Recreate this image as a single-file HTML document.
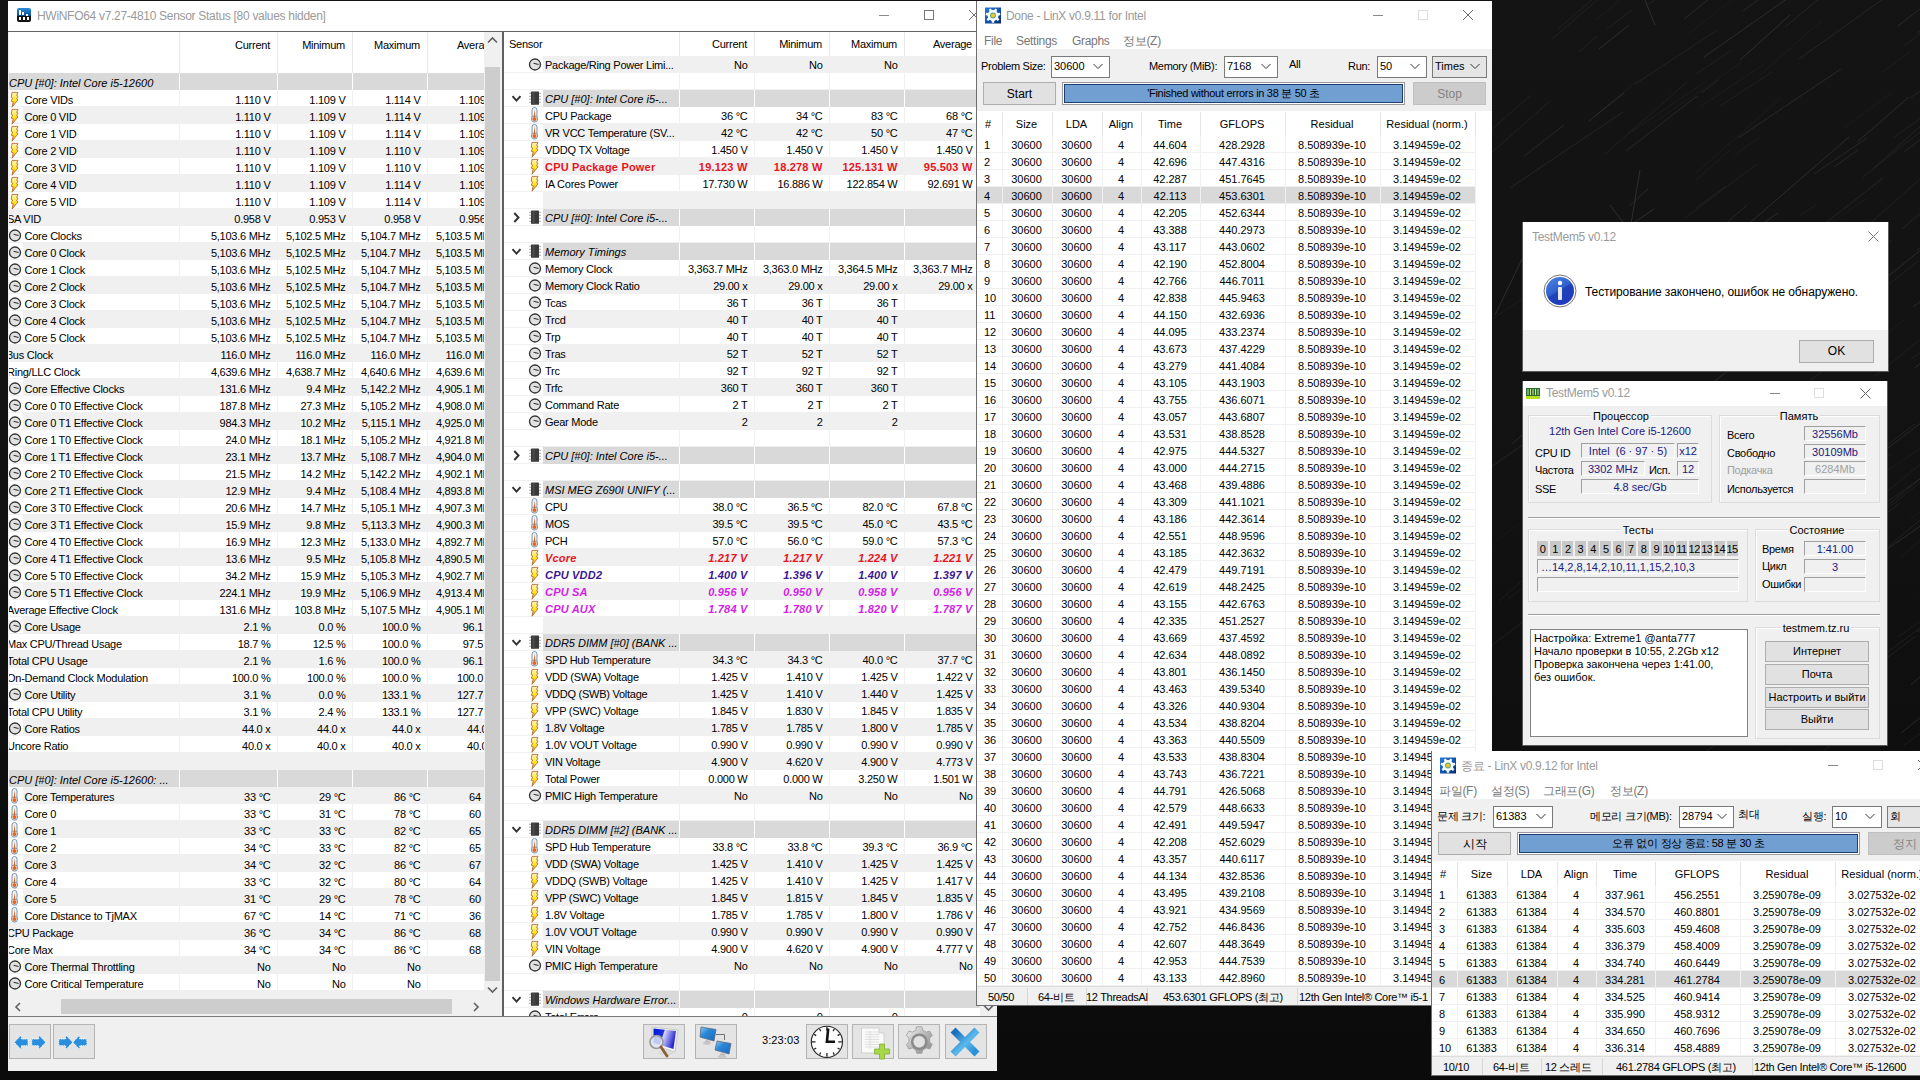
<!DOCTYPE html><html><head><meta charset="utf-8"><style>
*{box-sizing:border-box}
body{margin:0;width:1920px;height:1080px;overflow:hidden;position:relative;background:#151515;font-family:"Liberation Sans",sans-serif;font-size:11px;color:#000}
.a{position:absolute}
.t{position:absolute;white-space:nowrap;line-height:17px;height:17px}
.rt{text-align:right}
.ct{text-align:center}
.ic{position:absolute;width:16px;height:17px}
.bg{background:#f0f0f0}
.gr{background:#d9d9d9}
.hl{position:absolute;height:1px;background:#f0f0f0}
.vl{position:absolute;width:1px;background:#f0f0f0}
.it{font-style:italic}
.tb{position:absolute;white-space:nowrap;color:#9a9a9a;font-size:12px;line-height:16px;letter-spacing:-0.3px}
.h{letter-spacing:-0.25px}
.it.h{letter-spacing:0px}
.lb{letter-spacing:-0.3px}
</style></head><body>
<svg width="0" height="0" style="position:absolute">
<defs>
<linearGradient id="gb" x1="0" y1="0" x2="0" y2="1"><stop offset="0" stop-color="#fff6c0"/><stop offset="0.55" stop-color="#ffe61a"/><stop offset="1" stop-color="#f08a00"/></linearGradient>
<linearGradient id="gc" x1="0" y1="0" x2="0" y2="1"><stop offset="0" stop-color="#ffffff"/><stop offset="1" stop-color="#d0d0d0"/></linearGradient>
<linearGradient id="gt" x1="0" y1="0" x2="0" y2="1"><stop offset="0" stop-color="#f7c08a"/><stop offset="1" stop-color="#e0561a"/></linearGradient>
<symbol id="bolt" viewBox="0 0 16 17"><path d="M5,1.4 H11 L9.6,4.4 L11,5 L9.6,8 L11,8.8 L5,16.2 L6.2,10.8 L4.2,10.2 L5.6,7 L4.2,6.4 Z" fill="url(#gb)" stroke="#b5703a" stroke-width="0.9" stroke-linejoin="round"/></symbol>
<symbol id="clk" viewBox="0 0 16 17"><circle cx="8" cy="8.5" r="5.5" fill="#e2e2e2" stroke="#333" stroke-width="1.3"/><path d="M6.6 7.3 L11.6 8.5" stroke="#333" stroke-width="1.1"/></symbol>
<symbol id="thm" viewBox="0 0 16 17"><rect x="5" y="0.5" width="5" height="12" rx="2.5" fill="#eef6fc" stroke="#6a8aa8" stroke-width="0.9"/><circle cx="7.5" cy="12" r="3.1" fill="#eef6fc" stroke="#6a8aa8" stroke-width="0.9"/><path d="M7.5,2 L8.3,10.4 A1.9,1.9 0 1 1 6.7,10.4 Z" fill="#e8641e"/></symbol>
<symbol id="chip" viewBox="0 0 16 17"><path d="M2,3.3h2M2,6.3h2M2,9.3h2M2,12.3h2M12,3.3h2M12,6.3h2M12,9.3h2M12,12.3h2" stroke="#a8a8a8" stroke-width="1.1"/><rect x="4" y="1.5" width="8" height="13.3" rx="0.6" fill="#3a3a3a"/><rect x="5.5" y="2" width="2.2" height="12.4" fill="#4a4a4a"/></symbol>
<symbol id="chv" viewBox="0 0 16 17"><path d="M4.5 6.2 L8.5 10.6 L12.5 6.2" fill="none" stroke="#333" stroke-width="2"/></symbol>
<symbol id="chr" viewBox="0 0 16 17"><path d="M6.3 4 L10.5 8.5 L6.3 13" fill="none" stroke="#333" stroke-width="2"/></symbol>
<symbol id="dd" viewBox="0 0 12 12"><path d="M1.5 4 L6 8.5 L10.5 4" fill="none" stroke="#333" stroke-width="1"/></symbol>
<symbol id="gear" viewBox="0 0 16 16"><defs><linearGradient id="lxg" x1="0" y1="0" x2="1" y2="1"><stop offset="0" stop-color="#2a7ad8"/><stop offset="0.6" stop-color="#0d4ea8"/><stop offset="1" stop-color="#062a66"/></linearGradient></defs><rect width="16" height="16" fill="url(#lxg)"/><path d="M8.98,2.89 L10.12,0.91 L12.24,1.93 L11.39,4.06 L12.60,5.58 L14.86,5.23 L15.39,7.53 L13.20,8.19 L12.76,10.09 L14.44,11.64 L12.97,13.48 L11.09,12.18 L9.33,13.03 L9.17,15.31 L6.81,15.30 L6.66,13.02 L4.90,12.17 L3.02,13.47 L1.55,11.63 L3.24,10.08 L2.80,8.18 L0.62,7.51 L1.14,5.22 L3.40,5.57 L4.62,4.05 L3.78,1.92 L5.90,0.90 L7.03,2.89 Z" fill="#f4fbff"/><circle cx="8" cy="8" r="5.4" fill="#f4fbff"/><circle cx="8" cy="8" r="2.9" fill="#6aa070"/><circle cx="8" cy="8" r="1.9" fill="#e8c830"/></symbol>
</defs></svg>
<div class="a" style="left:0;top:0;width:1920px;height:1080px;background:linear-gradient(to bottom,#141414 0%,#121212 45%,#0d0d0d 80%,#0b0b0b 100%)"></div><svg class="a" style="left:1490px;top:0" width="430" height="760"><g stroke="#fff" stroke-width="1"><path d="M145 84l82 -54" stroke-opacity="0.06"/><path d="M291 737l72 -53" stroke-opacity="0.10"/><path d="M138 629l33 -26" stroke-opacity="0.06"/><path d="M253 11l22 -16" stroke-opacity="0.08"/><path d="M195 218l72 -54" stroke-opacity="0.05"/><path d="M371 533l39 -30" stroke-opacity="0.07"/><path d="M410 558l41 -36" stroke-opacity="0.04"/><path d="M191 581l30 -23" stroke-opacity="0.03"/><path d="M311 587l67 -58" stroke-opacity="0.05"/><path d="M324 447l71 -54" stroke-opacity="0.09"/><path d="M443 349l83 -55" stroke-opacity="0.08"/><path d="M301 774l97 -69" stroke-opacity="0.06"/><path d="M311 -21l62 -43" stroke-opacity="0.04"/><path d="M408 26l58 -45" stroke-opacity="0.09"/><path d="M383 668l43 -32" stroke-opacity="0.06"/><path d="M414 745l31 -22" stroke-opacity="0.05"/><path d="M191 263l66 -58" stroke-opacity="0.08"/><path d="M237 466l84 -56" stroke-opacity="0.09"/><path d="M364 677l93 -69" stroke-opacity="0.06"/><path d="M39 258l17 -15" stroke-opacity="0.04"/><path d="M111 245l53 -36" stroke-opacity="0.10"/><path d="M214 357l25 -17" stroke-opacity="0.05"/><path d="M117 640l33 -22" stroke-opacity="0.07"/><path d="M60 405l18 -14" stroke-opacity="0.09"/><path d="M324 174l53 -36" stroke-opacity="0.08"/><path d="M246 599l49 -34" stroke-opacity="0.09"/><path d="M463 659l89 -76" stroke-opacity="0.08"/><path d="M440 770l109 -80" stroke-opacity="0.05"/><path d="M99 121l35 -28" stroke-opacity="0.09"/><path d="M220 495l96 -64" stroke-opacity="0.08"/><path d="M427 601l88 -67" stroke-opacity="0.04"/><path d="M369 233l87 -77" stroke-opacity="0.06"/><path d="M183 736l88 -61" stroke-opacity="0.04"/><path d="M63 702l96 -66" stroke-opacity="0.10"/><path d="M305 247l71 -48" stroke-opacity="0.03"/><path d="M456 493l62 -55" stroke-opacity="0.06"/><path d="M408 637l37 -26" stroke-opacity="0.05"/><path d="M427 250l59 -46" stroke-opacity="0.09"/><path d="M192 713l63 -49" stroke-opacity="0.07"/><path d="M-1 321l35 -23" stroke-opacity="0.04"/><path d="M217 555l70 -51" stroke-opacity="0.07"/><path d="M257 603l26 -20" stroke-opacity="0.05"/><path d="M123 593l64 -50" stroke-opacity="0.09"/><path d="M203 462l64 -49" stroke-opacity="0.08"/><path d="M207 397l58 -51" stroke-opacity="0.08"/><path d="M411 733l40 -32" stroke-opacity="0.10"/><path d="M393 72l28 -21" stroke-opacity="0.04"/><path d="M106 20l77 -65" stroke-opacity="0.04"/><path d="M334 501l28 -24" stroke-opacity="0.10"/><path d="M95 741l54 -41" stroke-opacity="0.09"/><path d="M463 606l113 -76" stroke-opacity="0.05"/><path d="M427 632l42 -29" stroke-opacity="0.09"/><path d="M264 534l26 -17" stroke-opacity="0.08"/><path d="M194 19l103 -83" stroke-opacity="0.09"/><path d="M243 156l27 -19" stroke-opacity="0.03"/><path d="M230 106l52 -34" stroke-opacity="0.05"/><path d="M439 47l95 -71" stroke-opacity="0.06"/><path d="M391 282l63 -51" stroke-opacity="0.10"/><path d="M157 5l30 -20" stroke-opacity="0.05"/><path d="M68 29l92 -79" stroke-opacity="0.05"/><path d="M454 214l53 -34" stroke-opacity="0.06"/><path d="M218 372l35 -27" stroke-opacity="0.03"/><path d="M136 151l71 -55" stroke-opacity="0.08"/><path d="M334 681l54 -39" stroke-opacity="0.10"/><path d="M62 554l81 -53" stroke-opacity="0.09"/><path d="M291 562l97 -66" stroke-opacity="0.07"/><path d="M232 645l89 -76" stroke-opacity="0.07"/><path d="M419 520l84 -59" stroke-opacity="0.03"/><path d="M54 256l25 -21" stroke-opacity="0.07"/><path d="M291 518l66 -43" stroke-opacity="0.09"/><path d="M349 372l66 -53" stroke-opacity="0.03"/><path d="M344 167l24 -17" stroke-opacity="0.08"/><path d="M220 521l88 -70" stroke-opacity="0.07"/><path d="M263 -30l22 -16" stroke-opacity="0.08"/><path d="M322 514l43 -34" stroke-opacity="0.06"/><path d="M214 57l104 -73" stroke-opacity="0.10"/><path d="M439 -26l57 -49" stroke-opacity="0.10"/><path d="M206 180l34 -30" stroke-opacity="0.04"/><path d="M269 76l62 -55" stroke-opacity="0.04"/><path d="M384 377l98 -80" stroke-opacity="0.05"/><path d="M421 359l19 -13" stroke-opacity="0.06"/><path d="M206 208l30 -22" stroke-opacity="0.05"/><path d="M393 -39l84 -72" stroke-opacity="0.04"/><path d="M435 545l104 -75" stroke-opacity="0.06"/><path d="M179 779l73 -54" stroke-opacity="0.06"/><path d="M439 164l41 -32" stroke-opacity="0.04"/><path d="M169 744l96 -82" stroke-opacity="0.07"/><path d="M428 731l66 -55" stroke-opacity="0.03"/><path d="M342 330l86 -69" stroke-opacity="0.05"/><path d="M133 566l112 -79" stroke-opacity="0.05"/><path d="M258 283l33 -23" stroke-opacity="0.04"/><path d="M425 368l35 -31" stroke-opacity="0.10"/><path d="M206 74l36 -24" stroke-opacity="0.05"/><path d="M34 156l40 -31" stroke-opacity="0.08"/><path d="M188 299l67 -49" stroke-opacity="0.05"/><path d="M20 188l113 -76" stroke-opacity="0.07"/><path d="M404 137l43 -30" stroke-opacity="0.06"/><path d="M204 742l92 -80" stroke-opacity="0.03"/><path d="M5 542l101 -77" stroke-opacity="0.03"/><path d="M178 720l90 -78" stroke-opacity="0.10"/><path d="M109 49l30 -24" stroke-opacity="0.10"/><path d="M336 491l89 -67" stroke-opacity="0.07"/><path d="M9 601l36 -32" stroke-opacity="0.05"/><path d="M279 -31l45 -34" stroke-opacity="0.10"/><path d="M299 685l63 -44" stroke-opacity="0.05"/><path d="M451 538l48 -31" stroke-opacity="0.06"/><path d="M314 304l40 -32" stroke-opacity="0.09"/><path d="M99 -12l49 -36" stroke-opacity="0.04"/><path d="M373 566l66 -46" stroke-opacity="0.10"/><path d="M140 632l39 -27" stroke-opacity="0.05"/><path d="M447 367l35 -24" stroke-opacity="0.06"/><path d="M309 738l30 -22" stroke-opacity="0.04"/><path d="M458 76l22 -14" stroke-opacity="0.06"/><path d="M421 685l80 -72" stroke-opacity="0.10"/><path d="M309 270l52 -38" stroke-opacity="0.04"/><path d="M453 130l48 -41" stroke-opacity="0.09"/><path d="M198 0l62 -46" stroke-opacity="0.09"/><path d="M380 589l21 -14" stroke-opacity="0.03"/><path d="M432 171l83 -72" stroke-opacity="0.05"/><path d="M121 745l77 -54" stroke-opacity="0.05"/><path d="M122 -37l83 -73" stroke-opacity="0.10"/><path d="M2 152l58 -51" stroke-opacity="0.06"/><path d="M375 566l91 -76" stroke-opacity="0.07"/><path d="M255 227l104 -90" stroke-opacity="0.10"/><path d="M117 29l25 -19" stroke-opacity="0.06"/><path d="M102 302l73 -60" stroke-opacity="0.09"/><path d="M309 59l98 -70" stroke-opacity="0.07"/><path d="M169 565l36 -25" stroke-opacity="0.05"/><path d="M466 376l36 -31" stroke-opacity="0.08"/><path d="M466 44l59 -50" stroke-opacity="0.09"/><path d="M429 -7l46 -31" stroke-opacity="0.04"/><path d="M457 438l106 -78" stroke-opacity="0.09"/><path d="M206 173l85 -75" stroke-opacity="0.04"/><path d="M276 468l37 -27" stroke-opacity="0.04"/><path d="M180 411l80 -54" stroke-opacity="0.04"/><path d="M324 296l44 -32" stroke-opacity="0.10"/><path d="M140 425l50 -38" stroke-opacity="0.10"/><path d="M165 122l88 -61" stroke-opacity="0.03"/><path d="M423 307l95 -71" stroke-opacity="0.09"/><path d="M211 93l17 -13" stroke-opacity="0.07"/><path d="M427 33l76 -56" stroke-opacity="0.07"/><path d="M225 620l112 -78" stroke-opacity="0.04"/><path d="M443 760l65 -43" stroke-opacity="0.09"/><path d="M176 701l72 -61" stroke-opacity="0.04"/><path d="M367 142l52 -45" stroke-opacity="0.09"/><path d="M260 581l19 -16" stroke-opacity="0.04"/><path d="M278 411l77 -56" stroke-opacity="0.06"/><path d="M270 309l79 -60" stroke-opacity="0.06"/><path d="M1 467l64 -45" stroke-opacity="0.08"/><path d="M210 107l64 -43" stroke-opacity="0.04"/><path d="M197 35l58 -45" stroke-opacity="0.03"/><path d="M295 27l83 -69" stroke-opacity="0.07"/><path d="M401 777l82 -70" stroke-opacity="0.04"/><path d="M461 363l101 -89" stroke-opacity="0.04"/><path d="M368 723l22 -16" stroke-opacity="0.08"/><path d="M231 714l37 -26" stroke-opacity="0.07"/><path d="M143 -10l35 -24" stroke-opacity="0.08"/><path d="M420 98l95 -64" stroke-opacity="0.07"/><path d="M295 255l98 -77" stroke-opacity="0.07"/><path d="M414 46l109 -87" stroke-opacity="0.06"/><path d="M373 177l109 -86" stroke-opacity="0.06"/><path d="M357 323l32 -26" stroke-opacity="0.03"/><path d="M384 168l72 -65" stroke-opacity="0.07"/><path d="M309 216l17 -11" stroke-opacity="0.04"/><path d="M286 314l61 -54" stroke-opacity="0.04"/><path d="M41 253l37 -29" stroke-opacity="0.04"/><path d="M289 349l27 -24" stroke-opacity="0.05"/><path d="M62 39l73 -63" stroke-opacity="0.06"/><path d="M300 324l102 -84" stroke-opacity="0.05"/><path d="M424 -4l67 -50" stroke-opacity="0.05"/><path d="M18 599l17 -13" stroke-opacity="0.04"/><path d="M86 459l63 -51" stroke-opacity="0.04"/><path d="M139 206l19 -17" stroke-opacity="0.08"/><path d="M-7 652l87 -66" stroke-opacity="0.06"/><path d="M350 530l94 -77" stroke-opacity="0.05"/><path d="M256 318l91 -70" stroke-opacity="0.05"/><path d="M298 751l35 -30" stroke-opacity="0.03"/><path d="M115 154l82 -72" stroke-opacity="0.05"/><path d="M412 229l37 -32" stroke-opacity="0.07"/><path d="M323 505l109 -83" stroke-opacity="0.09"/><path d="M325 663l56 -46" stroke-opacity="0.07"/><path d="M138 134l79 -53" stroke-opacity="0.04"/><path d="M4 -6l80 -64" stroke-opacity="0.08"/><path d="M22 444l48 -41" stroke-opacity="0.09"/><path d="M89 52l18 -16" stroke-opacity="0.07"/><path d="M386 478l45 -30" stroke-opacity="0.04"/><path d="M354 128l47 -35" stroke-opacity="0.03"/><path d="M453 373l96 -76" stroke-opacity="0.03"/><path d="M188 318l91 -66" stroke-opacity="0.08"/><path d="M248 138l103 -69" stroke-opacity="0.09"/><path d="M72 -39l34 -28" stroke-opacity="0.03"/><path d="M226 363l95 -66" stroke-opacity="0.06"/><path d="M93 534l66 -45" stroke-opacity="0.04"/><path d="M368 532l89 -71" stroke-opacity="0.05"/><path d="M183 284l105 -71" stroke-opacity="0.09"/><path d="M2 129l39 -34" stroke-opacity="0.06"/><path d="M414 152l60 -46" stroke-opacity="0.08"/><path d="M351 490l50 -36" stroke-opacity="0.04"/><path d="M395 503l90 -62" stroke-opacity="0.06"/><path d="M361 435l28 -21" stroke-opacity="0.09"/><path d="M104 117l43 -36" stroke-opacity="0.04"/><path d="M452 43l49 -44" stroke-opacity="0.09"/><path d="M342 317l34 -27" stroke-opacity="0.04"/><path d="M89 278l19 -14" stroke-opacity="0.08"/><path d="M230 479l62 -43" stroke-opacity="0.07"/><path d="M184 568l103 -77" stroke-opacity="0.07"/><path d="M350 305l37 -30" stroke-opacity="0.09"/><path d="M362 534l95 -77" stroke-opacity="0.07"/></g><g stroke="#3a3a3a" stroke-width="1" opacity="0.7"><path d="M5 315 L46 230"/><path d="M120 205 L135 225"/><path d="M250 60 L300 15"/><path d="M155 0 L165 25"/><path d="M130 290 L150 170"/></g></svg><div class="a" style="left:8px;top:1px;width:989px;height:1070px;background:#f0f0f0"></div><div class="a" style="left:8px;top:1px;width:989px;height:30px;background:#fff"></div><div class="a" style="left:17px;top:8px;width:14px;height:14px;background:linear-gradient(#2b8fd8,#0a4d9a 55%,#111 56%);border-radius:2px"></div><div class="a" style="left:19px;top:10px;width:2px;height:5px;background:#fff"></div><div class="a" style="left:22px;top:12px;width:2px;height:3px;background:#fff"></div><div class="a" style="left:26px;top:14px;width:2px;height:2px;background:#fff"></div><div class="a" style="left:19px;top:17px;width:2px;height:3px;background:#fff"></div><div class="a" style="left:23px;top:17px;width:2px;height:3px;background:#fff"></div><div class="a" style="left:27px;top:17px;width:2px;height:3px;background:#fff"></div><div class="tb" style="left:37px;top:8px">HWiNFO64 v7.27-4810 Sensor Status [80 values hidden]</div><div class="a" style="left:879px;top:15px;width:10px;height:1px;background:#888"></div><div class="a" style="left:924px;top:10px;width:10px;height:10px;border:1px solid #777"></div><svg class="a" style="left:969px;top:10px" width="10" height="10"><path d="M0 0L10 10M10 0L0 10" stroke="#777" stroke-width="1"/></svg><div class="a" style="left:8px;top:31px;width:989px;height:1px;background:#646464"></div><div class="a" style="left:9px;top:32px;width:475px;height:966px;background:#fff;overflow:hidden"><div class="vl" style="left:169.5px;top:0px;height:41px;background:#e8e8e8"></div><div class="vl" style="left:267.5px;top:0px;height:41px;background:#e8e8e8"></div><div class="vl" style="left:342.5px;top:0px;height:41px;background:#e8e8e8"></div><div class="vl" style="left:417.5px;top:0px;height:41px;background:#e8e8e8"></div><div class="t rt h" style="left:181px;top:1px;width:80px;line-height:24px;height:24px">Current</div><div class="t rt h" style="left:256px;top:1px;width:80px;line-height:24px;height:24px">Minimum</div><div class="t rt h" style="left:331px;top:1px;width:80px;line-height:24px;height:24px">Maximum</div><div class="t rt h" style="left:407px;top:1px;width:80px;line-height:24px;height:24px">Average</div><div class="a gr" style="left:0px;top:41px;width:475px;height:17px"></div><div class="t it h" style="left:0px;top:43px">CPU [#0]: Intel Core i5-12600</div><div class="vl" style="left:169.5px;top:41px;height:17px;background:#fff"></div><div class="vl" style="left:267.5px;top:41px;height:17px;background:#fff"></div><div class="vl" style="left:342.5px;top:41px;height:17px;background:#fff"></div><div class="vl" style="left:417.5px;top:41px;height:17px;background:#fff"></div><div class="hl" style="left:0px;top:74px;width:475px"></div><div class="vl" style="left:169.5px;top:58px;height:17px"></div><div class="vl" style="left:267.5px;top:58px;height:17px"></div><div class="vl" style="left:342.5px;top:58px;height:17px"></div><div class="vl" style="left:417.5px;top:58px;height:17px"></div><svg class="ic" style="left:-2px;top:58.5px"><use href="#bolt"/></svg><div class="t h" style="left:15.5px;top:60px">Core VIDs</div><div class="t rt h" style="left:161.5px;top:60px;width:100px">1.110 V</div><div class="t rt h" style="left:236.5px;top:60px;width:100px">1.109 V</div><div class="t rt h" style="left:311.5px;top:60px;width:100px">1.114 V</div><div class="t rt h" style="left:386.5px;top:60px;width:100px">1.109 V</div><div class="a bg" style="left:14px;top:75px;width:461px;height:17px"></div><div class="hl" style="left:0px;top:91px;width:475px"></div><div class="vl" style="left:169.5px;top:75px;height:17px"></div><div class="vl" style="left:267.5px;top:75px;height:17px"></div><div class="vl" style="left:342.5px;top:75px;height:17px"></div><div class="vl" style="left:417.5px;top:75px;height:17px"></div><svg class="ic" style="left:-2px;top:75.5px"><use href="#bolt"/></svg><div class="t h" style="left:15.5px;top:77px">Core 0 VID</div><div class="t rt h" style="left:161.5px;top:77px;width:100px">1.110 V</div><div class="t rt h" style="left:236.5px;top:77px;width:100px">1.109 V</div><div class="t rt h" style="left:311.5px;top:77px;width:100px">1.114 V</div><div class="t rt h" style="left:386.5px;top:77px;width:100px">1.109 V</div><div class="hl" style="left:0px;top:108px;width:475px"></div><div class="vl" style="left:169.5px;top:92px;height:17px"></div><div class="vl" style="left:267.5px;top:92px;height:17px"></div><div class="vl" style="left:342.5px;top:92px;height:17px"></div><div class="vl" style="left:417.5px;top:92px;height:17px"></div><svg class="ic" style="left:-2px;top:92.5px"><use href="#bolt"/></svg><div class="t h" style="left:15.5px;top:94px">Core 1 VID</div><div class="t rt h" style="left:161.5px;top:94px;width:100px">1.110 V</div><div class="t rt h" style="left:236.5px;top:94px;width:100px">1.109 V</div><div class="t rt h" style="left:311.5px;top:94px;width:100px">1.114 V</div><div class="t rt h" style="left:386.5px;top:94px;width:100px">1.109 V</div><div class="a bg" style="left:14px;top:109px;width:461px;height:17px"></div><div class="hl" style="left:0px;top:125px;width:475px"></div><div class="vl" style="left:169.5px;top:109px;height:17px"></div><div class="vl" style="left:267.5px;top:109px;height:17px"></div><div class="vl" style="left:342.5px;top:109px;height:17px"></div><div class="vl" style="left:417.5px;top:109px;height:17px"></div><svg class="ic" style="left:-2px;top:109.5px"><use href="#bolt"/></svg><div class="t h" style="left:15.5px;top:111px">Core 2 VID</div><div class="t rt h" style="left:161.5px;top:111px;width:100px">1.110 V</div><div class="t rt h" style="left:236.5px;top:111px;width:100px">1.109 V</div><div class="t rt h" style="left:311.5px;top:111px;width:100px">1.110 V</div><div class="t rt h" style="left:386.5px;top:111px;width:100px">1.109 V</div><div class="hl" style="left:0px;top:142px;width:475px"></div><div class="vl" style="left:169.5px;top:126px;height:17px"></div><div class="vl" style="left:267.5px;top:126px;height:17px"></div><div class="vl" style="left:342.5px;top:126px;height:17px"></div><div class="vl" style="left:417.5px;top:126px;height:17px"></div><svg class="ic" style="left:-2px;top:126.5px"><use href="#bolt"/></svg><div class="t h" style="left:15.5px;top:128px">Core 3 VID</div><div class="t rt h" style="left:161.5px;top:128px;width:100px">1.110 V</div><div class="t rt h" style="left:236.5px;top:128px;width:100px">1.109 V</div><div class="t rt h" style="left:311.5px;top:128px;width:100px">1.110 V</div><div class="t rt h" style="left:386.5px;top:128px;width:100px">1.109 V</div><div class="a bg" style="left:14px;top:143px;width:461px;height:17px"></div><div class="hl" style="left:0px;top:159px;width:475px"></div><div class="vl" style="left:169.5px;top:143px;height:17px"></div><div class="vl" style="left:267.5px;top:143px;height:17px"></div><div class="vl" style="left:342.5px;top:143px;height:17px"></div><div class="vl" style="left:417.5px;top:143px;height:17px"></div><svg class="ic" style="left:-2px;top:143.5px"><use href="#bolt"/></svg><div class="t h" style="left:15.5px;top:145px">Core 4 VID</div><div class="t rt h" style="left:161.5px;top:145px;width:100px">1.110 V</div><div class="t rt h" style="left:236.5px;top:145px;width:100px">1.109 V</div><div class="t rt h" style="left:311.5px;top:145px;width:100px">1.114 V</div><div class="t rt h" style="left:386.5px;top:145px;width:100px">1.109 V</div><div class="hl" style="left:0px;top:176px;width:475px"></div><div class="vl" style="left:169.5px;top:160px;height:17px"></div><div class="vl" style="left:267.5px;top:160px;height:17px"></div><div class="vl" style="left:342.5px;top:160px;height:17px"></div><div class="vl" style="left:417.5px;top:160px;height:17px"></div><svg class="ic" style="left:-2px;top:160.5px"><use href="#bolt"/></svg><div class="t h" style="left:15.5px;top:162px">Core 5 VID</div><div class="t rt h" style="left:161.5px;top:162px;width:100px">1.110 V</div><div class="t rt h" style="left:236.5px;top:162px;width:100px">1.109 V</div><div class="t rt h" style="left:311.5px;top:162px;width:100px">1.114 V</div><div class="t rt h" style="left:386.5px;top:162px;width:100px">1.109 V</div><div class="a bg" style="left:0px;top:177px;width:475px;height:17px"></div><div class="hl" style="left:0px;top:193px;width:475px"></div><div class="vl" style="left:169.5px;top:177px;height:17px"></div><div class="vl" style="left:267.5px;top:177px;height:17px"></div><div class="vl" style="left:342.5px;top:177px;height:17px"></div><div class="vl" style="left:417.5px;top:177px;height:17px"></div><div class="t h" style="left:-2px;top:179px">SA VID</div><div class="t rt h" style="left:161.5px;top:179px;width:100px">0.958 V</div><div class="t rt h" style="left:236.5px;top:179px;width:100px">0.953 V</div><div class="t rt h" style="left:311.5px;top:179px;width:100px">0.958 V</div><div class="t rt h" style="left:386.5px;top:179px;width:100px">0.956 V</div><div class="hl" style="left:0px;top:210px;width:475px"></div><div class="vl" style="left:169.5px;top:194px;height:17px"></div><div class="vl" style="left:267.5px;top:194px;height:17px"></div><div class="vl" style="left:342.5px;top:194px;height:17px"></div><div class="vl" style="left:417.5px;top:194px;height:17px"></div><svg class="ic" style="left:-2px;top:194.5px"><use href="#clk"/></svg><div class="t h" style="left:15.5px;top:196px">Core Clocks</div><div class="t rt h" style="left:161.5px;top:196px;width:100px">5,103.6 MHz</div><div class="t rt h" style="left:236.5px;top:196px;width:100px">5,102.5 MHz</div><div class="t rt h" style="left:311.5px;top:196px;width:100px">5,104.7 MHz</div><div class="t rt h" style="left:386.5px;top:196px;width:100px">5,103.5 MHz</div><div class="a bg" style="left:14px;top:211px;width:461px;height:17px"></div><div class="hl" style="left:0px;top:227px;width:475px"></div><div class="vl" style="left:169.5px;top:211px;height:17px"></div><div class="vl" style="left:267.5px;top:211px;height:17px"></div><div class="vl" style="left:342.5px;top:211px;height:17px"></div><div class="vl" style="left:417.5px;top:211px;height:17px"></div><svg class="ic" style="left:-2px;top:211.5px"><use href="#clk"/></svg><div class="t h" style="left:15.5px;top:213px">Core 0 Clock</div><div class="t rt h" style="left:161.5px;top:213px;width:100px">5,103.6 MHz</div><div class="t rt h" style="left:236.5px;top:213px;width:100px">5,102.5 MHz</div><div class="t rt h" style="left:311.5px;top:213px;width:100px">5,104.7 MHz</div><div class="t rt h" style="left:386.5px;top:213px;width:100px">5,103.5 MHz</div><div class="hl" style="left:0px;top:244px;width:475px"></div><div class="vl" style="left:169.5px;top:228px;height:17px"></div><div class="vl" style="left:267.5px;top:228px;height:17px"></div><div class="vl" style="left:342.5px;top:228px;height:17px"></div><div class="vl" style="left:417.5px;top:228px;height:17px"></div><svg class="ic" style="left:-2px;top:228.5px"><use href="#clk"/></svg><div class="t h" style="left:15.5px;top:230px">Core 1 Clock</div><div class="t rt h" style="left:161.5px;top:230px;width:100px">5,103.6 MHz</div><div class="t rt h" style="left:236.5px;top:230px;width:100px">5,102.5 MHz</div><div class="t rt h" style="left:311.5px;top:230px;width:100px">5,104.7 MHz</div><div class="t rt h" style="left:386.5px;top:230px;width:100px">5,103.5 MHz</div><div class="a bg" style="left:14px;top:245px;width:461px;height:17px"></div><div class="hl" style="left:0px;top:261px;width:475px"></div><div class="vl" style="left:169.5px;top:245px;height:17px"></div><div class="vl" style="left:267.5px;top:245px;height:17px"></div><div class="vl" style="left:342.5px;top:245px;height:17px"></div><div class="vl" style="left:417.5px;top:245px;height:17px"></div><svg class="ic" style="left:-2px;top:245.5px"><use href="#clk"/></svg><div class="t h" style="left:15.5px;top:247px">Core 2 Clock</div><div class="t rt h" style="left:161.5px;top:247px;width:100px">5,103.6 MHz</div><div class="t rt h" style="left:236.5px;top:247px;width:100px">5,102.5 MHz</div><div class="t rt h" style="left:311.5px;top:247px;width:100px">5,104.7 MHz</div><div class="t rt h" style="left:386.5px;top:247px;width:100px">5,103.5 MHz</div><div class="hl" style="left:0px;top:278px;width:475px"></div><div class="vl" style="left:169.5px;top:262px;height:17px"></div><div class="vl" style="left:267.5px;top:262px;height:17px"></div><div class="vl" style="left:342.5px;top:262px;height:17px"></div><div class="vl" style="left:417.5px;top:262px;height:17px"></div><svg class="ic" style="left:-2px;top:262.5px"><use href="#clk"/></svg><div class="t h" style="left:15.5px;top:264px">Core 3 Clock</div><div class="t rt h" style="left:161.5px;top:264px;width:100px">5,103.6 MHz</div><div class="t rt h" style="left:236.5px;top:264px;width:100px">5,102.5 MHz</div><div class="t rt h" style="left:311.5px;top:264px;width:100px">5,104.7 MHz</div><div class="t rt h" style="left:386.5px;top:264px;width:100px">5,103.5 MHz</div><div class="a bg" style="left:14px;top:279px;width:461px;height:17px"></div><div class="hl" style="left:0px;top:295px;width:475px"></div><div class="vl" style="left:169.5px;top:279px;height:17px"></div><div class="vl" style="left:267.5px;top:279px;height:17px"></div><div class="vl" style="left:342.5px;top:279px;height:17px"></div><div class="vl" style="left:417.5px;top:279px;height:17px"></div><svg class="ic" style="left:-2px;top:279.5px"><use href="#clk"/></svg><div class="t h" style="left:15.5px;top:281px">Core 4 Clock</div><div class="t rt h" style="left:161.5px;top:281px;width:100px">5,103.6 MHz</div><div class="t rt h" style="left:236.5px;top:281px;width:100px">5,102.5 MHz</div><div class="t rt h" style="left:311.5px;top:281px;width:100px">5,104.7 MHz</div><div class="t rt h" style="left:386.5px;top:281px;width:100px">5,103.5 MHz</div><div class="hl" style="left:0px;top:312px;width:475px"></div><div class="vl" style="left:169.5px;top:296px;height:17px"></div><div class="vl" style="left:267.5px;top:296px;height:17px"></div><div class="vl" style="left:342.5px;top:296px;height:17px"></div><div class="vl" style="left:417.5px;top:296px;height:17px"></div><svg class="ic" style="left:-2px;top:296.5px"><use href="#clk"/></svg><div class="t h" style="left:15.5px;top:298px">Core 5 Clock</div><div class="t rt h" style="left:161.5px;top:298px;width:100px">5,103.6 MHz</div><div class="t rt h" style="left:236.5px;top:298px;width:100px">5,102.5 MHz</div><div class="t rt h" style="left:311.5px;top:298px;width:100px">5,104.7 MHz</div><div class="t rt h" style="left:386.5px;top:298px;width:100px">5,103.5 MHz</div><div class="a bg" style="left:0px;top:313px;width:475px;height:17px"></div><div class="hl" style="left:0px;top:329px;width:475px"></div><div class="vl" style="left:169.5px;top:313px;height:17px"></div><div class="vl" style="left:267.5px;top:313px;height:17px"></div><div class="vl" style="left:342.5px;top:313px;height:17px"></div><div class="vl" style="left:417.5px;top:313px;height:17px"></div><div class="t h" style="left:-2px;top:315px">3us Clock</div><div class="t rt h" style="left:161.5px;top:315px;width:100px">116.0 MHz</div><div class="t rt h" style="left:236.5px;top:315px;width:100px">116.0 MHz</div><div class="t rt h" style="left:311.5px;top:315px;width:100px">116.0 MHz</div><div class="t rt h" style="left:386.5px;top:315px;width:100px">116.0 MHz</div><div class="hl" style="left:0px;top:346px;width:475px"></div><div class="vl" style="left:169.5px;top:330px;height:17px"></div><div class="vl" style="left:267.5px;top:330px;height:17px"></div><div class="vl" style="left:342.5px;top:330px;height:17px"></div><div class="vl" style="left:417.5px;top:330px;height:17px"></div><div class="t h" style="left:-2px;top:332px">Ring/LLC Clock</div><div class="t rt h" style="left:161.5px;top:332px;width:100px">4,639.6 MHz</div><div class="t rt h" style="left:236.5px;top:332px;width:100px">4,638.7 MHz</div><div class="t rt h" style="left:311.5px;top:332px;width:100px">4,640.6 MHz</div><div class="t rt h" style="left:386.5px;top:332px;width:100px">4,639.6 MHz</div><div class="a bg" style="left:14px;top:347px;width:461px;height:17px"></div><div class="hl" style="left:0px;top:363px;width:475px"></div><div class="vl" style="left:169.5px;top:347px;height:17px"></div><div class="vl" style="left:267.5px;top:347px;height:17px"></div><div class="vl" style="left:342.5px;top:347px;height:17px"></div><div class="vl" style="left:417.5px;top:347px;height:17px"></div><svg class="ic" style="left:-2px;top:347.5px"><use href="#clk"/></svg><div class="t h" style="left:15.5px;top:349px">Core Effective Clocks</div><div class="t rt h" style="left:161.5px;top:349px;width:100px">131.6 MHz</div><div class="t rt h" style="left:236.5px;top:349px;width:100px">9.4 MHz</div><div class="t rt h" style="left:311.5px;top:349px;width:100px">5,142.2 MHz</div><div class="t rt h" style="left:386.5px;top:349px;width:100px">4,905.1 MHz</div><div class="hl" style="left:0px;top:380px;width:475px"></div><div class="vl" style="left:169.5px;top:364px;height:17px"></div><div class="vl" style="left:267.5px;top:364px;height:17px"></div><div class="vl" style="left:342.5px;top:364px;height:17px"></div><div class="vl" style="left:417.5px;top:364px;height:17px"></div><svg class="ic" style="left:-2px;top:364.5px"><use href="#clk"/></svg><div class="t h" style="left:15.5px;top:366px">Core 0 T0 Effective Clock</div><div class="t rt h" style="left:161.5px;top:366px;width:100px">187.8 MHz</div><div class="t rt h" style="left:236.5px;top:366px;width:100px">27.3 MHz</div><div class="t rt h" style="left:311.5px;top:366px;width:100px">5,105.2 MHz</div><div class="t rt h" style="left:386.5px;top:366px;width:100px">4,908.0 MHz</div><div class="a bg" style="left:14px;top:381px;width:461px;height:17px"></div><div class="hl" style="left:0px;top:397px;width:475px"></div><div class="vl" style="left:169.5px;top:381px;height:17px"></div><div class="vl" style="left:267.5px;top:381px;height:17px"></div><div class="vl" style="left:342.5px;top:381px;height:17px"></div><div class="vl" style="left:417.5px;top:381px;height:17px"></div><svg class="ic" style="left:-2px;top:381.5px"><use href="#clk"/></svg><div class="t h" style="left:15.5px;top:383px">Core 0 T1 Effective Clock</div><div class="t rt h" style="left:161.5px;top:383px;width:100px">984.3 MHz</div><div class="t rt h" style="left:236.5px;top:383px;width:100px">10.2 MHz</div><div class="t rt h" style="left:311.5px;top:383px;width:100px">5,115.1 MHz</div><div class="t rt h" style="left:386.5px;top:383px;width:100px">4,925.0 MHz</div><div class="hl" style="left:0px;top:414px;width:475px"></div><div class="vl" style="left:169.5px;top:398px;height:17px"></div><div class="vl" style="left:267.5px;top:398px;height:17px"></div><div class="vl" style="left:342.5px;top:398px;height:17px"></div><div class="vl" style="left:417.5px;top:398px;height:17px"></div><svg class="ic" style="left:-2px;top:398.5px"><use href="#clk"/></svg><div class="t h" style="left:15.5px;top:400px">Core 1 T0 Effective Clock</div><div class="t rt h" style="left:161.5px;top:400px;width:100px">24.0 MHz</div><div class="t rt h" style="left:236.5px;top:400px;width:100px">18.1 MHz</div><div class="t rt h" style="left:311.5px;top:400px;width:100px">5,105.2 MHz</div><div class="t rt h" style="left:386.5px;top:400px;width:100px">4,921.8 MHz</div><div class="a bg" style="left:14px;top:415px;width:461px;height:17px"></div><div class="hl" style="left:0px;top:431px;width:475px"></div><div class="vl" style="left:169.5px;top:415px;height:17px"></div><div class="vl" style="left:267.5px;top:415px;height:17px"></div><div class="vl" style="left:342.5px;top:415px;height:17px"></div><div class="vl" style="left:417.5px;top:415px;height:17px"></div><svg class="ic" style="left:-2px;top:415.5px"><use href="#clk"/></svg><div class="t h" style="left:15.5px;top:417px">Core 1 T1 Effective Clock</div><div class="t rt h" style="left:161.5px;top:417px;width:100px">23.1 MHz</div><div class="t rt h" style="left:236.5px;top:417px;width:100px">13.7 MHz</div><div class="t rt h" style="left:311.5px;top:417px;width:100px">5,108.7 MHz</div><div class="t rt h" style="left:386.5px;top:417px;width:100px">4,904.0 MHz</div><div class="hl" style="left:0px;top:448px;width:475px"></div><div class="vl" style="left:169.5px;top:432px;height:17px"></div><div class="vl" style="left:267.5px;top:432px;height:17px"></div><div class="vl" style="left:342.5px;top:432px;height:17px"></div><div class="vl" style="left:417.5px;top:432px;height:17px"></div><svg class="ic" style="left:-2px;top:432.5px"><use href="#clk"/></svg><div class="t h" style="left:15.5px;top:434px">Core 2 T0 Effective Clock</div><div class="t rt h" style="left:161.5px;top:434px;width:100px">21.5 MHz</div><div class="t rt h" style="left:236.5px;top:434px;width:100px">14.2 MHz</div><div class="t rt h" style="left:311.5px;top:434px;width:100px">5,142.2 MHz</div><div class="t rt h" style="left:386.5px;top:434px;width:100px">4,902.1 MHz</div><div class="a bg" style="left:14px;top:449px;width:461px;height:17px"></div><div class="hl" style="left:0px;top:465px;width:475px"></div><div class="vl" style="left:169.5px;top:449px;height:17px"></div><div class="vl" style="left:267.5px;top:449px;height:17px"></div><div class="vl" style="left:342.5px;top:449px;height:17px"></div><div class="vl" style="left:417.5px;top:449px;height:17px"></div><svg class="ic" style="left:-2px;top:449.5px"><use href="#clk"/></svg><div class="t h" style="left:15.5px;top:451px">Core 2 T1 Effective Clock</div><div class="t rt h" style="left:161.5px;top:451px;width:100px">12.9 MHz</div><div class="t rt h" style="left:236.5px;top:451px;width:100px">9.4 MHz</div><div class="t rt h" style="left:311.5px;top:451px;width:100px">5,108.4 MHz</div><div class="t rt h" style="left:386.5px;top:451px;width:100px">4,893.8 MHz</div><div class="hl" style="left:0px;top:482px;width:475px"></div><div class="vl" style="left:169.5px;top:466px;height:17px"></div><div class="vl" style="left:267.5px;top:466px;height:17px"></div><div class="vl" style="left:342.5px;top:466px;height:17px"></div><div class="vl" style="left:417.5px;top:466px;height:17px"></div><svg class="ic" style="left:-2px;top:466.5px"><use href="#clk"/></svg><div class="t h" style="left:15.5px;top:468px">Core 3 T0 Effective Clock</div><div class="t rt h" style="left:161.5px;top:468px;width:100px">20.6 MHz</div><div class="t rt h" style="left:236.5px;top:468px;width:100px">14.7 MHz</div><div class="t rt h" style="left:311.5px;top:468px;width:100px">5,105.1 MHz</div><div class="t rt h" style="left:386.5px;top:468px;width:100px">4,907.3 MHz</div><div class="a bg" style="left:14px;top:483px;width:461px;height:17px"></div><div class="hl" style="left:0px;top:499px;width:475px"></div><div class="vl" style="left:169.5px;top:483px;height:17px"></div><div class="vl" style="left:267.5px;top:483px;height:17px"></div><div class="vl" style="left:342.5px;top:483px;height:17px"></div><div class="vl" style="left:417.5px;top:483px;height:17px"></div><svg class="ic" style="left:-2px;top:483.5px"><use href="#clk"/></svg><div class="t h" style="left:15.5px;top:485px">Core 3 T1 Effective Clock</div><div class="t rt h" style="left:161.5px;top:485px;width:100px">15.9 MHz</div><div class="t rt h" style="left:236.5px;top:485px;width:100px">9.8 MHz</div><div class="t rt h" style="left:311.5px;top:485px;width:100px">5,113.3 MHz</div><div class="t rt h" style="left:386.5px;top:485px;width:100px">4,900.3 MHz</div><div class="hl" style="left:0px;top:516px;width:475px"></div><div class="vl" style="left:169.5px;top:500px;height:17px"></div><div class="vl" style="left:267.5px;top:500px;height:17px"></div><div class="vl" style="left:342.5px;top:500px;height:17px"></div><div class="vl" style="left:417.5px;top:500px;height:17px"></div><svg class="ic" style="left:-2px;top:500.5px"><use href="#clk"/></svg><div class="t h" style="left:15.5px;top:502px">Core 4 T0 Effective Clock</div><div class="t rt h" style="left:161.5px;top:502px;width:100px">16.9 MHz</div><div class="t rt h" style="left:236.5px;top:502px;width:100px">12.3 MHz</div><div class="t rt h" style="left:311.5px;top:502px;width:100px">5,133.0 MHz</div><div class="t rt h" style="left:386.5px;top:502px;width:100px">4,892.7 MHz</div><div class="a bg" style="left:14px;top:517px;width:461px;height:17px"></div><div class="hl" style="left:0px;top:533px;width:475px"></div><div class="vl" style="left:169.5px;top:517px;height:17px"></div><div class="vl" style="left:267.5px;top:517px;height:17px"></div><div class="vl" style="left:342.5px;top:517px;height:17px"></div><div class="vl" style="left:417.5px;top:517px;height:17px"></div><svg class="ic" style="left:-2px;top:517.5px"><use href="#clk"/></svg><div class="t h" style="left:15.5px;top:519px">Core 4 T1 Effective Clock</div><div class="t rt h" style="left:161.5px;top:519px;width:100px">13.6 MHz</div><div class="t rt h" style="left:236.5px;top:519px;width:100px">9.5 MHz</div><div class="t rt h" style="left:311.5px;top:519px;width:100px">5,105.8 MHz</div><div class="t rt h" style="left:386.5px;top:519px;width:100px">4,890.5 MHz</div><div class="hl" style="left:0px;top:550px;width:475px"></div><div class="vl" style="left:169.5px;top:534px;height:17px"></div><div class="vl" style="left:267.5px;top:534px;height:17px"></div><div class="vl" style="left:342.5px;top:534px;height:17px"></div><div class="vl" style="left:417.5px;top:534px;height:17px"></div><svg class="ic" style="left:-2px;top:534.5px"><use href="#clk"/></svg><div class="t h" style="left:15.5px;top:536px">Core 5 T0 Effective Clock</div><div class="t rt h" style="left:161.5px;top:536px;width:100px">34.2 MHz</div><div class="t rt h" style="left:236.5px;top:536px;width:100px">15.9 MHz</div><div class="t rt h" style="left:311.5px;top:536px;width:100px">5,105.3 MHz</div><div class="t rt h" style="left:386.5px;top:536px;width:100px">4,902.7 MHz</div><div class="a bg" style="left:14px;top:551px;width:461px;height:17px"></div><div class="hl" style="left:0px;top:567px;width:475px"></div><div class="vl" style="left:169.5px;top:551px;height:17px"></div><div class="vl" style="left:267.5px;top:551px;height:17px"></div><div class="vl" style="left:342.5px;top:551px;height:17px"></div><div class="vl" style="left:417.5px;top:551px;height:17px"></div><svg class="ic" style="left:-2px;top:551.5px"><use href="#clk"/></svg><div class="t h" style="left:15.5px;top:553px">Core 5 T1 Effective Clock</div><div class="t rt h" style="left:161.5px;top:553px;width:100px">224.1 MHz</div><div class="t rt h" style="left:236.5px;top:553px;width:100px">19.9 MHz</div><div class="t rt h" style="left:311.5px;top:553px;width:100px">5,106.9 MHz</div><div class="t rt h" style="left:386.5px;top:553px;width:100px">4,913.4 MHz</div><div class="hl" style="left:0px;top:584px;width:475px"></div><div class="vl" style="left:169.5px;top:568px;height:17px"></div><div class="vl" style="left:267.5px;top:568px;height:17px"></div><div class="vl" style="left:342.5px;top:568px;height:17px"></div><div class="vl" style="left:417.5px;top:568px;height:17px"></div><div class="t h" style="left:-2px;top:570px">Average Effective Clock</div><div class="t rt h" style="left:161.5px;top:570px;width:100px">131.6 MHz</div><div class="t rt h" style="left:236.5px;top:570px;width:100px">103.8 MHz</div><div class="t rt h" style="left:311.5px;top:570px;width:100px">5,107.5 MHz</div><div class="t rt h" style="left:386.5px;top:570px;width:100px">4,905.1 MHz</div><div class="a bg" style="left:14px;top:585px;width:461px;height:17px"></div><div class="hl" style="left:0px;top:601px;width:475px"></div><div class="vl" style="left:169.5px;top:585px;height:17px"></div><div class="vl" style="left:267.5px;top:585px;height:17px"></div><div class="vl" style="left:342.5px;top:585px;height:17px"></div><div class="vl" style="left:417.5px;top:585px;height:17px"></div><svg class="ic" style="left:-2px;top:585.5px"><use href="#clk"/></svg><div class="t h" style="left:15.5px;top:587px">Core Usage</div><div class="t rt h" style="left:161.5px;top:587px;width:100px">2.1 %</div><div class="t rt h" style="left:236.5px;top:587px;width:100px">0.0 %</div><div class="t rt h" style="left:311.5px;top:587px;width:100px">100.0 %</div><div class="t rt h" style="left:386.5px;top:587px;width:100px">96.1 %</div><div class="hl" style="left:0px;top:618px;width:475px"></div><div class="vl" style="left:169.5px;top:602px;height:17px"></div><div class="vl" style="left:267.5px;top:602px;height:17px"></div><div class="vl" style="left:342.5px;top:602px;height:17px"></div><div class="vl" style="left:417.5px;top:602px;height:17px"></div><div class="t h" style="left:-2px;top:604px">Max CPU/Thread Usage</div><div class="t rt h" style="left:161.5px;top:604px;width:100px">18.7 %</div><div class="t rt h" style="left:236.5px;top:604px;width:100px">12.5 %</div><div class="t rt h" style="left:311.5px;top:604px;width:100px">100.0 %</div><div class="t rt h" style="left:386.5px;top:604px;width:100px">97.5 %</div><div class="a bg" style="left:0px;top:619px;width:475px;height:17px"></div><div class="hl" style="left:0px;top:635px;width:475px"></div><div class="vl" style="left:169.5px;top:619px;height:17px"></div><div class="vl" style="left:267.5px;top:619px;height:17px"></div><div class="vl" style="left:342.5px;top:619px;height:17px"></div><div class="vl" style="left:417.5px;top:619px;height:17px"></div><div class="t h" style="left:-2px;top:621px">Total CPU Usage</div><div class="t rt h" style="left:161.5px;top:621px;width:100px">2.1 %</div><div class="t rt h" style="left:236.5px;top:621px;width:100px">1.6 %</div><div class="t rt h" style="left:311.5px;top:621px;width:100px">100.0 %</div><div class="t rt h" style="left:386.5px;top:621px;width:100px">96.1 %</div><div class="hl" style="left:0px;top:652px;width:475px"></div><div class="vl" style="left:169.5px;top:636px;height:17px"></div><div class="vl" style="left:267.5px;top:636px;height:17px"></div><div class="vl" style="left:342.5px;top:636px;height:17px"></div><div class="vl" style="left:417.5px;top:636px;height:17px"></div><div class="t h" style="left:-2px;top:638px">On-Demand Clock Modulation</div><div class="t rt h" style="left:161.5px;top:638px;width:100px">100.0 %</div><div class="t rt h" style="left:236.5px;top:638px;width:100px">100.0 %</div><div class="t rt h" style="left:311.5px;top:638px;width:100px">100.0 %</div><div class="t rt h" style="left:386.5px;top:638px;width:100px">100.0 %</div><div class="a bg" style="left:14px;top:653px;width:461px;height:17px"></div><div class="hl" style="left:0px;top:669px;width:475px"></div><div class="vl" style="left:169.5px;top:653px;height:17px"></div><div class="vl" style="left:267.5px;top:653px;height:17px"></div><div class="vl" style="left:342.5px;top:653px;height:17px"></div><div class="vl" style="left:417.5px;top:653px;height:17px"></div><svg class="ic" style="left:-2px;top:653.5px"><use href="#clk"/></svg><div class="t h" style="left:15.5px;top:655px">Core Utility</div><div class="t rt h" style="left:161.5px;top:655px;width:100px">3.1 %</div><div class="t rt h" style="left:236.5px;top:655px;width:100px">0.0 %</div><div class="t rt h" style="left:311.5px;top:655px;width:100px">133.1 %</div><div class="t rt h" style="left:386.5px;top:655px;width:100px">127.7 %</div><div class="hl" style="left:0px;top:686px;width:475px"></div><div class="vl" style="left:169.5px;top:670px;height:17px"></div><div class="vl" style="left:267.5px;top:670px;height:17px"></div><div class="vl" style="left:342.5px;top:670px;height:17px"></div><div class="vl" style="left:417.5px;top:670px;height:17px"></div><div class="t h" style="left:-2px;top:672px">Total CPU Utility</div><div class="t rt h" style="left:161.5px;top:672px;width:100px">3.1 %</div><div class="t rt h" style="left:236.5px;top:672px;width:100px">2.4 %</div><div class="t rt h" style="left:311.5px;top:672px;width:100px">133.1 %</div><div class="t rt h" style="left:386.5px;top:672px;width:100px">127.7 %</div><div class="a bg" style="left:14px;top:687px;width:461px;height:17px"></div><div class="hl" style="left:0px;top:703px;width:475px"></div><div class="vl" style="left:169.5px;top:687px;height:17px"></div><div class="vl" style="left:267.5px;top:687px;height:17px"></div><div class="vl" style="left:342.5px;top:687px;height:17px"></div><div class="vl" style="left:417.5px;top:687px;height:17px"></div><svg class="ic" style="left:-2px;top:687.5px"><use href="#clk"/></svg><div class="t h" style="left:15.5px;top:689px">Core Ratios</div><div class="t rt h" style="left:161.5px;top:689px;width:100px">44.0 x</div><div class="t rt h" style="left:236.5px;top:689px;width:100px">44.0 x</div><div class="t rt h" style="left:311.5px;top:689px;width:100px">44.0 x</div><div class="t rt h" style="left:386.5px;top:689px;width:100px">44.0 x</div><div class="hl" style="left:0px;top:720px;width:475px"></div><div class="vl" style="left:169.5px;top:704px;height:17px"></div><div class="vl" style="left:267.5px;top:704px;height:17px"></div><div class="vl" style="left:342.5px;top:704px;height:17px"></div><div class="vl" style="left:417.5px;top:704px;height:17px"></div><div class="t h" style="left:-2px;top:706px">Uncore Ratio</div><div class="t rt h" style="left:161.5px;top:706px;width:100px">40.0 x</div><div class="t rt h" style="left:236.5px;top:706px;width:100px">40.0 x</div><div class="t rt h" style="left:311.5px;top:706px;width:100px">40.0 x</div><div class="t rt h" style="left:386.5px;top:706px;width:100px">40.0 x</div><div class="a bg" style="left:0px;top:721px;width:475px;height:17px"></div><div class="hl" style="left:0px;top:737px;width:475px"></div><div class="vl" style="left:169.5px;top:721px;height:17px"></div><div class="vl" style="left:267.5px;top:721px;height:17px"></div><div class="vl" style="left:342.5px;top:721px;height:17px"></div><div class="vl" style="left:417.5px;top:721px;height:17px"></div><div class="t h" style="left:-2px;top:723px"></div><div class="a gr" style="left:0px;top:738px;width:475px;height:17px"></div><div class="t it h" style="left:0px;top:740px">CPU [#0]: Intel Core i5-12600: ...</div><div class="vl" style="left:169.5px;top:738px;height:17px;background:#fff"></div><div class="vl" style="left:267.5px;top:738px;height:17px;background:#fff"></div><div class="vl" style="left:342.5px;top:738px;height:17px;background:#fff"></div><div class="vl" style="left:417.5px;top:738px;height:17px;background:#fff"></div><div class="a bg" style="left:14px;top:755px;width:461px;height:17px"></div><div class="hl" style="left:0px;top:771px;width:475px"></div><div class="vl" style="left:169.5px;top:755px;height:17px"></div><div class="vl" style="left:267.5px;top:755px;height:17px"></div><div class="vl" style="left:342.5px;top:755px;height:17px"></div><div class="vl" style="left:417.5px;top:755px;height:17px"></div><svg class="ic" style="left:-2px;top:755.5px"><use href="#thm"/></svg><div class="t h" style="left:15.5px;top:757px">Core Temperatures</div><div class="t rt h" style="left:161.5px;top:757px;width:100px">33 °C</div><div class="t rt h" style="left:236.5px;top:757px;width:100px">29 °C</div><div class="t rt h" style="left:311.5px;top:757px;width:100px">86 °C</div><div class="t rt h" style="left:386.5px;top:757px;width:100px">64 °C</div><div class="hl" style="left:0px;top:788px;width:475px"></div><div class="vl" style="left:169.5px;top:772px;height:17px"></div><div class="vl" style="left:267.5px;top:772px;height:17px"></div><div class="vl" style="left:342.5px;top:772px;height:17px"></div><div class="vl" style="left:417.5px;top:772px;height:17px"></div><svg class="ic" style="left:-2px;top:772.5px"><use href="#thm"/></svg><div class="t h" style="left:15.5px;top:774px">Core 0</div><div class="t rt h" style="left:161.5px;top:774px;width:100px">33 °C</div><div class="t rt h" style="left:236.5px;top:774px;width:100px">31 °C</div><div class="t rt h" style="left:311.5px;top:774px;width:100px">78 °C</div><div class="t rt h" style="left:386.5px;top:774px;width:100px">60 °C</div><div class="a bg" style="left:14px;top:789px;width:461px;height:17px"></div><div class="hl" style="left:0px;top:805px;width:475px"></div><div class="vl" style="left:169.5px;top:789px;height:17px"></div><div class="vl" style="left:267.5px;top:789px;height:17px"></div><div class="vl" style="left:342.5px;top:789px;height:17px"></div><div class="vl" style="left:417.5px;top:789px;height:17px"></div><svg class="ic" style="left:-2px;top:789.5px"><use href="#thm"/></svg><div class="t h" style="left:15.5px;top:791px">Core 1</div><div class="t rt h" style="left:161.5px;top:791px;width:100px">33 °C</div><div class="t rt h" style="left:236.5px;top:791px;width:100px">33 °C</div><div class="t rt h" style="left:311.5px;top:791px;width:100px">82 °C</div><div class="t rt h" style="left:386.5px;top:791px;width:100px">65 °C</div><div class="hl" style="left:0px;top:822px;width:475px"></div><div class="vl" style="left:169.5px;top:806px;height:17px"></div><div class="vl" style="left:267.5px;top:806px;height:17px"></div><div class="vl" style="left:342.5px;top:806px;height:17px"></div><div class="vl" style="left:417.5px;top:806px;height:17px"></div><svg class="ic" style="left:-2px;top:806.5px"><use href="#thm"/></svg><div class="t h" style="left:15.5px;top:808px">Core 2</div><div class="t rt h" style="left:161.5px;top:808px;width:100px">34 °C</div><div class="t rt h" style="left:236.5px;top:808px;width:100px">33 °C</div><div class="t rt h" style="left:311.5px;top:808px;width:100px">82 °C</div><div class="t rt h" style="left:386.5px;top:808px;width:100px">65 °C</div><div class="a bg" style="left:14px;top:823px;width:461px;height:17px"></div><div class="hl" style="left:0px;top:839px;width:475px"></div><div class="vl" style="left:169.5px;top:823px;height:17px"></div><div class="vl" style="left:267.5px;top:823px;height:17px"></div><div class="vl" style="left:342.5px;top:823px;height:17px"></div><div class="vl" style="left:417.5px;top:823px;height:17px"></div><svg class="ic" style="left:-2px;top:823.5px"><use href="#thm"/></svg><div class="t h" style="left:15.5px;top:825px">Core 3</div><div class="t rt h" style="left:161.5px;top:825px;width:100px">34 °C</div><div class="t rt h" style="left:236.5px;top:825px;width:100px">32 °C</div><div class="t rt h" style="left:311.5px;top:825px;width:100px">86 °C</div><div class="t rt h" style="left:386.5px;top:825px;width:100px">67 °C</div><div class="hl" style="left:0px;top:856px;width:475px"></div><div class="vl" style="left:169.5px;top:840px;height:17px"></div><div class="vl" style="left:267.5px;top:840px;height:17px"></div><div class="vl" style="left:342.5px;top:840px;height:17px"></div><div class="vl" style="left:417.5px;top:840px;height:17px"></div><svg class="ic" style="left:-2px;top:840.5px"><use href="#thm"/></svg><div class="t h" style="left:15.5px;top:842px">Core 4</div><div class="t rt h" style="left:161.5px;top:842px;width:100px">33 °C</div><div class="t rt h" style="left:236.5px;top:842px;width:100px">32 °C</div><div class="t rt h" style="left:311.5px;top:842px;width:100px">80 °C</div><div class="t rt h" style="left:386.5px;top:842px;width:100px">64 °C</div><div class="a bg" style="left:14px;top:857px;width:461px;height:17px"></div><div class="hl" style="left:0px;top:873px;width:475px"></div><div class="vl" style="left:169.5px;top:857px;height:17px"></div><div class="vl" style="left:267.5px;top:857px;height:17px"></div><div class="vl" style="left:342.5px;top:857px;height:17px"></div><div class="vl" style="left:417.5px;top:857px;height:17px"></div><svg class="ic" style="left:-2px;top:857.5px"><use href="#thm"/></svg><div class="t h" style="left:15.5px;top:859px">Core 5</div><div class="t rt h" style="left:161.5px;top:859px;width:100px">31 °C</div><div class="t rt h" style="left:236.5px;top:859px;width:100px">29 °C</div><div class="t rt h" style="left:311.5px;top:859px;width:100px">78 °C</div><div class="t rt h" style="left:386.5px;top:859px;width:100px">60 °C</div><div class="hl" style="left:0px;top:890px;width:475px"></div><div class="vl" style="left:169.5px;top:874px;height:17px"></div><div class="vl" style="left:267.5px;top:874px;height:17px"></div><div class="vl" style="left:342.5px;top:874px;height:17px"></div><div class="vl" style="left:417.5px;top:874px;height:17px"></div><svg class="ic" style="left:-2px;top:874.5px"><use href="#thm"/></svg><div class="t h" style="left:15.5px;top:876px">Core Distance to TjMAX</div><div class="t rt h" style="left:161.5px;top:876px;width:100px">67 °C</div><div class="t rt h" style="left:236.5px;top:876px;width:100px">14 °C</div><div class="t rt h" style="left:311.5px;top:876px;width:100px">71 °C</div><div class="t rt h" style="left:386.5px;top:876px;width:100px">36 °C</div><div class="a bg" style="left:0px;top:891px;width:475px;height:17px"></div><div class="hl" style="left:0px;top:907px;width:475px"></div><div class="vl" style="left:169.5px;top:891px;height:17px"></div><div class="vl" style="left:267.5px;top:891px;height:17px"></div><div class="vl" style="left:342.5px;top:891px;height:17px"></div><div class="vl" style="left:417.5px;top:891px;height:17px"></div><div class="t h" style="left:-2px;top:893px">CPU Package</div><div class="t rt h" style="left:161.5px;top:893px;width:100px">36 °C</div><div class="t rt h" style="left:236.5px;top:893px;width:100px">34 °C</div><div class="t rt h" style="left:311.5px;top:893px;width:100px">86 °C</div><div class="t rt h" style="left:386.5px;top:893px;width:100px">68 °C</div><div class="hl" style="left:0px;top:924px;width:475px"></div><div class="vl" style="left:169.5px;top:908px;height:17px"></div><div class="vl" style="left:267.5px;top:908px;height:17px"></div><div class="vl" style="left:342.5px;top:908px;height:17px"></div><div class="vl" style="left:417.5px;top:908px;height:17px"></div><div class="t h" style="left:-2px;top:910px">Core Max</div><div class="t rt h" style="left:161.5px;top:910px;width:100px">34 °C</div><div class="t rt h" style="left:236.5px;top:910px;width:100px">34 °C</div><div class="t rt h" style="left:311.5px;top:910px;width:100px">86 °C</div><div class="t rt h" style="left:386.5px;top:910px;width:100px">68 °C</div><div class="a bg" style="left:14px;top:925px;width:461px;height:17px"></div><div class="hl" style="left:0px;top:941px;width:475px"></div><div class="vl" style="left:169.5px;top:925px;height:17px"></div><div class="vl" style="left:267.5px;top:925px;height:17px"></div><div class="vl" style="left:342.5px;top:925px;height:17px"></div><div class="vl" style="left:417.5px;top:925px;height:17px"></div><svg class="ic" style="left:-2px;top:925.5px"><use href="#clk"/></svg><div class="t h" style="left:15.5px;top:927px">Core Thermal Throttling</div><div class="t rt h" style="left:161.5px;top:927px;width:100px">No</div><div class="t rt h" style="left:236.5px;top:927px;width:100px">No</div><div class="t rt h" style="left:311.5px;top:927px;width:100px">No</div><div class="hl" style="left:0px;top:958px;width:475px"></div><div class="vl" style="left:169.5px;top:942px;height:17px"></div><div class="vl" style="left:267.5px;top:942px;height:17px"></div><div class="vl" style="left:342.5px;top:942px;height:17px"></div><div class="vl" style="left:417.5px;top:942px;height:17px"></div><svg class="ic" style="left:-2px;top:942.5px"><use href="#clk"/></svg><div class="t h" style="left:15.5px;top:944px">Core Critical Temperature</div><div class="t rt h" style="left:161.5px;top:944px;width:100px">No</div><div class="t rt h" style="left:236.5px;top:944px;width:100px">No</div><div class="t rt h" style="left:311.5px;top:944px;width:100px">No</div><div class="a bg" style="left:0px;top:959px;width:475px;height:17px"></div><div class="hl" style="left:0px;top:975px;width:475px"></div><div class="vl" style="left:169.5px;top:959px;height:17px"></div><div class="vl" style="left:267.5px;top:959px;height:17px"></div><div class="vl" style="left:342.5px;top:959px;height:17px"></div><div class="vl" style="left:417.5px;top:959px;height:17px"></div><div class="t h" style="left:-2px;top:961px"></div></div><div class="a" style="left:484px;top:32px;width:17px;height:967px;background:#f0f0f0"></div><div class="a" style="left:485px;top:67px;width:15px;height:914px;background:#cdcdcd"></div><svg class="a" style="left:487px;top:36px" width="11" height="8"><path d="M1 6.5L5.5 2L10 6.5" fill="none" stroke="#606060" stroke-width="1.6"/></svg><svg class="a" style="left:487px;top:986px" width="11" height="8"><path d="M1 1.5L5.5 6L10 1.5" fill="none" stroke="#606060" stroke-width="1.6"/></svg><div class="a" style="left:9px;top:998px;width:492px;height:18px;background:#f0f0f0"></div><div class="a" style="left:61px;top:999px;width:391px;height:15px;background:#cdcdcd"></div><svg class="a" style="left:14px;top:1002px" width="8" height="10"><path d="M6 1L2 5L6 9" fill="none" stroke="#606060" stroke-width="1.6"/></svg><svg class="a" style="left:472px;top:1002px" width="8" height="10"><path d="M2 1L6 5L2 9" fill="none" stroke="#606060" stroke-width="1.6"/></svg><div class="a" style="left:501px;top:32px;width:3px;height:984px;background:#f0f0f0"></div><div class="a" style="left:502px;top:32px;width:2px;height:984px;background:#5f5f5f"></div><div class="a" style="left:504px;top:32px;width:493px;height:984px;background:#fff;overflow:hidden"><div class="vl" style="left:174.5px;top:0px;height:24px;background:#e8e8e8"></div><div class="vl" style="left:249.5px;top:0px;height:24px;background:#e8e8e8"></div><div class="vl" style="left:324.5px;top:0px;height:24px;background:#e8e8e8"></div><div class="vl" style="left:399.5px;top:0px;height:24px;background:#e8e8e8"></div><div class="t h" style="left:5px;top:0px;line-height:24px;height:24px">Sensor</div><div class="t rt h" style="left:163px;top:0px;width:80px;line-height:24px;height:24px">Current</div><div class="t rt h" style="left:238px;top:0px;width:80px;line-height:24px;height:24px">Minimum</div><div class="t rt h" style="left:313px;top:0px;width:80px;line-height:24px;height:24px">Maximum</div><div class="t rt h" style="left:388px;top:0px;width:80px;line-height:24px;height:24px">Average</div><div class="a bg" style="left:39px;top:24px;width:460px;height:17px"></div><div class="hl" style="left:0px;top:40px;width:493px"></div><div class="vl" style="left:174.5px;top:24px;height:17px"></div><div class="vl" style="left:249.5px;top:24px;height:17px"></div><div class="vl" style="left:324.5px;top:24px;height:17px"></div><div class="vl" style="left:399.5px;top:24px;height:17px"></div><svg class="ic" style="left:23px;top:24px"><use href="#clk"/></svg><div class="t h" style="left:41px;top:25px;">Package/Ring Power Limi...</div><div class="t rt h" style="left:143.5px;top:25px;width:100px;">No</div><div class="t rt h" style="left:218.5px;top:25px;width:100px;">No</div><div class="t rt h" style="left:293.5px;top:25px;width:100px;">No</div><div class="hl" style="left:0px;top:57px;width:493px"></div><div class="vl" style="left:174.5px;top:41px;height:17px"></div><div class="vl" style="left:249.5px;top:41px;height:17px"></div><div class="vl" style="left:324.5px;top:41px;height:17px"></div><div class="vl" style="left:399.5px;top:41px;height:17px"></div><div class="a gr" style="left:39px;top:58px;width:460px;height:17px"></div><div class="hl" style="left:0px;top:74px;width:39px"></div><svg class="ic" style="left:4px;top:58px"><use href="#chv"/></svg><svg class="ic" style="left:23px;top:58px"><use href="#chip"/></svg><div class="t it h" style="left:41px;top:59px">CPU [#0]: Intel Core i5-...</div><div class="vl" style="left:174.5px;top:58px;height:17px;background:#fff"></div><div class="vl" style="left:249.5px;top:58px;height:17px;background:#fff"></div><div class="vl" style="left:324.5px;top:58px;height:17px;background:#fff"></div><div class="vl" style="left:399.5px;top:58px;height:17px;background:#fff"></div><div class="hl" style="left:0px;top:91px;width:493px"></div><div class="vl" style="left:174.5px;top:75px;height:17px"></div><div class="vl" style="left:249.5px;top:75px;height:17px"></div><div class="vl" style="left:324.5px;top:75px;height:17px"></div><div class="vl" style="left:399.5px;top:75px;height:17px"></div><svg class="ic" style="left:23px;top:75px"><use href="#thm"/></svg><div class="t h" style="left:41px;top:76px;">CPU Package</div><div class="t rt h" style="left:143.5px;top:76px;width:100px;">36 °C</div><div class="t rt h" style="left:218.5px;top:76px;width:100px;">34 °C</div><div class="t rt h" style="left:293.5px;top:76px;width:100px;">83 °C</div><div class="t rt h" style="left:368.5px;top:76px;width:100px;">68 °C</div><div class="a bg" style="left:39px;top:92px;width:460px;height:17px"></div><div class="hl" style="left:0px;top:108px;width:493px"></div><div class="vl" style="left:174.5px;top:92px;height:17px"></div><div class="vl" style="left:249.5px;top:92px;height:17px"></div><div class="vl" style="left:324.5px;top:92px;height:17px"></div><div class="vl" style="left:399.5px;top:92px;height:17px"></div><svg class="ic" style="left:23px;top:92px"><use href="#thm"/></svg><div class="t h" style="left:41px;top:93px;">VR VCC Temperature (SV...</div><div class="t rt h" style="left:143.5px;top:93px;width:100px;">42 °C</div><div class="t rt h" style="left:218.5px;top:93px;width:100px;">42 °C</div><div class="t rt h" style="left:293.5px;top:93px;width:100px;">50 °C</div><div class="t rt h" style="left:368.5px;top:93px;width:100px;">47 °C</div><div class="hl" style="left:0px;top:125px;width:493px"></div><div class="vl" style="left:174.5px;top:109px;height:17px"></div><div class="vl" style="left:249.5px;top:109px;height:17px"></div><div class="vl" style="left:324.5px;top:109px;height:17px"></div><div class="vl" style="left:399.5px;top:109px;height:17px"></div><svg class="ic" style="left:23px;top:109px"><use href="#bolt"/></svg><div class="t h" style="left:41px;top:110px;">VDDQ TX Voltage</div><div class="t rt h" style="left:143.5px;top:110px;width:100px;">1.450 V</div><div class="t rt h" style="left:218.5px;top:110px;width:100px;">1.450 V</div><div class="t rt h" style="left:293.5px;top:110px;width:100px;">1.450 V</div><div class="t rt h" style="left:368.5px;top:110px;width:100px;">1.450 V</div><div class="a bg" style="left:39px;top:126px;width:460px;height:17px"></div><div class="hl" style="left:0px;top:142px;width:493px"></div><div class="vl" style="left:174.5px;top:126px;height:17px"></div><div class="vl" style="left:249.5px;top:126px;height:17px"></div><div class="vl" style="left:324.5px;top:126px;height:17px"></div><div class="vl" style="left:399.5px;top:126px;height:17px"></div><svg class="ic" style="left:23px;top:126px"><use href="#bolt"/></svg><div class="t h" style="left:41px;top:127px;color:#e8141c;font-weight:bold;letter-spacing:0.2px">CPU Package Power</div><div class="t rt h" style="left:143.5px;top:127px;width:100px;color:#e8141c;font-weight:bold;letter-spacing:0.2px">19.123 W</div><div class="t rt h" style="left:218.5px;top:127px;width:100px;color:#e8141c;font-weight:bold;letter-spacing:0.2px">18.278 W</div><div class="t rt h" style="left:293.5px;top:127px;width:100px;color:#e8141c;font-weight:bold;letter-spacing:0.2px">125.131 W</div><div class="t rt h" style="left:368.5px;top:127px;width:100px;color:#e8141c;font-weight:bold;letter-spacing:0.2px">95.503 W</div><div class="hl" style="left:0px;top:159px;width:493px"></div><div class="vl" style="left:174.5px;top:143px;height:17px"></div><div class="vl" style="left:249.5px;top:143px;height:17px"></div><div class="vl" style="left:324.5px;top:143px;height:17px"></div><div class="vl" style="left:399.5px;top:143px;height:17px"></div><svg class="ic" style="left:23px;top:143px"><use href="#bolt"/></svg><div class="t h" style="left:41px;top:144px;">IA Cores Power</div><div class="t rt h" style="left:143.5px;top:144px;width:100px;">17.730 W</div><div class="t rt h" style="left:218.5px;top:144px;width:100px;">16.886 W</div><div class="t rt h" style="left:293.5px;top:144px;width:100px;">122.854 W</div><div class="t rt h" style="left:368.5px;top:144px;width:100px;">92.691 W</div><div class="a bg" style="left:39px;top:160px;width:460px;height:17px"></div><div class="hl" style="left:0px;top:176px;width:493px"></div><div class="vl" style="left:174.5px;top:160px;height:17px"></div><div class="vl" style="left:249.5px;top:160px;height:17px"></div><div class="vl" style="left:324.5px;top:160px;height:17px"></div><div class="vl" style="left:399.5px;top:160px;height:17px"></div><div class="a gr" style="left:39px;top:177px;width:460px;height:17px"></div><div class="hl" style="left:0px;top:193px;width:39px"></div><svg class="ic" style="left:4px;top:177px"><use href="#chr"/></svg><svg class="ic" style="left:23px;top:177px"><use href="#chip"/></svg><div class="t it h" style="left:41px;top:178px">CPU [#0]: Intel Core i5-...</div><div class="vl" style="left:174.5px;top:177px;height:17px;background:#fff"></div><div class="vl" style="left:249.5px;top:177px;height:17px;background:#fff"></div><div class="vl" style="left:324.5px;top:177px;height:17px;background:#fff"></div><div class="vl" style="left:399.5px;top:177px;height:17px;background:#fff"></div><div class="hl" style="left:0px;top:210px;width:493px"></div><div class="vl" style="left:174.5px;top:194px;height:17px"></div><div class="vl" style="left:249.5px;top:194px;height:17px"></div><div class="vl" style="left:324.5px;top:194px;height:17px"></div><div class="vl" style="left:399.5px;top:194px;height:17px"></div><div class="a gr" style="left:39px;top:211px;width:460px;height:17px"></div><div class="hl" style="left:0px;top:227px;width:39px"></div><svg class="ic" style="left:4px;top:211px"><use href="#chv"/></svg><svg class="ic" style="left:23px;top:211px"><use href="#chip"/></svg><div class="t it h" style="left:41px;top:212px">Memory Timings</div><div class="vl" style="left:174.5px;top:211px;height:17px;background:#fff"></div><div class="vl" style="left:249.5px;top:211px;height:17px;background:#fff"></div><div class="vl" style="left:324.5px;top:211px;height:17px;background:#fff"></div><div class="vl" style="left:399.5px;top:211px;height:17px;background:#fff"></div><div class="hl" style="left:0px;top:244px;width:493px"></div><div class="vl" style="left:174.5px;top:228px;height:17px"></div><div class="vl" style="left:249.5px;top:228px;height:17px"></div><div class="vl" style="left:324.5px;top:228px;height:17px"></div><div class="vl" style="left:399.5px;top:228px;height:17px"></div><svg class="ic" style="left:23px;top:228px"><use href="#clk"/></svg><div class="t h" style="left:41px;top:229px;">Memory Clock</div><div class="t rt h" style="left:143.5px;top:229px;width:100px;">3,363.7 MHz</div><div class="t rt h" style="left:218.5px;top:229px;width:100px;">3,363.0 MHz</div><div class="t rt h" style="left:293.5px;top:229px;width:100px;">3,364.5 MHz</div><div class="t rt h" style="left:368.5px;top:229px;width:100px;">3,363.7 MHz</div><div class="a bg" style="left:39px;top:245px;width:460px;height:17px"></div><div class="hl" style="left:0px;top:261px;width:493px"></div><div class="vl" style="left:174.5px;top:245px;height:17px"></div><div class="vl" style="left:249.5px;top:245px;height:17px"></div><div class="vl" style="left:324.5px;top:245px;height:17px"></div><div class="vl" style="left:399.5px;top:245px;height:17px"></div><svg class="ic" style="left:23px;top:245px"><use href="#clk"/></svg><div class="t h" style="left:41px;top:246px;">Memory Clock Ratio</div><div class="t rt h" style="left:143.5px;top:246px;width:100px;">29.00 x</div><div class="t rt h" style="left:218.5px;top:246px;width:100px;">29.00 x</div><div class="t rt h" style="left:293.5px;top:246px;width:100px;">29.00 x</div><div class="t rt h" style="left:368.5px;top:246px;width:100px;">29.00 x</div><div class="hl" style="left:0px;top:278px;width:493px"></div><div class="vl" style="left:174.5px;top:262px;height:17px"></div><div class="vl" style="left:249.5px;top:262px;height:17px"></div><div class="vl" style="left:324.5px;top:262px;height:17px"></div><div class="vl" style="left:399.5px;top:262px;height:17px"></div><svg class="ic" style="left:23px;top:262px"><use href="#clk"/></svg><div class="t h" style="left:41px;top:263px;">Tcas</div><div class="t rt h" style="left:143.5px;top:263px;width:100px;">36 T</div><div class="t rt h" style="left:218.5px;top:263px;width:100px;">36 T</div><div class="t rt h" style="left:293.5px;top:263px;width:100px;">36 T</div><div class="a bg" style="left:39px;top:279px;width:460px;height:17px"></div><div class="hl" style="left:0px;top:295px;width:493px"></div><div class="vl" style="left:174.5px;top:279px;height:17px"></div><div class="vl" style="left:249.5px;top:279px;height:17px"></div><div class="vl" style="left:324.5px;top:279px;height:17px"></div><div class="vl" style="left:399.5px;top:279px;height:17px"></div><svg class="ic" style="left:23px;top:279px"><use href="#clk"/></svg><div class="t h" style="left:41px;top:280px;">Trcd</div><div class="t rt h" style="left:143.5px;top:280px;width:100px;">40 T</div><div class="t rt h" style="left:218.5px;top:280px;width:100px;">40 T</div><div class="t rt h" style="left:293.5px;top:280px;width:100px;">40 T</div><div class="hl" style="left:0px;top:312px;width:493px"></div><div class="vl" style="left:174.5px;top:296px;height:17px"></div><div class="vl" style="left:249.5px;top:296px;height:17px"></div><div class="vl" style="left:324.5px;top:296px;height:17px"></div><div class="vl" style="left:399.5px;top:296px;height:17px"></div><svg class="ic" style="left:23px;top:296px"><use href="#clk"/></svg><div class="t h" style="left:41px;top:297px;">Trp</div><div class="t rt h" style="left:143.5px;top:297px;width:100px;">40 T</div><div class="t rt h" style="left:218.5px;top:297px;width:100px;">40 T</div><div class="t rt h" style="left:293.5px;top:297px;width:100px;">40 T</div><div class="a bg" style="left:39px;top:313px;width:460px;height:17px"></div><div class="hl" style="left:0px;top:329px;width:493px"></div><div class="vl" style="left:174.5px;top:313px;height:17px"></div><div class="vl" style="left:249.5px;top:313px;height:17px"></div><div class="vl" style="left:324.5px;top:313px;height:17px"></div><div class="vl" style="left:399.5px;top:313px;height:17px"></div><svg class="ic" style="left:23px;top:313px"><use href="#clk"/></svg><div class="t h" style="left:41px;top:314px;">Tras</div><div class="t rt h" style="left:143.5px;top:314px;width:100px;">52 T</div><div class="t rt h" style="left:218.5px;top:314px;width:100px;">52 T</div><div class="t rt h" style="left:293.5px;top:314px;width:100px;">52 T</div><div class="hl" style="left:0px;top:346px;width:493px"></div><div class="vl" style="left:174.5px;top:330px;height:17px"></div><div class="vl" style="left:249.5px;top:330px;height:17px"></div><div class="vl" style="left:324.5px;top:330px;height:17px"></div><div class="vl" style="left:399.5px;top:330px;height:17px"></div><svg class="ic" style="left:23px;top:330px"><use href="#clk"/></svg><div class="t h" style="left:41px;top:331px;">Trc</div><div class="t rt h" style="left:143.5px;top:331px;width:100px;">92 T</div><div class="t rt h" style="left:218.5px;top:331px;width:100px;">92 T</div><div class="t rt h" style="left:293.5px;top:331px;width:100px;">92 T</div><div class="a bg" style="left:39px;top:347px;width:460px;height:17px"></div><div class="hl" style="left:0px;top:363px;width:493px"></div><div class="vl" style="left:174.5px;top:347px;height:17px"></div><div class="vl" style="left:249.5px;top:347px;height:17px"></div><div class="vl" style="left:324.5px;top:347px;height:17px"></div><div class="vl" style="left:399.5px;top:347px;height:17px"></div><svg class="ic" style="left:23px;top:347px"><use href="#clk"/></svg><div class="t h" style="left:41px;top:348px;">Trfc</div><div class="t rt h" style="left:143.5px;top:348px;width:100px;">360 T</div><div class="t rt h" style="left:218.5px;top:348px;width:100px;">360 T</div><div class="t rt h" style="left:293.5px;top:348px;width:100px;">360 T</div><div class="hl" style="left:0px;top:380px;width:493px"></div><div class="vl" style="left:174.5px;top:364px;height:17px"></div><div class="vl" style="left:249.5px;top:364px;height:17px"></div><div class="vl" style="left:324.5px;top:364px;height:17px"></div><div class="vl" style="left:399.5px;top:364px;height:17px"></div><svg class="ic" style="left:23px;top:364px"><use href="#clk"/></svg><div class="t h" style="left:41px;top:365px;">Command Rate</div><div class="t rt h" style="left:143.5px;top:365px;width:100px;">2 T</div><div class="t rt h" style="left:218.5px;top:365px;width:100px;">2 T</div><div class="t rt h" style="left:293.5px;top:365px;width:100px;">2 T</div><div class="a bg" style="left:39px;top:381px;width:460px;height:17px"></div><div class="hl" style="left:0px;top:397px;width:493px"></div><div class="vl" style="left:174.5px;top:381px;height:17px"></div><div class="vl" style="left:249.5px;top:381px;height:17px"></div><div class="vl" style="left:324.5px;top:381px;height:17px"></div><div class="vl" style="left:399.5px;top:381px;height:17px"></div><svg class="ic" style="left:23px;top:381px"><use href="#clk"/></svg><div class="t h" style="left:41px;top:382px;">Gear Mode</div><div class="t rt h" style="left:143.5px;top:382px;width:100px;">2</div><div class="t rt h" style="left:218.5px;top:382px;width:100px;">2</div><div class="t rt h" style="left:293.5px;top:382px;width:100px;">2</div><div class="hl" style="left:0px;top:414px;width:493px"></div><div class="vl" style="left:174.5px;top:398px;height:17px"></div><div class="vl" style="left:249.5px;top:398px;height:17px"></div><div class="vl" style="left:324.5px;top:398px;height:17px"></div><div class="vl" style="left:399.5px;top:398px;height:17px"></div><div class="a gr" style="left:39px;top:415px;width:460px;height:17px"></div><div class="hl" style="left:0px;top:431px;width:39px"></div><svg class="ic" style="left:4px;top:415px"><use href="#chr"/></svg><svg class="ic" style="left:23px;top:415px"><use href="#chip"/></svg><div class="t it h" style="left:41px;top:416px">CPU [#0]: Intel Core i5-...</div><div class="vl" style="left:174.5px;top:415px;height:17px;background:#fff"></div><div class="vl" style="left:249.5px;top:415px;height:17px;background:#fff"></div><div class="vl" style="left:324.5px;top:415px;height:17px;background:#fff"></div><div class="vl" style="left:399.5px;top:415px;height:17px;background:#fff"></div><div class="hl" style="left:0px;top:448px;width:493px"></div><div class="vl" style="left:174.5px;top:432px;height:17px"></div><div class="vl" style="left:249.5px;top:432px;height:17px"></div><div class="vl" style="left:324.5px;top:432px;height:17px"></div><div class="vl" style="left:399.5px;top:432px;height:17px"></div><div class="a gr" style="left:39px;top:449px;width:460px;height:17px"></div><div class="hl" style="left:0px;top:465px;width:39px"></div><svg class="ic" style="left:4px;top:449px"><use href="#chv"/></svg><svg class="ic" style="left:23px;top:449px"><use href="#chip"/></svg><div class="t it h" style="left:41px;top:450px">MSI MEG Z690I UNIFY (...</div><div class="vl" style="left:174.5px;top:449px;height:17px;background:#fff"></div><div class="vl" style="left:249.5px;top:449px;height:17px;background:#fff"></div><div class="vl" style="left:324.5px;top:449px;height:17px;background:#fff"></div><div class="vl" style="left:399.5px;top:449px;height:17px;background:#fff"></div><div class="hl" style="left:0px;top:482px;width:493px"></div><div class="vl" style="left:174.5px;top:466px;height:17px"></div><div class="vl" style="left:249.5px;top:466px;height:17px"></div><div class="vl" style="left:324.5px;top:466px;height:17px"></div><div class="vl" style="left:399.5px;top:466px;height:17px"></div><svg class="ic" style="left:23px;top:466px"><use href="#thm"/></svg><div class="t h" style="left:41px;top:467px;">CPU</div><div class="t rt h" style="left:143.5px;top:467px;width:100px;">38.0 °C</div><div class="t rt h" style="left:218.5px;top:467px;width:100px;">36.5 °C</div><div class="t rt h" style="left:293.5px;top:467px;width:100px;">82.0 °C</div><div class="t rt h" style="left:368.5px;top:467px;width:100px;">67.8 °C</div><div class="a bg" style="left:39px;top:483px;width:460px;height:17px"></div><div class="hl" style="left:0px;top:499px;width:493px"></div><div class="vl" style="left:174.5px;top:483px;height:17px"></div><div class="vl" style="left:249.5px;top:483px;height:17px"></div><div class="vl" style="left:324.5px;top:483px;height:17px"></div><div class="vl" style="left:399.5px;top:483px;height:17px"></div><svg class="ic" style="left:23px;top:483px"><use href="#thm"/></svg><div class="t h" style="left:41px;top:484px;">MOS</div><div class="t rt h" style="left:143.5px;top:484px;width:100px;">39.5 °C</div><div class="t rt h" style="left:218.5px;top:484px;width:100px;">39.5 °C</div><div class="t rt h" style="left:293.5px;top:484px;width:100px;">45.0 °C</div><div class="t rt h" style="left:368.5px;top:484px;width:100px;">43.5 °C</div><div class="hl" style="left:0px;top:516px;width:493px"></div><div class="vl" style="left:174.5px;top:500px;height:17px"></div><div class="vl" style="left:249.5px;top:500px;height:17px"></div><div class="vl" style="left:324.5px;top:500px;height:17px"></div><div class="vl" style="left:399.5px;top:500px;height:17px"></div><svg class="ic" style="left:23px;top:500px"><use href="#thm"/></svg><div class="t h" style="left:41px;top:501px;">PCH</div><div class="t rt h" style="left:143.5px;top:501px;width:100px;">57.0 °C</div><div class="t rt h" style="left:218.5px;top:501px;width:100px;">56.0 °C</div><div class="t rt h" style="left:293.5px;top:501px;width:100px;">59.0 °C</div><div class="t rt h" style="left:368.5px;top:501px;width:100px;">57.3 °C</div><div class="a bg" style="left:39px;top:517px;width:460px;height:17px"></div><div class="hl" style="left:0px;top:533px;width:493px"></div><div class="vl" style="left:174.5px;top:517px;height:17px"></div><div class="vl" style="left:249.5px;top:517px;height:17px"></div><div class="vl" style="left:324.5px;top:517px;height:17px"></div><div class="vl" style="left:399.5px;top:517px;height:17px"></div><svg class="ic" style="left:23px;top:517px"><use href="#bolt"/></svg><div class="t h" style="left:41px;top:518px;color:#e8141c;font-weight:bold;font-style:italic;letter-spacing:0.2px">Vcore</div><div class="t rt h" style="left:143.5px;top:518px;width:100px;color:#e8141c;font-weight:bold;font-style:italic;letter-spacing:0.2px">1.217 V</div><div class="t rt h" style="left:218.5px;top:518px;width:100px;color:#e8141c;font-weight:bold;font-style:italic;letter-spacing:0.2px">1.217 V</div><div class="t rt h" style="left:293.5px;top:518px;width:100px;color:#e8141c;font-weight:bold;font-style:italic;letter-spacing:0.2px">1.224 V</div><div class="t rt h" style="left:368.5px;top:518px;width:100px;color:#e8141c;font-weight:bold;font-style:italic;letter-spacing:0.2px">1.221 V</div><div class="hl" style="left:0px;top:550px;width:493px"></div><div class="vl" style="left:174.5px;top:534px;height:17px"></div><div class="vl" style="left:249.5px;top:534px;height:17px"></div><div class="vl" style="left:324.5px;top:534px;height:17px"></div><div class="vl" style="left:399.5px;top:534px;height:17px"></div><svg class="ic" style="left:23px;top:534px"><use href="#bolt"/></svg><div class="t h" style="left:41px;top:535px;color:#3a1890;font-weight:bold;font-style:italic;letter-spacing:0.2px">CPU VDD2</div><div class="t rt h" style="left:143.5px;top:535px;width:100px;color:#3a1890;font-weight:bold;font-style:italic;letter-spacing:0.2px">1.400 V</div><div class="t rt h" style="left:218.5px;top:535px;width:100px;color:#3a1890;font-weight:bold;font-style:italic;letter-spacing:0.2px">1.396 V</div><div class="t rt h" style="left:293.5px;top:535px;width:100px;color:#3a1890;font-weight:bold;font-style:italic;letter-spacing:0.2px">1.400 V</div><div class="t rt h" style="left:368.5px;top:535px;width:100px;color:#3a1890;font-weight:bold;font-style:italic;letter-spacing:0.2px">1.397 V</div><div class="a bg" style="left:39px;top:551px;width:460px;height:17px"></div><div class="hl" style="left:0px;top:567px;width:493px"></div><div class="vl" style="left:174.5px;top:551px;height:17px"></div><div class="vl" style="left:249.5px;top:551px;height:17px"></div><div class="vl" style="left:324.5px;top:551px;height:17px"></div><div class="vl" style="left:399.5px;top:551px;height:17px"></div><svg class="ic" style="left:23px;top:551px"><use href="#bolt"/></svg><div class="t h" style="left:41px;top:552px;color:#d21ee6;font-weight:bold;font-style:italic;letter-spacing:0.2px">CPU SA</div><div class="t rt h" style="left:143.5px;top:552px;width:100px;color:#d21ee6;font-weight:bold;font-style:italic;letter-spacing:0.2px">0.956 V</div><div class="t rt h" style="left:218.5px;top:552px;width:100px;color:#d21ee6;font-weight:bold;font-style:italic;letter-spacing:0.2px">0.950 V</div><div class="t rt h" style="left:293.5px;top:552px;width:100px;color:#d21ee6;font-weight:bold;font-style:italic;letter-spacing:0.2px">0.958 V</div><div class="t rt h" style="left:368.5px;top:552px;width:100px;color:#d21ee6;font-weight:bold;font-style:italic;letter-spacing:0.2px">0.956 V</div><div class="hl" style="left:0px;top:584px;width:493px"></div><div class="vl" style="left:174.5px;top:568px;height:17px"></div><div class="vl" style="left:249.5px;top:568px;height:17px"></div><div class="vl" style="left:324.5px;top:568px;height:17px"></div><div class="vl" style="left:399.5px;top:568px;height:17px"></div><svg class="ic" style="left:23px;top:568px"><use href="#bolt"/></svg><div class="t h" style="left:41px;top:569px;color:#d21ee6;font-weight:bold;font-style:italic;letter-spacing:0.2px">CPU AUX</div><div class="t rt h" style="left:143.5px;top:569px;width:100px;color:#d21ee6;font-weight:bold;font-style:italic;letter-spacing:0.2px">1.784 V</div><div class="t rt h" style="left:218.5px;top:569px;width:100px;color:#d21ee6;font-weight:bold;font-style:italic;letter-spacing:0.2px">1.780 V</div><div class="t rt h" style="left:293.5px;top:569px;width:100px;color:#d21ee6;font-weight:bold;font-style:italic;letter-spacing:0.2px">1.820 V</div><div class="t rt h" style="left:368.5px;top:569px;width:100px;color:#d21ee6;font-weight:bold;font-style:italic;letter-spacing:0.2px">1.787 V</div><div class="a bg" style="left:39px;top:585px;width:460px;height:17px"></div><div class="hl" style="left:0px;top:601px;width:493px"></div><div class="vl" style="left:174.5px;top:585px;height:17px"></div><div class="vl" style="left:249.5px;top:585px;height:17px"></div><div class="vl" style="left:324.5px;top:585px;height:17px"></div><div class="vl" style="left:399.5px;top:585px;height:17px"></div><div class="a gr" style="left:39px;top:602px;width:460px;height:17px"></div><div class="hl" style="left:0px;top:618px;width:39px"></div><svg class="ic" style="left:4px;top:602px"><use href="#chv"/></svg><svg class="ic" style="left:23px;top:602px"><use href="#chip"/></svg><div class="t it h" style="left:41px;top:603px">DDR5 DIMM [#0] (BANK ...</div><div class="vl" style="left:174.5px;top:602px;height:17px;background:#fff"></div><div class="vl" style="left:249.5px;top:602px;height:17px;background:#fff"></div><div class="vl" style="left:324.5px;top:602px;height:17px;background:#fff"></div><div class="vl" style="left:399.5px;top:602px;height:17px;background:#fff"></div><div class="a bg" style="left:39px;top:619px;width:460px;height:17px"></div><div class="hl" style="left:0px;top:635px;width:493px"></div><div class="vl" style="left:174.5px;top:619px;height:17px"></div><div class="vl" style="left:249.5px;top:619px;height:17px"></div><div class="vl" style="left:324.5px;top:619px;height:17px"></div><div class="vl" style="left:399.5px;top:619px;height:17px"></div><svg class="ic" style="left:23px;top:619px"><use href="#thm"/></svg><div class="t h" style="left:41px;top:620px;">SPD Hub Temperature</div><div class="t rt h" style="left:143.5px;top:620px;width:100px;">34.3 °C</div><div class="t rt h" style="left:218.5px;top:620px;width:100px;">34.3 °C</div><div class="t rt h" style="left:293.5px;top:620px;width:100px;">40.0 °C</div><div class="t rt h" style="left:368.5px;top:620px;width:100px;">37.7 °C</div><div class="hl" style="left:0px;top:652px;width:493px"></div><div class="vl" style="left:174.5px;top:636px;height:17px"></div><div class="vl" style="left:249.5px;top:636px;height:17px"></div><div class="vl" style="left:324.5px;top:636px;height:17px"></div><div class="vl" style="left:399.5px;top:636px;height:17px"></div><svg class="ic" style="left:23px;top:636px"><use href="#bolt"/></svg><div class="t h" style="left:41px;top:637px;">VDD (SWA) Voltage</div><div class="t rt h" style="left:143.5px;top:637px;width:100px;">1.425 V</div><div class="t rt h" style="left:218.5px;top:637px;width:100px;">1.410 V</div><div class="t rt h" style="left:293.5px;top:637px;width:100px;">1.425 V</div><div class="t rt h" style="left:368.5px;top:637px;width:100px;">1.422 V</div><div class="a bg" style="left:39px;top:653px;width:460px;height:17px"></div><div class="hl" style="left:0px;top:669px;width:493px"></div><div class="vl" style="left:174.5px;top:653px;height:17px"></div><div class="vl" style="left:249.5px;top:653px;height:17px"></div><div class="vl" style="left:324.5px;top:653px;height:17px"></div><div class="vl" style="left:399.5px;top:653px;height:17px"></div><svg class="ic" style="left:23px;top:653px"><use href="#bolt"/></svg><div class="t h" style="left:41px;top:654px;">VDDQ (SWB) Voltage</div><div class="t rt h" style="left:143.5px;top:654px;width:100px;">1.425 V</div><div class="t rt h" style="left:218.5px;top:654px;width:100px;">1.410 V</div><div class="t rt h" style="left:293.5px;top:654px;width:100px;">1.440 V</div><div class="t rt h" style="left:368.5px;top:654px;width:100px;">1.425 V</div><div class="hl" style="left:0px;top:686px;width:493px"></div><div class="vl" style="left:174.5px;top:670px;height:17px"></div><div class="vl" style="left:249.5px;top:670px;height:17px"></div><div class="vl" style="left:324.5px;top:670px;height:17px"></div><div class="vl" style="left:399.5px;top:670px;height:17px"></div><svg class="ic" style="left:23px;top:670px"><use href="#bolt"/></svg><div class="t h" style="left:41px;top:671px;">VPP (SWC) Voltage</div><div class="t rt h" style="left:143.5px;top:671px;width:100px;">1.845 V</div><div class="t rt h" style="left:218.5px;top:671px;width:100px;">1.830 V</div><div class="t rt h" style="left:293.5px;top:671px;width:100px;">1.845 V</div><div class="t rt h" style="left:368.5px;top:671px;width:100px;">1.835 V</div><div class="a bg" style="left:39px;top:687px;width:460px;height:17px"></div><div class="hl" style="left:0px;top:703px;width:493px"></div><div class="vl" style="left:174.5px;top:687px;height:17px"></div><div class="vl" style="left:249.5px;top:687px;height:17px"></div><div class="vl" style="left:324.5px;top:687px;height:17px"></div><div class="vl" style="left:399.5px;top:687px;height:17px"></div><svg class="ic" style="left:23px;top:687px"><use href="#bolt"/></svg><div class="t h" style="left:41px;top:688px;">1.8V Voltage</div><div class="t rt h" style="left:143.5px;top:688px;width:100px;">1.785 V</div><div class="t rt h" style="left:218.5px;top:688px;width:100px;">1.785 V</div><div class="t rt h" style="left:293.5px;top:688px;width:100px;">1.800 V</div><div class="t rt h" style="left:368.5px;top:688px;width:100px;">1.785 V</div><div class="hl" style="left:0px;top:720px;width:493px"></div><div class="vl" style="left:174.5px;top:704px;height:17px"></div><div class="vl" style="left:249.5px;top:704px;height:17px"></div><div class="vl" style="left:324.5px;top:704px;height:17px"></div><div class="vl" style="left:399.5px;top:704px;height:17px"></div><svg class="ic" style="left:23px;top:704px"><use href="#bolt"/></svg><div class="t h" style="left:41px;top:705px;">1.0V VOUT Voltage</div><div class="t rt h" style="left:143.5px;top:705px;width:100px;">0.990 V</div><div class="t rt h" style="left:218.5px;top:705px;width:100px;">0.990 V</div><div class="t rt h" style="left:293.5px;top:705px;width:100px;">0.990 V</div><div class="t rt h" style="left:368.5px;top:705px;width:100px;">0.990 V</div><div class="a bg" style="left:39px;top:721px;width:460px;height:17px"></div><div class="hl" style="left:0px;top:737px;width:493px"></div><div class="vl" style="left:174.5px;top:721px;height:17px"></div><div class="vl" style="left:249.5px;top:721px;height:17px"></div><div class="vl" style="left:324.5px;top:721px;height:17px"></div><div class="vl" style="left:399.5px;top:721px;height:17px"></div><svg class="ic" style="left:23px;top:721px"><use href="#bolt"/></svg><div class="t h" style="left:41px;top:722px;">VIN Voltage</div><div class="t rt h" style="left:143.5px;top:722px;width:100px;">4.900 V</div><div class="t rt h" style="left:218.5px;top:722px;width:100px;">4.620 V</div><div class="t rt h" style="left:293.5px;top:722px;width:100px;">4.900 V</div><div class="t rt h" style="left:368.5px;top:722px;width:100px;">4.773 V</div><div class="hl" style="left:0px;top:754px;width:493px"></div><div class="vl" style="left:174.5px;top:738px;height:17px"></div><div class="vl" style="left:249.5px;top:738px;height:17px"></div><div class="vl" style="left:324.5px;top:738px;height:17px"></div><div class="vl" style="left:399.5px;top:738px;height:17px"></div><svg class="ic" style="left:23px;top:738px"><use href="#bolt"/></svg><div class="t h" style="left:41px;top:739px;">Total Power</div><div class="t rt h" style="left:143.5px;top:739px;width:100px;">0.000 W</div><div class="t rt h" style="left:218.5px;top:739px;width:100px;">0.000 W</div><div class="t rt h" style="left:293.5px;top:739px;width:100px;">3.250 W</div><div class="t rt h" style="left:368.5px;top:739px;width:100px;">1.501 W</div><div class="a bg" style="left:39px;top:755px;width:460px;height:17px"></div><div class="hl" style="left:0px;top:771px;width:493px"></div><div class="vl" style="left:174.5px;top:755px;height:17px"></div><div class="vl" style="left:249.5px;top:755px;height:17px"></div><div class="vl" style="left:324.5px;top:755px;height:17px"></div><div class="vl" style="left:399.5px;top:755px;height:17px"></div><svg class="ic" style="left:23px;top:755px"><use href="#clk"/></svg><div class="t h" style="left:41px;top:756px;">PMIC High Temperature</div><div class="t rt h" style="left:143.5px;top:756px;width:100px;">No</div><div class="t rt h" style="left:218.5px;top:756px;width:100px;">No</div><div class="t rt h" style="left:293.5px;top:756px;width:100px;">No</div><div class="t rt h" style="left:368.5px;top:756px;width:100px;">No</div><div class="hl" style="left:0px;top:788px;width:493px"></div><div class="vl" style="left:174.5px;top:772px;height:17px"></div><div class="vl" style="left:249.5px;top:772px;height:17px"></div><div class="vl" style="left:324.5px;top:772px;height:17px"></div><div class="vl" style="left:399.5px;top:772px;height:17px"></div><div class="a gr" style="left:39px;top:789px;width:460px;height:17px"></div><div class="hl" style="left:0px;top:805px;width:39px"></div><svg class="ic" style="left:4px;top:789px"><use href="#chv"/></svg><svg class="ic" style="left:23px;top:789px"><use href="#chip"/></svg><div class="t it h" style="left:41px;top:790px">DDR5 DIMM [#2] (BANK ...</div><div class="vl" style="left:174.5px;top:789px;height:17px;background:#fff"></div><div class="vl" style="left:249.5px;top:789px;height:17px;background:#fff"></div><div class="vl" style="left:324.5px;top:789px;height:17px;background:#fff"></div><div class="vl" style="left:399.5px;top:789px;height:17px;background:#fff"></div><div class="hl" style="left:0px;top:822px;width:493px"></div><div class="vl" style="left:174.5px;top:806px;height:17px"></div><div class="vl" style="left:249.5px;top:806px;height:17px"></div><div class="vl" style="left:324.5px;top:806px;height:17px"></div><div class="vl" style="left:399.5px;top:806px;height:17px"></div><svg class="ic" style="left:23px;top:806px"><use href="#thm"/></svg><div class="t h" style="left:41px;top:807px;">SPD Hub Temperature</div><div class="t rt h" style="left:143.5px;top:807px;width:100px;">33.8 °C</div><div class="t rt h" style="left:218.5px;top:807px;width:100px;">33.8 °C</div><div class="t rt h" style="left:293.5px;top:807px;width:100px;">39.3 °C</div><div class="t rt h" style="left:368.5px;top:807px;width:100px;">36.9 °C</div><div class="a bg" style="left:39px;top:823px;width:460px;height:17px"></div><div class="hl" style="left:0px;top:839px;width:493px"></div><div class="vl" style="left:174.5px;top:823px;height:17px"></div><div class="vl" style="left:249.5px;top:823px;height:17px"></div><div class="vl" style="left:324.5px;top:823px;height:17px"></div><div class="vl" style="left:399.5px;top:823px;height:17px"></div><svg class="ic" style="left:23px;top:823px"><use href="#bolt"/></svg><div class="t h" style="left:41px;top:824px;">VDD (SWA) Voltage</div><div class="t rt h" style="left:143.5px;top:824px;width:100px;">1.425 V</div><div class="t rt h" style="left:218.5px;top:824px;width:100px;">1.410 V</div><div class="t rt h" style="left:293.5px;top:824px;width:100px;">1.425 V</div><div class="t rt h" style="left:368.5px;top:824px;width:100px;">1.425 V</div><div class="hl" style="left:0px;top:856px;width:493px"></div><div class="vl" style="left:174.5px;top:840px;height:17px"></div><div class="vl" style="left:249.5px;top:840px;height:17px"></div><div class="vl" style="left:324.5px;top:840px;height:17px"></div><div class="vl" style="left:399.5px;top:840px;height:17px"></div><svg class="ic" style="left:23px;top:840px"><use href="#bolt"/></svg><div class="t h" style="left:41px;top:841px;">VDDQ (SWB) Voltage</div><div class="t rt h" style="left:143.5px;top:841px;width:100px;">1.425 V</div><div class="t rt h" style="left:218.5px;top:841px;width:100px;">1.410 V</div><div class="t rt h" style="left:293.5px;top:841px;width:100px;">1.425 V</div><div class="t rt h" style="left:368.5px;top:841px;width:100px;">1.417 V</div><div class="a bg" style="left:39px;top:857px;width:460px;height:17px"></div><div class="hl" style="left:0px;top:873px;width:493px"></div><div class="vl" style="left:174.5px;top:857px;height:17px"></div><div class="vl" style="left:249.5px;top:857px;height:17px"></div><div class="vl" style="left:324.5px;top:857px;height:17px"></div><div class="vl" style="left:399.5px;top:857px;height:17px"></div><svg class="ic" style="left:23px;top:857px"><use href="#bolt"/></svg><div class="t h" style="left:41px;top:858px;">VPP (SWC) Voltage</div><div class="t rt h" style="left:143.5px;top:858px;width:100px;">1.845 V</div><div class="t rt h" style="left:218.5px;top:858px;width:100px;">1.815 V</div><div class="t rt h" style="left:293.5px;top:858px;width:100px;">1.845 V</div><div class="t rt h" style="left:368.5px;top:858px;width:100px;">1.835 V</div><div class="hl" style="left:0px;top:890px;width:493px"></div><div class="vl" style="left:174.5px;top:874px;height:17px"></div><div class="vl" style="left:249.5px;top:874px;height:17px"></div><div class="vl" style="left:324.5px;top:874px;height:17px"></div><div class="vl" style="left:399.5px;top:874px;height:17px"></div><svg class="ic" style="left:23px;top:874px"><use href="#bolt"/></svg><div class="t h" style="left:41px;top:875px;">1.8V Voltage</div><div class="t rt h" style="left:143.5px;top:875px;width:100px;">1.785 V</div><div class="t rt h" style="left:218.5px;top:875px;width:100px;">1.785 V</div><div class="t rt h" style="left:293.5px;top:875px;width:100px;">1.800 V</div><div class="t rt h" style="left:368.5px;top:875px;width:100px;">1.786 V</div><div class="a bg" style="left:39px;top:891px;width:460px;height:17px"></div><div class="hl" style="left:0px;top:907px;width:493px"></div><div class="vl" style="left:174.5px;top:891px;height:17px"></div><div class="vl" style="left:249.5px;top:891px;height:17px"></div><div class="vl" style="left:324.5px;top:891px;height:17px"></div><div class="vl" style="left:399.5px;top:891px;height:17px"></div><svg class="ic" style="left:23px;top:891px"><use href="#bolt"/></svg><div class="t h" style="left:41px;top:892px;">1.0V VOUT Voltage</div><div class="t rt h" style="left:143.5px;top:892px;width:100px;">0.990 V</div><div class="t rt h" style="left:218.5px;top:892px;width:100px;">0.990 V</div><div class="t rt h" style="left:293.5px;top:892px;width:100px;">0.990 V</div><div class="t rt h" style="left:368.5px;top:892px;width:100px;">0.990 V</div><div class="hl" style="left:0px;top:924px;width:493px"></div><div class="vl" style="left:174.5px;top:908px;height:17px"></div><div class="vl" style="left:249.5px;top:908px;height:17px"></div><div class="vl" style="left:324.5px;top:908px;height:17px"></div><div class="vl" style="left:399.5px;top:908px;height:17px"></div><svg class="ic" style="left:23px;top:908px"><use href="#bolt"/></svg><div class="t h" style="left:41px;top:909px;">VIN Voltage</div><div class="t rt h" style="left:143.5px;top:909px;width:100px;">4.900 V</div><div class="t rt h" style="left:218.5px;top:909px;width:100px;">4.620 V</div><div class="t rt h" style="left:293.5px;top:909px;width:100px;">4.900 V</div><div class="t rt h" style="left:368.5px;top:909px;width:100px;">4.777 V</div><div class="a bg" style="left:39px;top:925px;width:460px;height:17px"></div><div class="hl" style="left:0px;top:941px;width:493px"></div><div class="vl" style="left:174.5px;top:925px;height:17px"></div><div class="vl" style="left:249.5px;top:925px;height:17px"></div><div class="vl" style="left:324.5px;top:925px;height:17px"></div><div class="vl" style="left:399.5px;top:925px;height:17px"></div><svg class="ic" style="left:23px;top:925px"><use href="#clk"/></svg><div class="t h" style="left:41px;top:926px;">PMIC High Temperature</div><div class="t rt h" style="left:143.5px;top:926px;width:100px;">No</div><div class="t rt h" style="left:218.5px;top:926px;width:100px;">No</div><div class="t rt h" style="left:293.5px;top:926px;width:100px;">No</div><div class="t rt h" style="left:368.5px;top:926px;width:100px;">No</div><div class="hl" style="left:0px;top:958px;width:493px"></div><div class="vl" style="left:174.5px;top:942px;height:17px"></div><div class="vl" style="left:249.5px;top:942px;height:17px"></div><div class="vl" style="left:324.5px;top:942px;height:17px"></div><div class="vl" style="left:399.5px;top:942px;height:17px"></div><div class="a gr" style="left:39px;top:959px;width:460px;height:17px"></div><div class="hl" style="left:0px;top:975px;width:39px"></div><svg class="ic" style="left:4px;top:959px"><use href="#chv"/></svg><svg class="ic" style="left:23px;top:959px"><use href="#chip"/></svg><div class="t it h" style="left:41px;top:960px">Windows Hardware Error...</div><div class="vl" style="left:174.5px;top:959px;height:17px;background:#fff"></div><div class="vl" style="left:249.5px;top:959px;height:17px;background:#fff"></div><div class="vl" style="left:324.5px;top:959px;height:17px;background:#fff"></div><div class="vl" style="left:399.5px;top:959px;height:17px;background:#fff"></div><div class="hl" style="left:0px;top:992px;width:493px"></div><div class="vl" style="left:174.5px;top:976px;height:17px"></div><div class="vl" style="left:249.5px;top:976px;height:17px"></div><div class="vl" style="left:324.5px;top:976px;height:17px"></div><div class="vl" style="left:399.5px;top:976px;height:17px"></div><svg class="ic" style="left:23px;top:976px"><use href="#clk"/></svg><div class="t h" style="left:41px;top:977px;">Total Errors</div><div class="t rt h" style="left:143.5px;top:977px;width:100px;">0</div><div class="t rt h" style="left:218.5px;top:977px;width:100px;">0</div><div class="t rt h" style="left:293.5px;top:977px;width:100px;">0</div></div><div class="a" style="left:980px;top:32px;width:17px;height:984px;background:#f0f0f0"></div><svg class="a" style="left:983px;top:1004px" width="11" height="8"><path d="M1 1.5L5.5 6L10 1.5" fill="none" stroke="#606060" stroke-width="1.6"/></svg><div class="a" style="left:8px;top:1016px;width:989px;height:1px;background:#7a7a7a"></div><div class="a" style="left:9px;top:1024px;width:42px;height:35px;background:#e4e4e4;border:1px solid #b4b4b4"></div><div class="a" style="left:53px;top:1024px;width:42px;height:35px;background:#e4e4e4;border:1px solid #b4b4b4"></div><svg class="a" style="left:0;top:1020px" width="100" height="42">
<g fill="#2a8ee0" stroke="#fff" stroke-width="0.9" stroke-dasharray="1.4 0.8">
<path d="M14.2,22.3 L21.3,14.9 V19 H28 V25.7 H21.3 V29.7 Z"/><path d="M45.8,22.3 L38.7,14.9 V19 H31.7 V25.7 H38.7 V29.7 Z"/>
<path d="M72.8,22.3 L65.6,14.9 V19 H58.7 V25.7 H65.6 V29.7 Z"/><path d="M72.8,22.3 L79.75,14.9 V19 H86.9 V25.7 H79.75 V29.7 Z"/></g></svg><div class="a" style="left:643px;top:1024px;width:42px;height:35px;background:#e4e4e4;border:1px solid #b4b4b4"></div><div class="a" style="left:695px;top:1024px;width:42px;height:35px;background:#e4e4e4;border:1px solid #b4b4b4"></div><div class="a" style="left:806px;top:1024px;width:42px;height:35px;background:#e4e4e4;border:1px solid #b4b4b4"></div><div class="a" style="left:852px;top:1024px;width:42px;height:35px;background:#e4e4e4;border:1px solid #b4b4b4"></div><div class="a" style="left:898px;top:1024px;width:42px;height:35px;background:#e4e4e4;border:1px solid #b4b4b4"></div><div class="a" style="left:945px;top:1024px;width:42px;height:35px;background:#e4e4e4;border:1px solid #b4b4b4"></div><div class="t" style="left:762px;top:1032px;letter-spacing:0.1px">3:23:03</div><svg class="a" style="left:640px;top:1020px" width="100" height="42">
<defs><linearGradient id="mg1" x1="0" y1="0" x2="1" y2="0.3"><stop offset="0" stop-color="#0018d8"/><stop offset="0.45" stop-color="#1a30e0"/><stop offset="0.5" stop-color="#d8d8ff"/><stop offset="1" stop-color="#2a2ad0"/></linearGradient>
<linearGradient id="ng1" x1="0" y1="0" x2="1" y2="1"><stop offset="0" stop-color="#8ccaf8"/><stop offset="0.4" stop-color="#2a88d8"/><stop offset="1" stop-color="#1a68c0"/></linearGradient></defs>
<path d="M12,7 L38,10 L35,32 L12,25 Z" fill="#f4f4f4" stroke="#c8c8c8" stroke-width="1"/>
<path d="M13.5,8.5 L36,11 L33.5,29 L13.5,23 Z" fill="url(#mg1)"/>
<ellipse cx="26" cy="33" rx="8" ry="2.5" fill="#dcdcdc"/>
<circle cx="16.5" cy="22" r="6.5" fill="#dfe6f2" fill-opacity="0.85" stroke="#9a9a9a" stroke-width="1.6"/>
<path d="M21,27 L27,36" stroke="#8a6030" stroke-width="2.8" stroke-linecap="round"/>
<path d="M61,7 L76,9.5 L74,21 L60,17 Z" fill="url(#ng1)" stroke="#5a6a7a" stroke-width="0.8"/>
<path d="M66,20 L70,21 L70,23 L64,23 Z" fill="#bbb"/><ellipse cx="67" cy="23.5" rx="4" ry="1.4" fill="#c8c8c8"/>
<path d="M76,14.5 H84.5 V20" fill="none" stroke="#707070" stroke-width="1"/>
<path d="M77,21 L91,23.5 L89,34 L75,30 Z" fill="url(#ng1)" stroke="#5a6a7a" stroke-width="0.8"/>
<path d="M81,33 L85,34 L85,36 L79,36 Z" fill="#bbb"/><ellipse cx="82" cy="36.5" rx="4.5" ry="1.5" fill="#c8c8c8"/>
</svg><svg class="a" style="left:800px;top:1020px" width="190" height="42">
<defs><linearGradient id="gg" x1="0" y1="0" x2="1" y2="1"><stop offset="0" stop-color="#f4f4f4"/><stop offset="0.5" stop-color="#b8b8b8"/><stop offset="1" stop-color="#8a8a8a"/></linearGradient>
<linearGradient id="xg" x1="0" y1="0" x2="1" y2="1"><stop offset="0" stop-color="#1a70c0"/><stop offset="0.55" stop-color="#5ab8ea"/><stop offset="1" stop-color="#2a90d8"/></linearGradient></defs>
<circle cx="26.9" cy="21.8" r="15.6" fill="#fff" stroke="#222" stroke-width="1.1"/>
<g stroke="#222" stroke-width="1.3"><path d="M26.9,7 v3.5M26.9,33 v3.5M12,21.8 h3.5M38.3,21.8 h3.5"/>
<path d="M34.3,9 l-1.2,2.1M39.7,14.4 l-2.1,1.2M39.7,29.2 l-2.1,-1.2M34.3,34.6 l-1.2,-2.1M19.5,34.6 l1.2,-2.1M14.1,29.2 l2.1,-1.2M14.1,14.4 l2.1,1.2M19.5,9 l1.2,2.1"/></g>
<path d="M28.2,8.5 L26.9,21.8 H35" fill="none" stroke="#111" stroke-width="2.6"/>
<path d="M61.5,8 H79 L84,13 V33 H61.5 Z" fill="#fafafa" stroke="#c8c8c8" stroke-width="0.8"/>
<path d="M79,8 V13 H84" fill="#e8e8e8" stroke="#c8c8c8" stroke-width="0.8"/>
<g stroke="#d8d8d8" stroke-width="0.8"><path d="M65,12h14M65,14.5h14M65,17h14M65,19.5h14M65,22h14M65,24.5h14M65,27h14M70,11v18"/></g>
<path d="M79.5,24 h5 v5 h5 v5 h-5 v5 h-5 v-5 h-5 v-5 h5 z" fill="#a8d848" stroke="#7ab030" stroke-width="0.8"/>
<g transform="translate(119.3 21.8)"><path d="M-2.6,-15 h5.2 l1,3.6 a11,11 0 0 1 3.2,1.8 l3.6,-1.1 2.6,4.5 -2.7,2.6 a11,11 0 0 1 0,3.7 l2.7,2.6 -2.6,4.5 -3.6,-1.1 a11,11 0 0 1 -3.2,1.8 l-1,3.6 h-5.2 l-1,-3.6 a11,11 0 0 1 -3.2,-1.8 l-3.6,1.1 -2.6,-4.5 2.7,-2.6 a11,11 0 0 1 0,-3.7 l-2.7,-2.6 2.6,-4.5 3.6,1.1 a11,11 0 0 1 3.2,-1.8 z" fill="url(#gg)" stroke="#9a9a9a" stroke-width="0.8"/>
<circle r="7.2" fill="none" stroke="#8a8a8a" stroke-width="2.4"/><circle r="5.6" fill="#e2e2e2"/></g>
<path d="M155.5,12.5 L174.5,31.5M174.5,12.5 L155.5,31.5" stroke="url(#xg)" stroke-width="7" stroke-linecap="square"/>
</svg><div class="a" style="left:0px;top:0px;width:0;height:0"><div class="a" style="left:976px;top:1px;width:516px;height:1005px;background:#f0f0f0;border:1px solid #6f6f6f;border-top:none;border-right:none;overflow:hidden"><div class="a" style="left:0px;top:0px;width:516px;height:48px;background:#fff"></div><svg class="ic" style="left:8px;top:6px"><use href="#gear"/></svg><div class="tb" style="left:29px;top:7px">Done - LinX v0.9.11 for Intel</div><div class="a" style="left:396px;top:14px;width:10px;height:1px;background:#888"></div><div class="a" style="left:441px;top:9px;width:10px;height:10px;border:1px solid #ddd"></div><svg class="a" style="left:486px;top:9px" width="10" height="10"><path d="M0 0L10 10M10 0L0 10" stroke="#666" stroke-width="1"/></svg><div class="t" style="left:7px;top:32px;color:#777;font-size:12px;letter-spacing:-0.3px">File</div><div class="t" style="left:39px;top:32px;color:#777;font-size:12px;letter-spacing:-0.3px">Settings</div><div class="t" style="left:95px;top:32px;color:#777;font-size:12px;letter-spacing:-0.3px">Graphs</div><div class="t" style="left:146px;top:32px;color:#777;font-size:12px;letter-spacing:-0.3px">정보(Z)</div><div class="t lb" style="left:4px;top:57px">Problem Size:</div><div class="a" style="left:74px;top:55px;width:59px;height:22px;background:#fff;border:1px solid #7a7a7a"></div><div class="t" style="left:77px;top:55px;line-height:20px">30600</div><svg class="a" style="left:115px;top:59px" width="12" height="12"><use href="#dd"/></svg><div class="t lb" style="left:172px;top:57px">Memory (MiB):</div><div class="a" style="left:247px;top:55px;width:54px;height:22px;background:#fff;border:1px solid #7a7a7a"></div><div class="t" style="left:250px;top:55px;line-height:20px">7168</div><svg class="a" style="left:283px;top:59px" width="12" height="12"><use href="#dd"/></svg><div class="t lb" style="left:312px;top:55px">All</div><div class="t lb" style="left:371px;top:57px">Run:</div><div class="a" style="left:400px;top:55px;width:50px;height:22px;background:#fff;border:1px solid #7a7a7a"></div><div class="t" style="left:403px;top:55px;line-height:20px">50</div><svg class="a" style="left:432px;top:59px" width="12" height="12"><use href="#dd"/></svg><div class="a" style="left:455px;top:55px;width:55px;height:22px;background:#e5e5e5;border-color:#adadad;border:1px solid #7a7a7a"></div><div class="t" style="left:458px;top:55px;line-height:20px">Times</div><svg class="a" style="left:492px;top:59px" width="12" height="12"><use href="#dd"/></svg><div class="a ct" style="left:6px;top:81px;width:73px;height:23px;background:#e1e1e1;border:1px solid #adadad;line-height:22px;font-size:12px">Start</div><div class="a" style="left:85px;top:81px;width:343px;height:23px;border:1px solid #9a9a9a;background:#fff;padding:1px"><div style="width:100%;height:100%;background:#729fd2;border:1px solid #1d3f70"></div></div><div class="t ct lb" style="left:85px;top:81px;width:343px;line-height:23px;height:23px">'Finished without errors in 38 분 50 초</div><div class="a ct" style="left:436px;top:81px;width:73px;height:23px;background:#cccccc;border:1px solid #bfbfbf;line-height:22px;font-size:12px;color:#838383">Stop</div><div class="a" style="left:0px;top:110px;width:516px;height:875px;background:#fff"></div><div class="vl" style="left:24.5px;top:111px;height:25px;background:#e5e5e5"></div><div class="vl" style="left:74.5px;top:111px;height:25px;background:#e5e5e5"></div><div class="vl" style="left:124.5px;top:111px;height:25px;background:#e5e5e5"></div><div class="vl" style="left:163.5px;top:111px;height:25px;background:#e5e5e5"></div><div class="vl" style="left:222.5px;top:111px;height:25px;background:#e5e5e5"></div><div class="vl" style="left:307.5px;top:111px;height:25px;background:#e5e5e5"></div><div class="vl" style="left:402.5px;top:111px;height:25px;background:#e5e5e5"></div><div class="vl" style="left:497.5px;top:111px;height:25px;background:#e5e5e5"></div><div class="t" style="left:8px;top:111px;line-height:25px;height:25px">#</div><div class="t ct" style="left:24.5px;top:111px;width:50px;line-height:25px;height:25px">Size</div><div class="t ct" style="left:74.5px;top:111px;width:50px;line-height:25px;height:25px">LDA</div><div class="t ct" style="left:124.5px;top:111px;width:39px;line-height:25px;height:25px">Align</div><div class="t ct" style="left:163.5px;top:111px;width:59px;line-height:25px;height:25px">Time</div><div class="t ct" style="left:222.5px;top:111px;width:85px;line-height:25px;height:25px">GFLOPS</div><div class="t ct" style="left:307.5px;top:111px;width:95px;line-height:25px;height:25px">Residual</div><div class="t ct" style="left:402.5px;top:111px;width:95px;line-height:25px;height:25px">Residual (norm.)</div><div class="hl" style="left:0px;top:151px;width:498px"></div><div class="vl" style="left:24.5px;top:135px;height:17px"></div><div class="vl" style="left:74.5px;top:135px;height:17px"></div><div class="vl" style="left:124.5px;top:135px;height:17px"></div><div class="vl" style="left:163.5px;top:135px;height:17px"></div><div class="vl" style="left:222.5px;top:135px;height:17px"></div><div class="vl" style="left:307.5px;top:135px;height:17px"></div><div class="vl" style="left:402.5px;top:135px;height:17px"></div><div class="vl" style="left:497.5px;top:135px;height:17px"></div><div class="t" style="left:7px;top:136px">1</div><div class="t ct" style="left:24.5px;top:136px;width:50px">30600</div><div class="t ct" style="left:74.5px;top:136px;width:50px">30600</div><div class="t ct" style="left:124.5px;top:136px;width:39px">4</div><div class="t ct" style="left:163.5px;top:136px;width:59px">44.604</div><div class="t ct" style="left:222.5px;top:136px;width:85px">428.2928</div><div class="t ct" style="left:307.5px;top:136px;width:95px">8.508939e-10</div><div class="t ct" style="left:402.5px;top:136px;width:95px">3.149459e-02</div><div class="hl" style="left:0px;top:168px;width:498px"></div><div class="vl" style="left:24.5px;top:152px;height:17px"></div><div class="vl" style="left:74.5px;top:152px;height:17px"></div><div class="vl" style="left:124.5px;top:152px;height:17px"></div><div class="vl" style="left:163.5px;top:152px;height:17px"></div><div class="vl" style="left:222.5px;top:152px;height:17px"></div><div class="vl" style="left:307.5px;top:152px;height:17px"></div><div class="vl" style="left:402.5px;top:152px;height:17px"></div><div class="vl" style="left:497.5px;top:152px;height:17px"></div><div class="t" style="left:7px;top:153px">2</div><div class="t ct" style="left:24.5px;top:153px;width:50px">30600</div><div class="t ct" style="left:74.5px;top:153px;width:50px">30600</div><div class="t ct" style="left:124.5px;top:153px;width:39px">4</div><div class="t ct" style="left:163.5px;top:153px;width:59px">42.696</div><div class="t ct" style="left:222.5px;top:153px;width:85px">447.4316</div><div class="t ct" style="left:307.5px;top:153px;width:95px">8.508939e-10</div><div class="t ct" style="left:402.5px;top:153px;width:95px">3.149459e-02</div><div class="hl" style="left:0px;top:185px;width:498px"></div><div class="vl" style="left:24.5px;top:169px;height:17px"></div><div class="vl" style="left:74.5px;top:169px;height:17px"></div><div class="vl" style="left:124.5px;top:169px;height:17px"></div><div class="vl" style="left:163.5px;top:169px;height:17px"></div><div class="vl" style="left:222.5px;top:169px;height:17px"></div><div class="vl" style="left:307.5px;top:169px;height:17px"></div><div class="vl" style="left:402.5px;top:169px;height:17px"></div><div class="vl" style="left:497.5px;top:169px;height:17px"></div><div class="t" style="left:7px;top:170px">3</div><div class="t ct" style="left:24.5px;top:170px;width:50px">30600</div><div class="t ct" style="left:74.5px;top:170px;width:50px">30600</div><div class="t ct" style="left:124.5px;top:170px;width:39px">4</div><div class="t ct" style="left:163.5px;top:170px;width:59px">42.287</div><div class="t ct" style="left:222.5px;top:170px;width:85px">451.7645</div><div class="t ct" style="left:307.5px;top:170px;width:95px">8.508939e-10</div><div class="t ct" style="left:402.5px;top:170px;width:95px">3.149459e-02</div><div class="a gr" style="left:0px;top:186px;width:498px;height:17px"></div><div class="hl" style="left:0px;top:202px;width:498px"></div><div class="vl" style="left:24.5px;top:186px;height:17px"></div><div class="vl" style="left:74.5px;top:186px;height:17px"></div><div class="vl" style="left:124.5px;top:186px;height:17px"></div><div class="vl" style="left:163.5px;top:186px;height:17px"></div><div class="vl" style="left:222.5px;top:186px;height:17px"></div><div class="vl" style="left:307.5px;top:186px;height:17px"></div><div class="vl" style="left:402.5px;top:186px;height:17px"></div><div class="vl" style="left:497.5px;top:186px;height:17px"></div><div class="t" style="left:7px;top:187px">4</div><div class="t ct" style="left:24.5px;top:187px;width:50px">30600</div><div class="t ct" style="left:74.5px;top:187px;width:50px">30600</div><div class="t ct" style="left:124.5px;top:187px;width:39px">4</div><div class="t ct" style="left:163.5px;top:187px;width:59px">42.113</div><div class="t ct" style="left:222.5px;top:187px;width:85px">453.6301</div><div class="t ct" style="left:307.5px;top:187px;width:95px">8.508939e-10</div><div class="t ct" style="left:402.5px;top:187px;width:95px">3.149459e-02</div><div class="hl" style="left:0px;top:219px;width:498px"></div><div class="vl" style="left:24.5px;top:203px;height:17px"></div><div class="vl" style="left:74.5px;top:203px;height:17px"></div><div class="vl" style="left:124.5px;top:203px;height:17px"></div><div class="vl" style="left:163.5px;top:203px;height:17px"></div><div class="vl" style="left:222.5px;top:203px;height:17px"></div><div class="vl" style="left:307.5px;top:203px;height:17px"></div><div class="vl" style="left:402.5px;top:203px;height:17px"></div><div class="vl" style="left:497.5px;top:203px;height:17px"></div><div class="t" style="left:7px;top:204px">5</div><div class="t ct" style="left:24.5px;top:204px;width:50px">30600</div><div class="t ct" style="left:74.5px;top:204px;width:50px">30600</div><div class="t ct" style="left:124.5px;top:204px;width:39px">4</div><div class="t ct" style="left:163.5px;top:204px;width:59px">42.205</div><div class="t ct" style="left:222.5px;top:204px;width:85px">452.6344</div><div class="t ct" style="left:307.5px;top:204px;width:95px">8.508939e-10</div><div class="t ct" style="left:402.5px;top:204px;width:95px">3.149459e-02</div><div class="hl" style="left:0px;top:236px;width:498px"></div><div class="vl" style="left:24.5px;top:220px;height:17px"></div><div class="vl" style="left:74.5px;top:220px;height:17px"></div><div class="vl" style="left:124.5px;top:220px;height:17px"></div><div class="vl" style="left:163.5px;top:220px;height:17px"></div><div class="vl" style="left:222.5px;top:220px;height:17px"></div><div class="vl" style="left:307.5px;top:220px;height:17px"></div><div class="vl" style="left:402.5px;top:220px;height:17px"></div><div class="vl" style="left:497.5px;top:220px;height:17px"></div><div class="t" style="left:7px;top:221px">6</div><div class="t ct" style="left:24.5px;top:221px;width:50px">30600</div><div class="t ct" style="left:74.5px;top:221px;width:50px">30600</div><div class="t ct" style="left:124.5px;top:221px;width:39px">4</div><div class="t ct" style="left:163.5px;top:221px;width:59px">43.388</div><div class="t ct" style="left:222.5px;top:221px;width:85px">440.2973</div><div class="t ct" style="left:307.5px;top:221px;width:95px">8.508939e-10</div><div class="t ct" style="left:402.5px;top:221px;width:95px">3.149459e-02</div><div class="hl" style="left:0px;top:253px;width:498px"></div><div class="vl" style="left:24.5px;top:237px;height:17px"></div><div class="vl" style="left:74.5px;top:237px;height:17px"></div><div class="vl" style="left:124.5px;top:237px;height:17px"></div><div class="vl" style="left:163.5px;top:237px;height:17px"></div><div class="vl" style="left:222.5px;top:237px;height:17px"></div><div class="vl" style="left:307.5px;top:237px;height:17px"></div><div class="vl" style="left:402.5px;top:237px;height:17px"></div><div class="vl" style="left:497.5px;top:237px;height:17px"></div><div class="t" style="left:7px;top:238px">7</div><div class="t ct" style="left:24.5px;top:238px;width:50px">30600</div><div class="t ct" style="left:74.5px;top:238px;width:50px">30600</div><div class="t ct" style="left:124.5px;top:238px;width:39px">4</div><div class="t ct" style="left:163.5px;top:238px;width:59px">43.117</div><div class="t ct" style="left:222.5px;top:238px;width:85px">443.0602</div><div class="t ct" style="left:307.5px;top:238px;width:95px">8.508939e-10</div><div class="t ct" style="left:402.5px;top:238px;width:95px">3.149459e-02</div><div class="hl" style="left:0px;top:270px;width:498px"></div><div class="vl" style="left:24.5px;top:254px;height:17px"></div><div class="vl" style="left:74.5px;top:254px;height:17px"></div><div class="vl" style="left:124.5px;top:254px;height:17px"></div><div class="vl" style="left:163.5px;top:254px;height:17px"></div><div class="vl" style="left:222.5px;top:254px;height:17px"></div><div class="vl" style="left:307.5px;top:254px;height:17px"></div><div class="vl" style="left:402.5px;top:254px;height:17px"></div><div class="vl" style="left:497.5px;top:254px;height:17px"></div><div class="t" style="left:7px;top:255px">8</div><div class="t ct" style="left:24.5px;top:255px;width:50px">30600</div><div class="t ct" style="left:74.5px;top:255px;width:50px">30600</div><div class="t ct" style="left:124.5px;top:255px;width:39px">4</div><div class="t ct" style="left:163.5px;top:255px;width:59px">42.190</div><div class="t ct" style="left:222.5px;top:255px;width:85px">452.8004</div><div class="t ct" style="left:307.5px;top:255px;width:95px">8.508939e-10</div><div class="t ct" style="left:402.5px;top:255px;width:95px">3.149459e-02</div><div class="hl" style="left:0px;top:287px;width:498px"></div><div class="vl" style="left:24.5px;top:271px;height:17px"></div><div class="vl" style="left:74.5px;top:271px;height:17px"></div><div class="vl" style="left:124.5px;top:271px;height:17px"></div><div class="vl" style="left:163.5px;top:271px;height:17px"></div><div class="vl" style="left:222.5px;top:271px;height:17px"></div><div class="vl" style="left:307.5px;top:271px;height:17px"></div><div class="vl" style="left:402.5px;top:271px;height:17px"></div><div class="vl" style="left:497.5px;top:271px;height:17px"></div><div class="t" style="left:7px;top:272px">9</div><div class="t ct" style="left:24.5px;top:272px;width:50px">30600</div><div class="t ct" style="left:74.5px;top:272px;width:50px">30600</div><div class="t ct" style="left:124.5px;top:272px;width:39px">4</div><div class="t ct" style="left:163.5px;top:272px;width:59px">42.766</div><div class="t ct" style="left:222.5px;top:272px;width:85px">446.7011</div><div class="t ct" style="left:307.5px;top:272px;width:95px">8.508939e-10</div><div class="t ct" style="left:402.5px;top:272px;width:95px">3.149459e-02</div><div class="hl" style="left:0px;top:304px;width:498px"></div><div class="vl" style="left:24.5px;top:288px;height:17px"></div><div class="vl" style="left:74.5px;top:288px;height:17px"></div><div class="vl" style="left:124.5px;top:288px;height:17px"></div><div class="vl" style="left:163.5px;top:288px;height:17px"></div><div class="vl" style="left:222.5px;top:288px;height:17px"></div><div class="vl" style="left:307.5px;top:288px;height:17px"></div><div class="vl" style="left:402.5px;top:288px;height:17px"></div><div class="vl" style="left:497.5px;top:288px;height:17px"></div><div class="t" style="left:7px;top:289px">10</div><div class="t ct" style="left:24.5px;top:289px;width:50px">30600</div><div class="t ct" style="left:74.5px;top:289px;width:50px">30600</div><div class="t ct" style="left:124.5px;top:289px;width:39px">4</div><div class="t ct" style="left:163.5px;top:289px;width:59px">42.838</div><div class="t ct" style="left:222.5px;top:289px;width:85px">445.9463</div><div class="t ct" style="left:307.5px;top:289px;width:95px">8.508939e-10</div><div class="t ct" style="left:402.5px;top:289px;width:95px">3.149459e-02</div><div class="hl" style="left:0px;top:321px;width:498px"></div><div class="vl" style="left:24.5px;top:305px;height:17px"></div><div class="vl" style="left:74.5px;top:305px;height:17px"></div><div class="vl" style="left:124.5px;top:305px;height:17px"></div><div class="vl" style="left:163.5px;top:305px;height:17px"></div><div class="vl" style="left:222.5px;top:305px;height:17px"></div><div class="vl" style="left:307.5px;top:305px;height:17px"></div><div class="vl" style="left:402.5px;top:305px;height:17px"></div><div class="vl" style="left:497.5px;top:305px;height:17px"></div><div class="t" style="left:7px;top:306px">11</div><div class="t ct" style="left:24.5px;top:306px;width:50px">30600</div><div class="t ct" style="left:74.5px;top:306px;width:50px">30600</div><div class="t ct" style="left:124.5px;top:306px;width:39px">4</div><div class="t ct" style="left:163.5px;top:306px;width:59px">44.150</div><div class="t ct" style="left:222.5px;top:306px;width:85px">432.6936</div><div class="t ct" style="left:307.5px;top:306px;width:95px">8.508939e-10</div><div class="t ct" style="left:402.5px;top:306px;width:95px">3.149459e-02</div><div class="hl" style="left:0px;top:338px;width:498px"></div><div class="vl" style="left:24.5px;top:322px;height:17px"></div><div class="vl" style="left:74.5px;top:322px;height:17px"></div><div class="vl" style="left:124.5px;top:322px;height:17px"></div><div class="vl" style="left:163.5px;top:322px;height:17px"></div><div class="vl" style="left:222.5px;top:322px;height:17px"></div><div class="vl" style="left:307.5px;top:322px;height:17px"></div><div class="vl" style="left:402.5px;top:322px;height:17px"></div><div class="vl" style="left:497.5px;top:322px;height:17px"></div><div class="t" style="left:7px;top:323px">12</div><div class="t ct" style="left:24.5px;top:323px;width:50px">30600</div><div class="t ct" style="left:74.5px;top:323px;width:50px">30600</div><div class="t ct" style="left:124.5px;top:323px;width:39px">4</div><div class="t ct" style="left:163.5px;top:323px;width:59px">44.095</div><div class="t ct" style="left:222.5px;top:323px;width:85px">433.2374</div><div class="t ct" style="left:307.5px;top:323px;width:95px">8.508939e-10</div><div class="t ct" style="left:402.5px;top:323px;width:95px">3.149459e-02</div><div class="hl" style="left:0px;top:355px;width:498px"></div><div class="vl" style="left:24.5px;top:339px;height:17px"></div><div class="vl" style="left:74.5px;top:339px;height:17px"></div><div class="vl" style="left:124.5px;top:339px;height:17px"></div><div class="vl" style="left:163.5px;top:339px;height:17px"></div><div class="vl" style="left:222.5px;top:339px;height:17px"></div><div class="vl" style="left:307.5px;top:339px;height:17px"></div><div class="vl" style="left:402.5px;top:339px;height:17px"></div><div class="vl" style="left:497.5px;top:339px;height:17px"></div><div class="t" style="left:7px;top:340px">13</div><div class="t ct" style="left:24.5px;top:340px;width:50px">30600</div><div class="t ct" style="left:74.5px;top:340px;width:50px">30600</div><div class="t ct" style="left:124.5px;top:340px;width:39px">4</div><div class="t ct" style="left:163.5px;top:340px;width:59px">43.673</div><div class="t ct" style="left:222.5px;top:340px;width:85px">437.4229</div><div class="t ct" style="left:307.5px;top:340px;width:95px">8.508939e-10</div><div class="t ct" style="left:402.5px;top:340px;width:95px">3.149459e-02</div><div class="hl" style="left:0px;top:372px;width:498px"></div><div class="vl" style="left:24.5px;top:356px;height:17px"></div><div class="vl" style="left:74.5px;top:356px;height:17px"></div><div class="vl" style="left:124.5px;top:356px;height:17px"></div><div class="vl" style="left:163.5px;top:356px;height:17px"></div><div class="vl" style="left:222.5px;top:356px;height:17px"></div><div class="vl" style="left:307.5px;top:356px;height:17px"></div><div class="vl" style="left:402.5px;top:356px;height:17px"></div><div class="vl" style="left:497.5px;top:356px;height:17px"></div><div class="t" style="left:7px;top:357px">14</div><div class="t ct" style="left:24.5px;top:357px;width:50px">30600</div><div class="t ct" style="left:74.5px;top:357px;width:50px">30600</div><div class="t ct" style="left:124.5px;top:357px;width:39px">4</div><div class="t ct" style="left:163.5px;top:357px;width:59px">43.279</div><div class="t ct" style="left:222.5px;top:357px;width:85px">441.4084</div><div class="t ct" style="left:307.5px;top:357px;width:95px">8.508939e-10</div><div class="t ct" style="left:402.5px;top:357px;width:95px">3.149459e-02</div><div class="hl" style="left:0px;top:389px;width:498px"></div><div class="vl" style="left:24.5px;top:373px;height:17px"></div><div class="vl" style="left:74.5px;top:373px;height:17px"></div><div class="vl" style="left:124.5px;top:373px;height:17px"></div><div class="vl" style="left:163.5px;top:373px;height:17px"></div><div class="vl" style="left:222.5px;top:373px;height:17px"></div><div class="vl" style="left:307.5px;top:373px;height:17px"></div><div class="vl" style="left:402.5px;top:373px;height:17px"></div><div class="vl" style="left:497.5px;top:373px;height:17px"></div><div class="t" style="left:7px;top:374px">15</div><div class="t ct" style="left:24.5px;top:374px;width:50px">30600</div><div class="t ct" style="left:74.5px;top:374px;width:50px">30600</div><div class="t ct" style="left:124.5px;top:374px;width:39px">4</div><div class="t ct" style="left:163.5px;top:374px;width:59px">43.105</div><div class="t ct" style="left:222.5px;top:374px;width:85px">443.1903</div><div class="t ct" style="left:307.5px;top:374px;width:95px">8.508939e-10</div><div class="t ct" style="left:402.5px;top:374px;width:95px">3.149459e-02</div><div class="hl" style="left:0px;top:406px;width:498px"></div><div class="vl" style="left:24.5px;top:390px;height:17px"></div><div class="vl" style="left:74.5px;top:390px;height:17px"></div><div class="vl" style="left:124.5px;top:390px;height:17px"></div><div class="vl" style="left:163.5px;top:390px;height:17px"></div><div class="vl" style="left:222.5px;top:390px;height:17px"></div><div class="vl" style="left:307.5px;top:390px;height:17px"></div><div class="vl" style="left:402.5px;top:390px;height:17px"></div><div class="vl" style="left:497.5px;top:390px;height:17px"></div><div class="t" style="left:7px;top:391px">16</div><div class="t ct" style="left:24.5px;top:391px;width:50px">30600</div><div class="t ct" style="left:74.5px;top:391px;width:50px">30600</div><div class="t ct" style="left:124.5px;top:391px;width:39px">4</div><div class="t ct" style="left:163.5px;top:391px;width:59px">43.755</div><div class="t ct" style="left:222.5px;top:391px;width:85px">436.6071</div><div class="t ct" style="left:307.5px;top:391px;width:95px">8.508939e-10</div><div class="t ct" style="left:402.5px;top:391px;width:95px">3.149459e-02</div><div class="hl" style="left:0px;top:423px;width:498px"></div><div class="vl" style="left:24.5px;top:407px;height:17px"></div><div class="vl" style="left:74.5px;top:407px;height:17px"></div><div class="vl" style="left:124.5px;top:407px;height:17px"></div><div class="vl" style="left:163.5px;top:407px;height:17px"></div><div class="vl" style="left:222.5px;top:407px;height:17px"></div><div class="vl" style="left:307.5px;top:407px;height:17px"></div><div class="vl" style="left:402.5px;top:407px;height:17px"></div><div class="vl" style="left:497.5px;top:407px;height:17px"></div><div class="t" style="left:7px;top:408px">17</div><div class="t ct" style="left:24.5px;top:408px;width:50px">30600</div><div class="t ct" style="left:74.5px;top:408px;width:50px">30600</div><div class="t ct" style="left:124.5px;top:408px;width:39px">4</div><div class="t ct" style="left:163.5px;top:408px;width:59px">43.057</div><div class="t ct" style="left:222.5px;top:408px;width:85px">443.6807</div><div class="t ct" style="left:307.5px;top:408px;width:95px">8.508939e-10</div><div class="t ct" style="left:402.5px;top:408px;width:95px">3.149459e-02</div><div class="hl" style="left:0px;top:440px;width:498px"></div><div class="vl" style="left:24.5px;top:424px;height:17px"></div><div class="vl" style="left:74.5px;top:424px;height:17px"></div><div class="vl" style="left:124.5px;top:424px;height:17px"></div><div class="vl" style="left:163.5px;top:424px;height:17px"></div><div class="vl" style="left:222.5px;top:424px;height:17px"></div><div class="vl" style="left:307.5px;top:424px;height:17px"></div><div class="vl" style="left:402.5px;top:424px;height:17px"></div><div class="vl" style="left:497.5px;top:424px;height:17px"></div><div class="t" style="left:7px;top:425px">18</div><div class="t ct" style="left:24.5px;top:425px;width:50px">30600</div><div class="t ct" style="left:74.5px;top:425px;width:50px">30600</div><div class="t ct" style="left:124.5px;top:425px;width:39px">4</div><div class="t ct" style="left:163.5px;top:425px;width:59px">43.531</div><div class="t ct" style="left:222.5px;top:425px;width:85px">438.8528</div><div class="t ct" style="left:307.5px;top:425px;width:95px">8.508939e-10</div><div class="t ct" style="left:402.5px;top:425px;width:95px">3.149459e-02</div><div class="hl" style="left:0px;top:457px;width:498px"></div><div class="vl" style="left:24.5px;top:441px;height:17px"></div><div class="vl" style="left:74.5px;top:441px;height:17px"></div><div class="vl" style="left:124.5px;top:441px;height:17px"></div><div class="vl" style="left:163.5px;top:441px;height:17px"></div><div class="vl" style="left:222.5px;top:441px;height:17px"></div><div class="vl" style="left:307.5px;top:441px;height:17px"></div><div class="vl" style="left:402.5px;top:441px;height:17px"></div><div class="vl" style="left:497.5px;top:441px;height:17px"></div><div class="t" style="left:7px;top:442px">19</div><div class="t ct" style="left:24.5px;top:442px;width:50px">30600</div><div class="t ct" style="left:74.5px;top:442px;width:50px">30600</div><div class="t ct" style="left:124.5px;top:442px;width:39px">4</div><div class="t ct" style="left:163.5px;top:442px;width:59px">42.975</div><div class="t ct" style="left:222.5px;top:442px;width:85px">444.5327</div><div class="t ct" style="left:307.5px;top:442px;width:95px">8.508939e-10</div><div class="t ct" style="left:402.5px;top:442px;width:95px">3.149459e-02</div><div class="hl" style="left:0px;top:474px;width:498px"></div><div class="vl" style="left:24.5px;top:458px;height:17px"></div><div class="vl" style="left:74.5px;top:458px;height:17px"></div><div class="vl" style="left:124.5px;top:458px;height:17px"></div><div class="vl" style="left:163.5px;top:458px;height:17px"></div><div class="vl" style="left:222.5px;top:458px;height:17px"></div><div class="vl" style="left:307.5px;top:458px;height:17px"></div><div class="vl" style="left:402.5px;top:458px;height:17px"></div><div class="vl" style="left:497.5px;top:458px;height:17px"></div><div class="t" style="left:7px;top:459px">20</div><div class="t ct" style="left:24.5px;top:459px;width:50px">30600</div><div class="t ct" style="left:74.5px;top:459px;width:50px">30600</div><div class="t ct" style="left:124.5px;top:459px;width:39px">4</div><div class="t ct" style="left:163.5px;top:459px;width:59px">43.000</div><div class="t ct" style="left:222.5px;top:459px;width:85px">444.2715</div><div class="t ct" style="left:307.5px;top:459px;width:95px">8.508939e-10</div><div class="t ct" style="left:402.5px;top:459px;width:95px">3.149459e-02</div><div class="hl" style="left:0px;top:491px;width:498px"></div><div class="vl" style="left:24.5px;top:475px;height:17px"></div><div class="vl" style="left:74.5px;top:475px;height:17px"></div><div class="vl" style="left:124.5px;top:475px;height:17px"></div><div class="vl" style="left:163.5px;top:475px;height:17px"></div><div class="vl" style="left:222.5px;top:475px;height:17px"></div><div class="vl" style="left:307.5px;top:475px;height:17px"></div><div class="vl" style="left:402.5px;top:475px;height:17px"></div><div class="vl" style="left:497.5px;top:475px;height:17px"></div><div class="t" style="left:7px;top:476px">21</div><div class="t ct" style="left:24.5px;top:476px;width:50px">30600</div><div class="t ct" style="left:74.5px;top:476px;width:50px">30600</div><div class="t ct" style="left:124.5px;top:476px;width:39px">4</div><div class="t ct" style="left:163.5px;top:476px;width:59px">43.468</div><div class="t ct" style="left:222.5px;top:476px;width:85px">439.4886</div><div class="t ct" style="left:307.5px;top:476px;width:95px">8.508939e-10</div><div class="t ct" style="left:402.5px;top:476px;width:95px">3.149459e-02</div><div class="hl" style="left:0px;top:508px;width:498px"></div><div class="vl" style="left:24.5px;top:492px;height:17px"></div><div class="vl" style="left:74.5px;top:492px;height:17px"></div><div class="vl" style="left:124.5px;top:492px;height:17px"></div><div class="vl" style="left:163.5px;top:492px;height:17px"></div><div class="vl" style="left:222.5px;top:492px;height:17px"></div><div class="vl" style="left:307.5px;top:492px;height:17px"></div><div class="vl" style="left:402.5px;top:492px;height:17px"></div><div class="vl" style="left:497.5px;top:492px;height:17px"></div><div class="t" style="left:7px;top:493px">22</div><div class="t ct" style="left:24.5px;top:493px;width:50px">30600</div><div class="t ct" style="left:74.5px;top:493px;width:50px">30600</div><div class="t ct" style="left:124.5px;top:493px;width:39px">4</div><div class="t ct" style="left:163.5px;top:493px;width:59px">43.309</div><div class="t ct" style="left:222.5px;top:493px;width:85px">441.1021</div><div class="t ct" style="left:307.5px;top:493px;width:95px">8.508939e-10</div><div class="t ct" style="left:402.5px;top:493px;width:95px">3.149459e-02</div><div class="hl" style="left:0px;top:525px;width:498px"></div><div class="vl" style="left:24.5px;top:509px;height:17px"></div><div class="vl" style="left:74.5px;top:509px;height:17px"></div><div class="vl" style="left:124.5px;top:509px;height:17px"></div><div class="vl" style="left:163.5px;top:509px;height:17px"></div><div class="vl" style="left:222.5px;top:509px;height:17px"></div><div class="vl" style="left:307.5px;top:509px;height:17px"></div><div class="vl" style="left:402.5px;top:509px;height:17px"></div><div class="vl" style="left:497.5px;top:509px;height:17px"></div><div class="t" style="left:7px;top:510px">23</div><div class="t ct" style="left:24.5px;top:510px;width:50px">30600</div><div class="t ct" style="left:74.5px;top:510px;width:50px">30600</div><div class="t ct" style="left:124.5px;top:510px;width:39px">4</div><div class="t ct" style="left:163.5px;top:510px;width:59px">43.186</div><div class="t ct" style="left:222.5px;top:510px;width:85px">442.3614</div><div class="t ct" style="left:307.5px;top:510px;width:95px">8.508939e-10</div><div class="t ct" style="left:402.5px;top:510px;width:95px">3.149459e-02</div><div class="hl" style="left:0px;top:542px;width:498px"></div><div class="vl" style="left:24.5px;top:526px;height:17px"></div><div class="vl" style="left:74.5px;top:526px;height:17px"></div><div class="vl" style="left:124.5px;top:526px;height:17px"></div><div class="vl" style="left:163.5px;top:526px;height:17px"></div><div class="vl" style="left:222.5px;top:526px;height:17px"></div><div class="vl" style="left:307.5px;top:526px;height:17px"></div><div class="vl" style="left:402.5px;top:526px;height:17px"></div><div class="vl" style="left:497.5px;top:526px;height:17px"></div><div class="t" style="left:7px;top:527px">24</div><div class="t ct" style="left:24.5px;top:527px;width:50px">30600</div><div class="t ct" style="left:74.5px;top:527px;width:50px">30600</div><div class="t ct" style="left:124.5px;top:527px;width:39px">4</div><div class="t ct" style="left:163.5px;top:527px;width:59px">42.551</div><div class="t ct" style="left:222.5px;top:527px;width:85px">448.9596</div><div class="t ct" style="left:307.5px;top:527px;width:95px">8.508939e-10</div><div class="t ct" style="left:402.5px;top:527px;width:95px">3.149459e-02</div><div class="hl" style="left:0px;top:559px;width:498px"></div><div class="vl" style="left:24.5px;top:543px;height:17px"></div><div class="vl" style="left:74.5px;top:543px;height:17px"></div><div class="vl" style="left:124.5px;top:543px;height:17px"></div><div class="vl" style="left:163.5px;top:543px;height:17px"></div><div class="vl" style="left:222.5px;top:543px;height:17px"></div><div class="vl" style="left:307.5px;top:543px;height:17px"></div><div class="vl" style="left:402.5px;top:543px;height:17px"></div><div class="vl" style="left:497.5px;top:543px;height:17px"></div><div class="t" style="left:7px;top:544px">25</div><div class="t ct" style="left:24.5px;top:544px;width:50px">30600</div><div class="t ct" style="left:74.5px;top:544px;width:50px">30600</div><div class="t ct" style="left:124.5px;top:544px;width:39px">4</div><div class="t ct" style="left:163.5px;top:544px;width:59px">43.185</div><div class="t ct" style="left:222.5px;top:544px;width:85px">442.3632</div><div class="t ct" style="left:307.5px;top:544px;width:95px">8.508939e-10</div><div class="t ct" style="left:402.5px;top:544px;width:95px">3.149459e-02</div><div class="hl" style="left:0px;top:576px;width:498px"></div><div class="vl" style="left:24.5px;top:560px;height:17px"></div><div class="vl" style="left:74.5px;top:560px;height:17px"></div><div class="vl" style="left:124.5px;top:560px;height:17px"></div><div class="vl" style="left:163.5px;top:560px;height:17px"></div><div class="vl" style="left:222.5px;top:560px;height:17px"></div><div class="vl" style="left:307.5px;top:560px;height:17px"></div><div class="vl" style="left:402.5px;top:560px;height:17px"></div><div class="vl" style="left:497.5px;top:560px;height:17px"></div><div class="t" style="left:7px;top:561px">26</div><div class="t ct" style="left:24.5px;top:561px;width:50px">30600</div><div class="t ct" style="left:74.5px;top:561px;width:50px">30600</div><div class="t ct" style="left:124.5px;top:561px;width:39px">4</div><div class="t ct" style="left:163.5px;top:561px;width:59px">42.479</div><div class="t ct" style="left:222.5px;top:561px;width:85px">449.7191</div><div class="t ct" style="left:307.5px;top:561px;width:95px">8.508939e-10</div><div class="t ct" style="left:402.5px;top:561px;width:95px">3.149459e-02</div><div class="hl" style="left:0px;top:593px;width:498px"></div><div class="vl" style="left:24.5px;top:577px;height:17px"></div><div class="vl" style="left:74.5px;top:577px;height:17px"></div><div class="vl" style="left:124.5px;top:577px;height:17px"></div><div class="vl" style="left:163.5px;top:577px;height:17px"></div><div class="vl" style="left:222.5px;top:577px;height:17px"></div><div class="vl" style="left:307.5px;top:577px;height:17px"></div><div class="vl" style="left:402.5px;top:577px;height:17px"></div><div class="vl" style="left:497.5px;top:577px;height:17px"></div><div class="t" style="left:7px;top:578px">27</div><div class="t ct" style="left:24.5px;top:578px;width:50px">30600</div><div class="t ct" style="left:74.5px;top:578px;width:50px">30600</div><div class="t ct" style="left:124.5px;top:578px;width:39px">4</div><div class="t ct" style="left:163.5px;top:578px;width:59px">42.619</div><div class="t ct" style="left:222.5px;top:578px;width:85px">448.2425</div><div class="t ct" style="left:307.5px;top:578px;width:95px">8.508939e-10</div><div class="t ct" style="left:402.5px;top:578px;width:95px">3.149459e-02</div><div class="hl" style="left:0px;top:610px;width:498px"></div><div class="vl" style="left:24.5px;top:594px;height:17px"></div><div class="vl" style="left:74.5px;top:594px;height:17px"></div><div class="vl" style="left:124.5px;top:594px;height:17px"></div><div class="vl" style="left:163.5px;top:594px;height:17px"></div><div class="vl" style="left:222.5px;top:594px;height:17px"></div><div class="vl" style="left:307.5px;top:594px;height:17px"></div><div class="vl" style="left:402.5px;top:594px;height:17px"></div><div class="vl" style="left:497.5px;top:594px;height:17px"></div><div class="t" style="left:7px;top:595px">28</div><div class="t ct" style="left:24.5px;top:595px;width:50px">30600</div><div class="t ct" style="left:74.5px;top:595px;width:50px">30600</div><div class="t ct" style="left:124.5px;top:595px;width:39px">4</div><div class="t ct" style="left:163.5px;top:595px;width:59px">43.155</div><div class="t ct" style="left:222.5px;top:595px;width:85px">442.6763</div><div class="t ct" style="left:307.5px;top:595px;width:95px">8.508939e-10</div><div class="t ct" style="left:402.5px;top:595px;width:95px">3.149459e-02</div><div class="hl" style="left:0px;top:627px;width:498px"></div><div class="vl" style="left:24.5px;top:611px;height:17px"></div><div class="vl" style="left:74.5px;top:611px;height:17px"></div><div class="vl" style="left:124.5px;top:611px;height:17px"></div><div class="vl" style="left:163.5px;top:611px;height:17px"></div><div class="vl" style="left:222.5px;top:611px;height:17px"></div><div class="vl" style="left:307.5px;top:611px;height:17px"></div><div class="vl" style="left:402.5px;top:611px;height:17px"></div><div class="vl" style="left:497.5px;top:611px;height:17px"></div><div class="t" style="left:7px;top:612px">29</div><div class="t ct" style="left:24.5px;top:612px;width:50px">30600</div><div class="t ct" style="left:74.5px;top:612px;width:50px">30600</div><div class="t ct" style="left:124.5px;top:612px;width:39px">4</div><div class="t ct" style="left:163.5px;top:612px;width:59px">42.335</div><div class="t ct" style="left:222.5px;top:612px;width:85px">451.2527</div><div class="t ct" style="left:307.5px;top:612px;width:95px">8.508939e-10</div><div class="t ct" style="left:402.5px;top:612px;width:95px">3.149459e-02</div><div class="hl" style="left:0px;top:644px;width:498px"></div><div class="vl" style="left:24.5px;top:628px;height:17px"></div><div class="vl" style="left:74.5px;top:628px;height:17px"></div><div class="vl" style="left:124.5px;top:628px;height:17px"></div><div class="vl" style="left:163.5px;top:628px;height:17px"></div><div class="vl" style="left:222.5px;top:628px;height:17px"></div><div class="vl" style="left:307.5px;top:628px;height:17px"></div><div class="vl" style="left:402.5px;top:628px;height:17px"></div><div class="vl" style="left:497.5px;top:628px;height:17px"></div><div class="t" style="left:7px;top:629px">30</div><div class="t ct" style="left:24.5px;top:629px;width:50px">30600</div><div class="t ct" style="left:74.5px;top:629px;width:50px">30600</div><div class="t ct" style="left:124.5px;top:629px;width:39px">4</div><div class="t ct" style="left:163.5px;top:629px;width:59px">43.669</div><div class="t ct" style="left:222.5px;top:629px;width:85px">437.4592</div><div class="t ct" style="left:307.5px;top:629px;width:95px">8.508939e-10</div><div class="t ct" style="left:402.5px;top:629px;width:95px">3.149459e-02</div><div class="hl" style="left:0px;top:661px;width:498px"></div><div class="vl" style="left:24.5px;top:645px;height:17px"></div><div class="vl" style="left:74.5px;top:645px;height:17px"></div><div class="vl" style="left:124.5px;top:645px;height:17px"></div><div class="vl" style="left:163.5px;top:645px;height:17px"></div><div class="vl" style="left:222.5px;top:645px;height:17px"></div><div class="vl" style="left:307.5px;top:645px;height:17px"></div><div class="vl" style="left:402.5px;top:645px;height:17px"></div><div class="vl" style="left:497.5px;top:645px;height:17px"></div><div class="t" style="left:7px;top:646px">31</div><div class="t ct" style="left:24.5px;top:646px;width:50px">30600</div><div class="t ct" style="left:74.5px;top:646px;width:50px">30600</div><div class="t ct" style="left:124.5px;top:646px;width:39px">4</div><div class="t ct" style="left:163.5px;top:646px;width:59px">42.634</div><div class="t ct" style="left:222.5px;top:646px;width:85px">448.0892</div><div class="t ct" style="left:307.5px;top:646px;width:95px">8.508939e-10</div><div class="t ct" style="left:402.5px;top:646px;width:95px">3.149459e-02</div><div class="hl" style="left:0px;top:678px;width:498px"></div><div class="vl" style="left:24.5px;top:662px;height:17px"></div><div class="vl" style="left:74.5px;top:662px;height:17px"></div><div class="vl" style="left:124.5px;top:662px;height:17px"></div><div class="vl" style="left:163.5px;top:662px;height:17px"></div><div class="vl" style="left:222.5px;top:662px;height:17px"></div><div class="vl" style="left:307.5px;top:662px;height:17px"></div><div class="vl" style="left:402.5px;top:662px;height:17px"></div><div class="vl" style="left:497.5px;top:662px;height:17px"></div><div class="t" style="left:7px;top:663px">32</div><div class="t ct" style="left:24.5px;top:663px;width:50px">30600</div><div class="t ct" style="left:74.5px;top:663px;width:50px">30600</div><div class="t ct" style="left:124.5px;top:663px;width:39px">4</div><div class="t ct" style="left:163.5px;top:663px;width:59px">43.801</div><div class="t ct" style="left:222.5px;top:663px;width:85px">436.1450</div><div class="t ct" style="left:307.5px;top:663px;width:95px">8.508939e-10</div><div class="t ct" style="left:402.5px;top:663px;width:95px">3.149459e-02</div><div class="hl" style="left:0px;top:695px;width:498px"></div><div class="vl" style="left:24.5px;top:679px;height:17px"></div><div class="vl" style="left:74.5px;top:679px;height:17px"></div><div class="vl" style="left:124.5px;top:679px;height:17px"></div><div class="vl" style="left:163.5px;top:679px;height:17px"></div><div class="vl" style="left:222.5px;top:679px;height:17px"></div><div class="vl" style="left:307.5px;top:679px;height:17px"></div><div class="vl" style="left:402.5px;top:679px;height:17px"></div><div class="vl" style="left:497.5px;top:679px;height:17px"></div><div class="t" style="left:7px;top:680px">33</div><div class="t ct" style="left:24.5px;top:680px;width:50px">30600</div><div class="t ct" style="left:74.5px;top:680px;width:50px">30600</div><div class="t ct" style="left:124.5px;top:680px;width:39px">4</div><div class="t ct" style="left:163.5px;top:680px;width:59px">43.463</div><div class="t ct" style="left:222.5px;top:680px;width:85px">439.5340</div><div class="t ct" style="left:307.5px;top:680px;width:95px">8.508939e-10</div><div class="t ct" style="left:402.5px;top:680px;width:95px">3.149459e-02</div><div class="hl" style="left:0px;top:712px;width:498px"></div><div class="vl" style="left:24.5px;top:696px;height:17px"></div><div class="vl" style="left:74.5px;top:696px;height:17px"></div><div class="vl" style="left:124.5px;top:696px;height:17px"></div><div class="vl" style="left:163.5px;top:696px;height:17px"></div><div class="vl" style="left:222.5px;top:696px;height:17px"></div><div class="vl" style="left:307.5px;top:696px;height:17px"></div><div class="vl" style="left:402.5px;top:696px;height:17px"></div><div class="vl" style="left:497.5px;top:696px;height:17px"></div><div class="t" style="left:7px;top:697px">34</div><div class="t ct" style="left:24.5px;top:697px;width:50px">30600</div><div class="t ct" style="left:74.5px;top:697px;width:50px">30600</div><div class="t ct" style="left:124.5px;top:697px;width:39px">4</div><div class="t ct" style="left:163.5px;top:697px;width:59px">43.326</div><div class="t ct" style="left:222.5px;top:697px;width:85px">440.9304</div><div class="t ct" style="left:307.5px;top:697px;width:95px">8.508939e-10</div><div class="t ct" style="left:402.5px;top:697px;width:95px">3.149459e-02</div><div class="hl" style="left:0px;top:729px;width:498px"></div><div class="vl" style="left:24.5px;top:713px;height:17px"></div><div class="vl" style="left:74.5px;top:713px;height:17px"></div><div class="vl" style="left:124.5px;top:713px;height:17px"></div><div class="vl" style="left:163.5px;top:713px;height:17px"></div><div class="vl" style="left:222.5px;top:713px;height:17px"></div><div class="vl" style="left:307.5px;top:713px;height:17px"></div><div class="vl" style="left:402.5px;top:713px;height:17px"></div><div class="vl" style="left:497.5px;top:713px;height:17px"></div><div class="t" style="left:7px;top:714px">35</div><div class="t ct" style="left:24.5px;top:714px;width:50px">30600</div><div class="t ct" style="left:74.5px;top:714px;width:50px">30600</div><div class="t ct" style="left:124.5px;top:714px;width:39px">4</div><div class="t ct" style="left:163.5px;top:714px;width:59px">43.534</div><div class="t ct" style="left:222.5px;top:714px;width:85px">438.8204</div><div class="t ct" style="left:307.5px;top:714px;width:95px">8.508939e-10</div><div class="t ct" style="left:402.5px;top:714px;width:95px">3.149459e-02</div><div class="hl" style="left:0px;top:746px;width:498px"></div><div class="vl" style="left:24.5px;top:730px;height:17px"></div><div class="vl" style="left:74.5px;top:730px;height:17px"></div><div class="vl" style="left:124.5px;top:730px;height:17px"></div><div class="vl" style="left:163.5px;top:730px;height:17px"></div><div class="vl" style="left:222.5px;top:730px;height:17px"></div><div class="vl" style="left:307.5px;top:730px;height:17px"></div><div class="vl" style="left:402.5px;top:730px;height:17px"></div><div class="vl" style="left:497.5px;top:730px;height:17px"></div><div class="t" style="left:7px;top:731px">36</div><div class="t ct" style="left:24.5px;top:731px;width:50px">30600</div><div class="t ct" style="left:74.5px;top:731px;width:50px">30600</div><div class="t ct" style="left:124.5px;top:731px;width:39px">4</div><div class="t ct" style="left:163.5px;top:731px;width:59px">43.363</div><div class="t ct" style="left:222.5px;top:731px;width:85px">440.5509</div><div class="t ct" style="left:307.5px;top:731px;width:95px">8.508939e-10</div><div class="t ct" style="left:402.5px;top:731px;width:95px">3.149459e-02</div><div class="hl" style="left:0px;top:763px;width:498px"></div><div class="vl" style="left:24.5px;top:747px;height:17px"></div><div class="vl" style="left:74.5px;top:747px;height:17px"></div><div class="vl" style="left:124.5px;top:747px;height:17px"></div><div class="vl" style="left:163.5px;top:747px;height:17px"></div><div class="vl" style="left:222.5px;top:747px;height:17px"></div><div class="vl" style="left:307.5px;top:747px;height:17px"></div><div class="vl" style="left:402.5px;top:747px;height:17px"></div><div class="vl" style="left:497.5px;top:747px;height:17px"></div><div class="t" style="left:7px;top:748px">37</div><div class="t ct" style="left:24.5px;top:748px;width:50px">30600</div><div class="t ct" style="left:74.5px;top:748px;width:50px">30600</div><div class="t ct" style="left:124.5px;top:748px;width:39px">4</div><div class="t ct" style="left:163.5px;top:748px;width:59px">43.533</div><div class="t ct" style="left:222.5px;top:748px;width:85px">438.8304</div><div class="t ct" style="left:307.5px;top:748px;width:95px">8.508939e-10</div><div class="t ct" style="left:402.5px;top:748px;width:95px">3.149459e-02</div><div class="hl" style="left:0px;top:780px;width:498px"></div><div class="vl" style="left:24.5px;top:764px;height:17px"></div><div class="vl" style="left:74.5px;top:764px;height:17px"></div><div class="vl" style="left:124.5px;top:764px;height:17px"></div><div class="vl" style="left:163.5px;top:764px;height:17px"></div><div class="vl" style="left:222.5px;top:764px;height:17px"></div><div class="vl" style="left:307.5px;top:764px;height:17px"></div><div class="vl" style="left:402.5px;top:764px;height:17px"></div><div class="vl" style="left:497.5px;top:764px;height:17px"></div><div class="t" style="left:7px;top:765px">38</div><div class="t ct" style="left:24.5px;top:765px;width:50px">30600</div><div class="t ct" style="left:74.5px;top:765px;width:50px">30600</div><div class="t ct" style="left:124.5px;top:765px;width:39px">4</div><div class="t ct" style="left:163.5px;top:765px;width:59px">43.743</div><div class="t ct" style="left:222.5px;top:765px;width:85px">436.7221</div><div class="t ct" style="left:307.5px;top:765px;width:95px">8.508939e-10</div><div class="t ct" style="left:402.5px;top:765px;width:95px">3.149459e-02</div><div class="hl" style="left:0px;top:797px;width:498px"></div><div class="vl" style="left:24.5px;top:781px;height:17px"></div><div class="vl" style="left:74.5px;top:781px;height:17px"></div><div class="vl" style="left:124.5px;top:781px;height:17px"></div><div class="vl" style="left:163.5px;top:781px;height:17px"></div><div class="vl" style="left:222.5px;top:781px;height:17px"></div><div class="vl" style="left:307.5px;top:781px;height:17px"></div><div class="vl" style="left:402.5px;top:781px;height:17px"></div><div class="vl" style="left:497.5px;top:781px;height:17px"></div><div class="t" style="left:7px;top:782px">39</div><div class="t ct" style="left:24.5px;top:782px;width:50px">30600</div><div class="t ct" style="left:74.5px;top:782px;width:50px">30600</div><div class="t ct" style="left:124.5px;top:782px;width:39px">4</div><div class="t ct" style="left:163.5px;top:782px;width:59px">44.791</div><div class="t ct" style="left:222.5px;top:782px;width:85px">426.5068</div><div class="t ct" style="left:307.5px;top:782px;width:95px">8.508939e-10</div><div class="t ct" style="left:402.5px;top:782px;width:95px">3.149459e-02</div><div class="hl" style="left:0px;top:814px;width:498px"></div><div class="vl" style="left:24.5px;top:798px;height:17px"></div><div class="vl" style="left:74.5px;top:798px;height:17px"></div><div class="vl" style="left:124.5px;top:798px;height:17px"></div><div class="vl" style="left:163.5px;top:798px;height:17px"></div><div class="vl" style="left:222.5px;top:798px;height:17px"></div><div class="vl" style="left:307.5px;top:798px;height:17px"></div><div class="vl" style="left:402.5px;top:798px;height:17px"></div><div class="vl" style="left:497.5px;top:798px;height:17px"></div><div class="t" style="left:7px;top:799px">40</div><div class="t ct" style="left:24.5px;top:799px;width:50px">30600</div><div class="t ct" style="left:74.5px;top:799px;width:50px">30600</div><div class="t ct" style="left:124.5px;top:799px;width:39px">4</div><div class="t ct" style="left:163.5px;top:799px;width:59px">42.579</div><div class="t ct" style="left:222.5px;top:799px;width:85px">448.6633</div><div class="t ct" style="left:307.5px;top:799px;width:95px">8.508939e-10</div><div class="t ct" style="left:402.5px;top:799px;width:95px">3.149459e-02</div><div class="hl" style="left:0px;top:831px;width:498px"></div><div class="vl" style="left:24.5px;top:815px;height:17px"></div><div class="vl" style="left:74.5px;top:815px;height:17px"></div><div class="vl" style="left:124.5px;top:815px;height:17px"></div><div class="vl" style="left:163.5px;top:815px;height:17px"></div><div class="vl" style="left:222.5px;top:815px;height:17px"></div><div class="vl" style="left:307.5px;top:815px;height:17px"></div><div class="vl" style="left:402.5px;top:815px;height:17px"></div><div class="vl" style="left:497.5px;top:815px;height:17px"></div><div class="t" style="left:7px;top:816px">41</div><div class="t ct" style="left:24.5px;top:816px;width:50px">30600</div><div class="t ct" style="left:74.5px;top:816px;width:50px">30600</div><div class="t ct" style="left:124.5px;top:816px;width:39px">4</div><div class="t ct" style="left:163.5px;top:816px;width:59px">42.491</div><div class="t ct" style="left:222.5px;top:816px;width:85px">449.5947</div><div class="t ct" style="left:307.5px;top:816px;width:95px">8.508939e-10</div><div class="t ct" style="left:402.5px;top:816px;width:95px">3.149459e-02</div><div class="hl" style="left:0px;top:848px;width:498px"></div><div class="vl" style="left:24.5px;top:832px;height:17px"></div><div class="vl" style="left:74.5px;top:832px;height:17px"></div><div class="vl" style="left:124.5px;top:832px;height:17px"></div><div class="vl" style="left:163.5px;top:832px;height:17px"></div><div class="vl" style="left:222.5px;top:832px;height:17px"></div><div class="vl" style="left:307.5px;top:832px;height:17px"></div><div class="vl" style="left:402.5px;top:832px;height:17px"></div><div class="vl" style="left:497.5px;top:832px;height:17px"></div><div class="t" style="left:7px;top:833px">42</div><div class="t ct" style="left:24.5px;top:833px;width:50px">30600</div><div class="t ct" style="left:74.5px;top:833px;width:50px">30600</div><div class="t ct" style="left:124.5px;top:833px;width:39px">4</div><div class="t ct" style="left:163.5px;top:833px;width:59px">42.208</div><div class="t ct" style="left:222.5px;top:833px;width:85px">452.6029</div><div class="t ct" style="left:307.5px;top:833px;width:95px">8.508939e-10</div><div class="t ct" style="left:402.5px;top:833px;width:95px">3.149459e-02</div><div class="hl" style="left:0px;top:865px;width:498px"></div><div class="vl" style="left:24.5px;top:849px;height:17px"></div><div class="vl" style="left:74.5px;top:849px;height:17px"></div><div class="vl" style="left:124.5px;top:849px;height:17px"></div><div class="vl" style="left:163.5px;top:849px;height:17px"></div><div class="vl" style="left:222.5px;top:849px;height:17px"></div><div class="vl" style="left:307.5px;top:849px;height:17px"></div><div class="vl" style="left:402.5px;top:849px;height:17px"></div><div class="vl" style="left:497.5px;top:849px;height:17px"></div><div class="t" style="left:7px;top:850px">43</div><div class="t ct" style="left:24.5px;top:850px;width:50px">30600</div><div class="t ct" style="left:74.5px;top:850px;width:50px">30600</div><div class="t ct" style="left:124.5px;top:850px;width:39px">4</div><div class="t ct" style="left:163.5px;top:850px;width:59px">43.357</div><div class="t ct" style="left:222.5px;top:850px;width:85px">440.6117</div><div class="t ct" style="left:307.5px;top:850px;width:95px">8.508939e-10</div><div class="t ct" style="left:402.5px;top:850px;width:95px">3.149459e-02</div><div class="hl" style="left:0px;top:882px;width:498px"></div><div class="vl" style="left:24.5px;top:866px;height:17px"></div><div class="vl" style="left:74.5px;top:866px;height:17px"></div><div class="vl" style="left:124.5px;top:866px;height:17px"></div><div class="vl" style="left:163.5px;top:866px;height:17px"></div><div class="vl" style="left:222.5px;top:866px;height:17px"></div><div class="vl" style="left:307.5px;top:866px;height:17px"></div><div class="vl" style="left:402.5px;top:866px;height:17px"></div><div class="vl" style="left:497.5px;top:866px;height:17px"></div><div class="t" style="left:7px;top:867px">44</div><div class="t ct" style="left:24.5px;top:867px;width:50px">30600</div><div class="t ct" style="left:74.5px;top:867px;width:50px">30600</div><div class="t ct" style="left:124.5px;top:867px;width:39px">4</div><div class="t ct" style="left:163.5px;top:867px;width:59px">44.134</div><div class="t ct" style="left:222.5px;top:867px;width:85px">432.8536</div><div class="t ct" style="left:307.5px;top:867px;width:95px">8.508939e-10</div><div class="t ct" style="left:402.5px;top:867px;width:95px">3.149459e-02</div><div class="hl" style="left:0px;top:899px;width:498px"></div><div class="vl" style="left:24.5px;top:883px;height:17px"></div><div class="vl" style="left:74.5px;top:883px;height:17px"></div><div class="vl" style="left:124.5px;top:883px;height:17px"></div><div class="vl" style="left:163.5px;top:883px;height:17px"></div><div class="vl" style="left:222.5px;top:883px;height:17px"></div><div class="vl" style="left:307.5px;top:883px;height:17px"></div><div class="vl" style="left:402.5px;top:883px;height:17px"></div><div class="vl" style="left:497.5px;top:883px;height:17px"></div><div class="t" style="left:7px;top:884px">45</div><div class="t ct" style="left:24.5px;top:884px;width:50px">30600</div><div class="t ct" style="left:74.5px;top:884px;width:50px">30600</div><div class="t ct" style="left:124.5px;top:884px;width:39px">4</div><div class="t ct" style="left:163.5px;top:884px;width:59px">43.495</div><div class="t ct" style="left:222.5px;top:884px;width:85px">439.2108</div><div class="t ct" style="left:307.5px;top:884px;width:95px">8.508939e-10</div><div class="t ct" style="left:402.5px;top:884px;width:95px">3.149459e-02</div><div class="hl" style="left:0px;top:916px;width:498px"></div><div class="vl" style="left:24.5px;top:900px;height:17px"></div><div class="vl" style="left:74.5px;top:900px;height:17px"></div><div class="vl" style="left:124.5px;top:900px;height:17px"></div><div class="vl" style="left:163.5px;top:900px;height:17px"></div><div class="vl" style="left:222.5px;top:900px;height:17px"></div><div class="vl" style="left:307.5px;top:900px;height:17px"></div><div class="vl" style="left:402.5px;top:900px;height:17px"></div><div class="vl" style="left:497.5px;top:900px;height:17px"></div><div class="t" style="left:7px;top:901px">46</div><div class="t ct" style="left:24.5px;top:901px;width:50px">30600</div><div class="t ct" style="left:74.5px;top:901px;width:50px">30600</div><div class="t ct" style="left:124.5px;top:901px;width:39px">4</div><div class="t ct" style="left:163.5px;top:901px;width:59px">43.921</div><div class="t ct" style="left:222.5px;top:901px;width:85px">434.9569</div><div class="t ct" style="left:307.5px;top:901px;width:95px">8.508939e-10</div><div class="t ct" style="left:402.5px;top:901px;width:95px">3.149459e-02</div><div class="hl" style="left:0px;top:933px;width:498px"></div><div class="vl" style="left:24.5px;top:917px;height:17px"></div><div class="vl" style="left:74.5px;top:917px;height:17px"></div><div class="vl" style="left:124.5px;top:917px;height:17px"></div><div class="vl" style="left:163.5px;top:917px;height:17px"></div><div class="vl" style="left:222.5px;top:917px;height:17px"></div><div class="vl" style="left:307.5px;top:917px;height:17px"></div><div class="vl" style="left:402.5px;top:917px;height:17px"></div><div class="vl" style="left:497.5px;top:917px;height:17px"></div><div class="t" style="left:7px;top:918px">47</div><div class="t ct" style="left:24.5px;top:918px;width:50px">30600</div><div class="t ct" style="left:74.5px;top:918px;width:50px">30600</div><div class="t ct" style="left:124.5px;top:918px;width:39px">4</div><div class="t ct" style="left:163.5px;top:918px;width:59px">42.752</div><div class="t ct" style="left:222.5px;top:918px;width:85px">446.8436</div><div class="t ct" style="left:307.5px;top:918px;width:95px">8.508939e-10</div><div class="t ct" style="left:402.5px;top:918px;width:95px">3.149459e-02</div><div class="hl" style="left:0px;top:950px;width:498px"></div><div class="vl" style="left:24.5px;top:934px;height:17px"></div><div class="vl" style="left:74.5px;top:934px;height:17px"></div><div class="vl" style="left:124.5px;top:934px;height:17px"></div><div class="vl" style="left:163.5px;top:934px;height:17px"></div><div class="vl" style="left:222.5px;top:934px;height:17px"></div><div class="vl" style="left:307.5px;top:934px;height:17px"></div><div class="vl" style="left:402.5px;top:934px;height:17px"></div><div class="vl" style="left:497.5px;top:934px;height:17px"></div><div class="t" style="left:7px;top:935px">48</div><div class="t ct" style="left:24.5px;top:935px;width:50px">30600</div><div class="t ct" style="left:74.5px;top:935px;width:50px">30600</div><div class="t ct" style="left:124.5px;top:935px;width:39px">4</div><div class="t ct" style="left:163.5px;top:935px;width:59px">42.607</div><div class="t ct" style="left:222.5px;top:935px;width:85px">448.3649</div><div class="t ct" style="left:307.5px;top:935px;width:95px">8.508939e-10</div><div class="t ct" style="left:402.5px;top:935px;width:95px">3.149459e-02</div><div class="hl" style="left:0px;top:967px;width:498px"></div><div class="vl" style="left:24.5px;top:951px;height:17px"></div><div class="vl" style="left:74.5px;top:951px;height:17px"></div><div class="vl" style="left:124.5px;top:951px;height:17px"></div><div class="vl" style="left:163.5px;top:951px;height:17px"></div><div class="vl" style="left:222.5px;top:951px;height:17px"></div><div class="vl" style="left:307.5px;top:951px;height:17px"></div><div class="vl" style="left:402.5px;top:951px;height:17px"></div><div class="vl" style="left:497.5px;top:951px;height:17px"></div><div class="t" style="left:7px;top:952px">49</div><div class="t ct" style="left:24.5px;top:952px;width:50px">30600</div><div class="t ct" style="left:74.5px;top:952px;width:50px">30600</div><div class="t ct" style="left:124.5px;top:952px;width:39px">4</div><div class="t ct" style="left:163.5px;top:952px;width:59px">42.953</div><div class="t ct" style="left:222.5px;top:952px;width:85px">444.7539</div><div class="t ct" style="left:307.5px;top:952px;width:95px">8.508939e-10</div><div class="t ct" style="left:402.5px;top:952px;width:95px">3.149459e-02</div><div class="hl" style="left:0px;top:984px;width:498px"></div><div class="vl" style="left:24.5px;top:968px;height:17px"></div><div class="vl" style="left:74.5px;top:968px;height:17px"></div><div class="vl" style="left:124.5px;top:968px;height:17px"></div><div class="vl" style="left:163.5px;top:968px;height:17px"></div><div class="vl" style="left:222.5px;top:968px;height:17px"></div><div class="vl" style="left:307.5px;top:968px;height:17px"></div><div class="vl" style="left:402.5px;top:968px;height:17px"></div><div class="vl" style="left:497.5px;top:968px;height:17px"></div><div class="t" style="left:7px;top:969px">50</div><div class="t ct" style="left:24.5px;top:969px;width:50px">30600</div><div class="t ct" style="left:74.5px;top:969px;width:50px">30600</div><div class="t ct" style="left:124.5px;top:969px;width:39px">4</div><div class="t ct" style="left:163.5px;top:969px;width:59px">43.133</div><div class="t ct" style="left:222.5px;top:969px;width:85px">442.8960</div><div class="t ct" style="left:307.5px;top:969px;width:95px">8.508939e-10</div><div class="t ct" style="left:402.5px;top:969px;width:95px">3.149459e-02</div><div class="a" style="left:0px;top:985px;width:516px;height:20px;background:#f0f0f0;border-top:1px solid #dcdcdc"></div><div class="a" style="left:49.5px;top:987px;width:1px;height:17px;background:#d8d8d8"></div><div class="a" style="left:109px;top:987px;width:1px;height:17px;background:#d8d8d8"></div><div class="a" style="left:170px;top:987px;width:1px;height:17px;background:#d8d8d8"></div><div class="a" style="left:319.5px;top:987px;width:1px;height:17px;background:#d8d8d8"></div><div class="t lb" style="left:11px;top:986px;line-height:20px;height:20px">50/50</div><div class="t lb" style="left:61px;top:986px;line-height:20px;height:20px">64-비트</div><div class="t lb" style="left:109px;top:986px;line-height:20px;height:20px">12 ThreadsAl</div><div class="t lb" style="left:186px;top:986px;line-height:20px;height:20px">453.6301 GFLOPS (최고)</div><div class="t lb" style="left:322px;top:986px;line-height:20px;height:20px">12th Gen Intel® Core™ i5-1</div></div></div><div class="a" style="left:455px;top:750px;width:0;height:0"><div class="a" style="left:976px;top:1px;width:520px;height:325px;background:#f0f0f0;border:1px solid #6f6f6f;border-top:none;border-right:none;overflow:hidden"><div class="a" style="left:0px;top:0px;width:520px;height:48px;background:#fff"></div><svg class="ic" style="left:8px;top:6px"><use href="#gear"/></svg><div class="tb" style="left:29px;top:7px">종료 - LinX v0.9.12 for Intel</div><div class="a" style="left:396px;top:14px;width:10px;height:1px;background:#888"></div><div class="a" style="left:441px;top:9px;width:10px;height:10px;border:1px solid #ddd"></div><svg class="a" style="left:486px;top:9px" width="10" height="10"><path d="M0 0L10 10M10 0L0 10" stroke="#666" stroke-width="1"/></svg><div class="t" style="left:7px;top:32px;color:#777;font-size:12px;letter-spacing:-0.3px">파일(F)</div><div class="t" style="left:59px;top:32px;color:#777;font-size:12px;letter-spacing:-0.3px">설정(S)</div><div class="t" style="left:111px;top:32px;color:#777;font-size:12px;letter-spacing:-0.3px">그래프(G)</div><div class="t" style="left:178px;top:32px;color:#777;font-size:12px;letter-spacing:-0.3px">정보(Z)</div><div class="t lb" style="left:5px;top:57px">문제 크기:</div><div class="a" style="left:61px;top:55px;width:60px;height:22px;background:#fff;border:1px solid #7a7a7a"></div><div class="t" style="left:64px;top:55px;line-height:20px">61383</div><svg class="a" style="left:103px;top:59px" width="12" height="12"><use href="#dd"/></svg><div class="t lb" style="left:158px;top:57px">메모리 크기(MB):</div><div class="a" style="left:247px;top:55px;width:55px;height:22px;background:#fff;border:1px solid #7a7a7a"></div><div class="t" style="left:250px;top:55px;line-height:20px">28794</div><svg class="a" style="left:284px;top:59px" width="12" height="12"><use href="#dd"/></svg><div class="t lb" style="left:306px;top:55px">최대</div><div class="t lb" style="left:370px;top:57px">실행:</div><div class="a" style="left:400px;top:55px;width:50px;height:22px;background:#fff;border:1px solid #7a7a7a"></div><div class="t" style="left:403px;top:55px;line-height:20px">10</div><svg class="a" style="left:432px;top:59px" width="12" height="12"><use href="#dd"/></svg><div class="a" style="left:455px;top:55px;width:55px;height:22px;background:#e5e5e5;border-color:#adadad;border:1px solid #7a7a7a"></div><div class="t" style="left:458px;top:55px;line-height:20px">회</div><svg class="a" style="left:492px;top:59px" width="12" height="12"><use href="#dd"/></svg><div class="a ct" style="left:6px;top:81px;width:73px;height:23px;background:#e1e1e1;border:1px solid #adadad;line-height:22px;font-size:12px">시작</div><div class="a" style="left:85px;top:81px;width:343px;height:23px;border:1px solid #9a9a9a;background:#fff;padding:1px"><div style="width:100%;height:100%;background:#729fd2;border:1px solid #1d3f70"></div></div><div class="t ct lb" style="left:85px;top:81px;width:343px;line-height:23px;height:23px">오류 없이 정상 종료: 58 분 30 초</div><div class="a ct" style="left:436px;top:81px;width:73px;height:23px;background:#cccccc;border:1px solid #bfbfbf;line-height:22px;font-size:12px;color:#838383">정지</div><div class="a" style="left:0px;top:110px;width:520px;height:875px;background:#fff"></div><div class="vl" style="left:24.5px;top:111px;height:25px;background:#e5e5e5"></div><div class="vl" style="left:74.5px;top:111px;height:25px;background:#e5e5e5"></div><div class="vl" style="left:124.5px;top:111px;height:25px;background:#e5e5e5"></div><div class="vl" style="left:163.5px;top:111px;height:25px;background:#e5e5e5"></div><div class="vl" style="left:222.5px;top:111px;height:25px;background:#e5e5e5"></div><div class="vl" style="left:307.5px;top:111px;height:25px;background:#e5e5e5"></div><div class="vl" style="left:402.5px;top:111px;height:25px;background:#e5e5e5"></div><div class="vl" style="left:497.5px;top:111px;height:25px;background:#e5e5e5"></div><div class="t" style="left:8px;top:111px;line-height:25px;height:25px">#</div><div class="t ct" style="left:24.5px;top:111px;width:50px;line-height:25px;height:25px">Size</div><div class="t ct" style="left:74.5px;top:111px;width:50px;line-height:25px;height:25px">LDA</div><div class="t ct" style="left:124.5px;top:111px;width:39px;line-height:25px;height:25px">Align</div><div class="t ct" style="left:163.5px;top:111px;width:59px;line-height:25px;height:25px">Time</div><div class="t ct" style="left:222.5px;top:111px;width:85px;line-height:25px;height:25px">GFLOPS</div><div class="t ct" style="left:307.5px;top:111px;width:95px;line-height:25px;height:25px">Residual</div><div class="t ct" style="left:402.5px;top:111px;width:95px;line-height:25px;height:25px">Residual (norm.)</div><div class="hl" style="left:0px;top:151px;width:498px"></div><div class="vl" style="left:24.5px;top:135px;height:17px"></div><div class="vl" style="left:74.5px;top:135px;height:17px"></div><div class="vl" style="left:124.5px;top:135px;height:17px"></div><div class="vl" style="left:163.5px;top:135px;height:17px"></div><div class="vl" style="left:222.5px;top:135px;height:17px"></div><div class="vl" style="left:307.5px;top:135px;height:17px"></div><div class="vl" style="left:402.5px;top:135px;height:17px"></div><div class="vl" style="left:497.5px;top:135px;height:17px"></div><div class="t" style="left:7px;top:136px">1</div><div class="t ct" style="left:24.5px;top:136px;width:50px">61383</div><div class="t ct" style="left:74.5px;top:136px;width:50px">61384</div><div class="t ct" style="left:124.5px;top:136px;width:39px">4</div><div class="t ct" style="left:163.5px;top:136px;width:59px">337.961</div><div class="t ct" style="left:222.5px;top:136px;width:85px">456.2551</div><div class="t ct" style="left:307.5px;top:136px;width:95px">3.259078e-09</div><div class="t ct" style="left:402.5px;top:136px;width:95px">3.027532e-02</div><div class="hl" style="left:0px;top:168px;width:498px"></div><div class="vl" style="left:24.5px;top:152px;height:17px"></div><div class="vl" style="left:74.5px;top:152px;height:17px"></div><div class="vl" style="left:124.5px;top:152px;height:17px"></div><div class="vl" style="left:163.5px;top:152px;height:17px"></div><div class="vl" style="left:222.5px;top:152px;height:17px"></div><div class="vl" style="left:307.5px;top:152px;height:17px"></div><div class="vl" style="left:402.5px;top:152px;height:17px"></div><div class="vl" style="left:497.5px;top:152px;height:17px"></div><div class="t" style="left:7px;top:153px">2</div><div class="t ct" style="left:24.5px;top:153px;width:50px">61383</div><div class="t ct" style="left:74.5px;top:153px;width:50px">61384</div><div class="t ct" style="left:124.5px;top:153px;width:39px">4</div><div class="t ct" style="left:163.5px;top:153px;width:59px">334.570</div><div class="t ct" style="left:222.5px;top:153px;width:85px">460.8801</div><div class="t ct" style="left:307.5px;top:153px;width:95px">3.259078e-09</div><div class="t ct" style="left:402.5px;top:153px;width:95px">3.027532e-02</div><div class="hl" style="left:0px;top:185px;width:498px"></div><div class="vl" style="left:24.5px;top:169px;height:17px"></div><div class="vl" style="left:74.5px;top:169px;height:17px"></div><div class="vl" style="left:124.5px;top:169px;height:17px"></div><div class="vl" style="left:163.5px;top:169px;height:17px"></div><div class="vl" style="left:222.5px;top:169px;height:17px"></div><div class="vl" style="left:307.5px;top:169px;height:17px"></div><div class="vl" style="left:402.5px;top:169px;height:17px"></div><div class="vl" style="left:497.5px;top:169px;height:17px"></div><div class="t" style="left:7px;top:170px">3</div><div class="t ct" style="left:24.5px;top:170px;width:50px">61383</div><div class="t ct" style="left:74.5px;top:170px;width:50px">61384</div><div class="t ct" style="left:124.5px;top:170px;width:39px">4</div><div class="t ct" style="left:163.5px;top:170px;width:59px">335.603</div><div class="t ct" style="left:222.5px;top:170px;width:85px">459.4608</div><div class="t ct" style="left:307.5px;top:170px;width:95px">3.259078e-09</div><div class="t ct" style="left:402.5px;top:170px;width:95px">3.027532e-02</div><div class="hl" style="left:0px;top:202px;width:498px"></div><div class="vl" style="left:24.5px;top:186px;height:17px"></div><div class="vl" style="left:74.5px;top:186px;height:17px"></div><div class="vl" style="left:124.5px;top:186px;height:17px"></div><div class="vl" style="left:163.5px;top:186px;height:17px"></div><div class="vl" style="left:222.5px;top:186px;height:17px"></div><div class="vl" style="left:307.5px;top:186px;height:17px"></div><div class="vl" style="left:402.5px;top:186px;height:17px"></div><div class="vl" style="left:497.5px;top:186px;height:17px"></div><div class="t" style="left:7px;top:187px">4</div><div class="t ct" style="left:24.5px;top:187px;width:50px">61383</div><div class="t ct" style="left:74.5px;top:187px;width:50px">61384</div><div class="t ct" style="left:124.5px;top:187px;width:39px">4</div><div class="t ct" style="left:163.5px;top:187px;width:59px">336.379</div><div class="t ct" style="left:222.5px;top:187px;width:85px">458.4009</div><div class="t ct" style="left:307.5px;top:187px;width:95px">3.259078e-09</div><div class="t ct" style="left:402.5px;top:187px;width:95px">3.027532e-02</div><div class="hl" style="left:0px;top:219px;width:498px"></div><div class="vl" style="left:24.5px;top:203px;height:17px"></div><div class="vl" style="left:74.5px;top:203px;height:17px"></div><div class="vl" style="left:124.5px;top:203px;height:17px"></div><div class="vl" style="left:163.5px;top:203px;height:17px"></div><div class="vl" style="left:222.5px;top:203px;height:17px"></div><div class="vl" style="left:307.5px;top:203px;height:17px"></div><div class="vl" style="left:402.5px;top:203px;height:17px"></div><div class="vl" style="left:497.5px;top:203px;height:17px"></div><div class="t" style="left:7px;top:204px">5</div><div class="t ct" style="left:24.5px;top:204px;width:50px">61383</div><div class="t ct" style="left:74.5px;top:204px;width:50px">61384</div><div class="t ct" style="left:124.5px;top:204px;width:39px">4</div><div class="t ct" style="left:163.5px;top:204px;width:59px">334.740</div><div class="t ct" style="left:222.5px;top:204px;width:85px">460.6449</div><div class="t ct" style="left:307.5px;top:204px;width:95px">3.259078e-09</div><div class="t ct" style="left:402.5px;top:204px;width:95px">3.027532e-02</div><div class="a gr" style="left:0px;top:220px;width:498px;height:17px"></div><div class="hl" style="left:0px;top:236px;width:498px"></div><div class="vl" style="left:24.5px;top:220px;height:17px"></div><div class="vl" style="left:74.5px;top:220px;height:17px"></div><div class="vl" style="left:124.5px;top:220px;height:17px"></div><div class="vl" style="left:163.5px;top:220px;height:17px"></div><div class="vl" style="left:222.5px;top:220px;height:17px"></div><div class="vl" style="left:307.5px;top:220px;height:17px"></div><div class="vl" style="left:402.5px;top:220px;height:17px"></div><div class="vl" style="left:497.5px;top:220px;height:17px"></div><div class="t" style="left:7px;top:221px">6</div><div class="t ct" style="left:24.5px;top:221px;width:50px">61383</div><div class="t ct" style="left:74.5px;top:221px;width:50px">61384</div><div class="t ct" style="left:124.5px;top:221px;width:39px">4</div><div class="t ct" style="left:163.5px;top:221px;width:59px">334.281</div><div class="t ct" style="left:222.5px;top:221px;width:85px">461.2784</div><div class="t ct" style="left:307.5px;top:221px;width:95px">3.259078e-09</div><div class="t ct" style="left:402.5px;top:221px;width:95px">3.027532e-02</div><div class="hl" style="left:0px;top:253px;width:498px"></div><div class="vl" style="left:24.5px;top:237px;height:17px"></div><div class="vl" style="left:74.5px;top:237px;height:17px"></div><div class="vl" style="left:124.5px;top:237px;height:17px"></div><div class="vl" style="left:163.5px;top:237px;height:17px"></div><div class="vl" style="left:222.5px;top:237px;height:17px"></div><div class="vl" style="left:307.5px;top:237px;height:17px"></div><div class="vl" style="left:402.5px;top:237px;height:17px"></div><div class="vl" style="left:497.5px;top:237px;height:17px"></div><div class="t" style="left:7px;top:238px">7</div><div class="t ct" style="left:24.5px;top:238px;width:50px">61383</div><div class="t ct" style="left:74.5px;top:238px;width:50px">61384</div><div class="t ct" style="left:124.5px;top:238px;width:39px">4</div><div class="t ct" style="left:163.5px;top:238px;width:59px">334.525</div><div class="t ct" style="left:222.5px;top:238px;width:85px">460.9414</div><div class="t ct" style="left:307.5px;top:238px;width:95px">3.259078e-09</div><div class="t ct" style="left:402.5px;top:238px;width:95px">3.027532e-02</div><div class="hl" style="left:0px;top:270px;width:498px"></div><div class="vl" style="left:24.5px;top:254px;height:17px"></div><div class="vl" style="left:74.5px;top:254px;height:17px"></div><div class="vl" style="left:124.5px;top:254px;height:17px"></div><div class="vl" style="left:163.5px;top:254px;height:17px"></div><div class="vl" style="left:222.5px;top:254px;height:17px"></div><div class="vl" style="left:307.5px;top:254px;height:17px"></div><div class="vl" style="left:402.5px;top:254px;height:17px"></div><div class="vl" style="left:497.5px;top:254px;height:17px"></div><div class="t" style="left:7px;top:255px">8</div><div class="t ct" style="left:24.5px;top:255px;width:50px">61383</div><div class="t ct" style="left:74.5px;top:255px;width:50px">61384</div><div class="t ct" style="left:124.5px;top:255px;width:39px">4</div><div class="t ct" style="left:163.5px;top:255px;width:59px">335.990</div><div class="t ct" style="left:222.5px;top:255px;width:85px">458.9312</div><div class="t ct" style="left:307.5px;top:255px;width:95px">3.259078e-09</div><div class="t ct" style="left:402.5px;top:255px;width:95px">3.027532e-02</div><div class="hl" style="left:0px;top:287px;width:498px"></div><div class="vl" style="left:24.5px;top:271px;height:17px"></div><div class="vl" style="left:74.5px;top:271px;height:17px"></div><div class="vl" style="left:124.5px;top:271px;height:17px"></div><div class="vl" style="left:163.5px;top:271px;height:17px"></div><div class="vl" style="left:222.5px;top:271px;height:17px"></div><div class="vl" style="left:307.5px;top:271px;height:17px"></div><div class="vl" style="left:402.5px;top:271px;height:17px"></div><div class="vl" style="left:497.5px;top:271px;height:17px"></div><div class="t" style="left:7px;top:272px">9</div><div class="t ct" style="left:24.5px;top:272px;width:50px">61383</div><div class="t ct" style="left:74.5px;top:272px;width:50px">61384</div><div class="t ct" style="left:124.5px;top:272px;width:39px">4</div><div class="t ct" style="left:163.5px;top:272px;width:59px">334.650</div><div class="t ct" style="left:222.5px;top:272px;width:85px">460.7696</div><div class="t ct" style="left:307.5px;top:272px;width:95px">3.259078e-09</div><div class="t ct" style="left:402.5px;top:272px;width:95px">3.027532e-02</div><div class="hl" style="left:0px;top:304px;width:498px"></div><div class="vl" style="left:24.5px;top:288px;height:17px"></div><div class="vl" style="left:74.5px;top:288px;height:17px"></div><div class="vl" style="left:124.5px;top:288px;height:17px"></div><div class="vl" style="left:163.5px;top:288px;height:17px"></div><div class="vl" style="left:222.5px;top:288px;height:17px"></div><div class="vl" style="left:307.5px;top:288px;height:17px"></div><div class="vl" style="left:402.5px;top:288px;height:17px"></div><div class="vl" style="left:497.5px;top:288px;height:17px"></div><div class="t" style="left:7px;top:289px">10</div><div class="t ct" style="left:24.5px;top:289px;width:50px">61383</div><div class="t ct" style="left:74.5px;top:289px;width:50px">61384</div><div class="t ct" style="left:124.5px;top:289px;width:39px">4</div><div class="t ct" style="left:163.5px;top:289px;width:59px">336.314</div><div class="t ct" style="left:222.5px;top:289px;width:85px">458.4889</div><div class="t ct" style="left:307.5px;top:289px;width:95px">3.259078e-09</div><div class="t ct" style="left:402.5px;top:289px;width:95px">3.027532e-02</div><div class="a" style="left:0px;top:305px;width:520px;height:20px;background:#f0f0f0;border-top:1px solid #dcdcdc"></div><div class="a" style="left:49.5px;top:307px;width:1px;height:17px;background:#d8d8d8"></div><div class="a" style="left:109px;top:307px;width:1px;height:17px;background:#d8d8d8"></div><div class="a" style="left:170px;top:307px;width:1px;height:17px;background:#d8d8d8"></div><div class="a" style="left:319.5px;top:307px;width:1px;height:17px;background:#d8d8d8"></div><div class="t lb" style="left:11px;top:306px;line-height:20px;height:20px">10/10</div><div class="t lb" style="left:61px;top:306px;line-height:20px;height:20px">64-비트</div><div class="t lb" style="left:113px;top:306px;line-height:20px;height:20px">12 스레드</div><div class="t lb" style="left:184px;top:306px;line-height:20px;height:20px">461.2784 GFLOPS (최고)</div><div class="t lb" style="left:322px;top:306px;line-height:20px;height:20px">12th Gen Intel® Core™ i5-12600</div></div></div><div class="a" style="left:1522px;top:222px;width:367px;height:150px;background:#fff;border:1px solid #5a5a5a;border-top:none"></div><div class="a" style="left:1523px;top:330px;width:365px;height:41px;background:#f0f0f0"></div><div class="tb" style="left:1532px;top:229px">TestMem5 v0.12</div><svg class="a" style="left:1868px;top:231px" width="11" height="11"><path d="M0.5 0.5L10.5 10.5M10.5 0.5L0.5 10.5" stroke="#777" stroke-width="1"/></svg><svg class="a" style="left:1543px;top:274px" width="34" height="34">
<defs><linearGradient id="ig" x1="0.2" y1="0" x2="0.8" y2="1"><stop offset="0" stop-color="#4a80e0"/><stop offset="0.45" stop-color="#2f5fd0"/><stop offset="0.5" stop-color="#1e44b8"/><stop offset="1" stop-color="#2238c0"/></linearGradient></defs>
<circle cx="17" cy="17" r="16" fill="#fff" stroke="#777" stroke-width="1"/><circle cx="17" cy="17" r="14" fill="url(#ig)"/>
<circle cx="17" cy="9" r="2.2" fill="#fff"/><rect x="15" y="13" width="4" height="13" rx="1" fill="#e8e8e8"/></svg><div class="t" style="left:1585px;top:284px;font-size:12px;letter-spacing:-0.1px">Тестирование закончено, ошибок не обнаружено.</div><div class="a ct" style="left:1799px;top:340px;width:75px;height:23px;background:#e1e1e1;border:1px solid #adadad;line-height:21px;font-size:12px">OK</div><div class="a" style="left:1522px;top:381px;width:366px;height:365px;background:#f0f0f0;border:1px solid #5a5a5a;border-top:none"></div><div class="a" style="left:1523px;top:381px;width:364px;height:25px;background:#fff"></div><svg class="a" style="left:1526px;top:388px" width="15" height="12"><rect x="0" y="0" width="14" height="8" fill="#2a6a2a"/>
<path d="M2 1v6M4.5 1v6M7 1v6M9.5 1v6M12 1v6" stroke="#c8e8a0" stroke-width="1"/><rect x="0" y="8" width="14" height="3" fill="#b8e020"/></svg><div class="tb" style="left:1546px;top:385px">TestMem5 v0.12</div><div class="a" style="left:1770px;top:393px;width:10px;height:1px;background:#888"></div><div class="a" style="left:1814px;top:388px;width:10px;height:10px;border:1px solid #ddd"></div><svg class="a" style="left:1860px;top:388px" width="11" height="11"><path d="M0.5 0.5L10.5 10.5M10.5 0.5L0.5 10.5" stroke="#666" stroke-width="1"/></svg><div class="a" style="left:1528px;top:415px;width:184px;height:88px;border:1px solid #dcdcdc;box-shadow:inset 1px 1px 0 #fff"></div><div class="t ct" style="left:1561px;top:408px;width:120px"><span style="background:#f0f0f0;padding:0 2px">Процессор</span></div><div class="t ct" style="left:1528px;top:423px;width:184px;color:#1a1a80">12th Gen Intel Core i5-12600</div><div class="t lb" style="left:1535px;top:445px;color:#000">CPU ID</div><div class="a ct" style="left:1581px;top:443px;width:94px;height:15px;border-top:1px solid #a0a0a0;border-left:1px solid #a0a0a0;border-bottom:1px solid #fff;border-right:1px solid #fff;line-height:14px;color:#1a1a80;white-space:nowrap">Intel&nbsp; (6 · 97 · 5)</div><div class="a ct" style="left:1677px;top:443px;width:22px;height:15px;border-top:1px solid #a0a0a0;border-left:1px solid #a0a0a0;border-bottom:1px solid #fff;border-right:1px solid #fff;line-height:14px;color:#1a1a80;white-space:nowrap">x12</div><div class="t lb" style="left:1535px;top:462px;color:#000">Частота</div><div class="a ct" style="left:1581px;top:461px;width:64px;height:15px;border-top:1px solid #a0a0a0;border-left:1px solid #a0a0a0;border-bottom:1px solid #fff;border-right:1px solid #fff;line-height:14px;color:#1a1a80;white-space:nowrap">3302 MHz</div><div class="t lb" style="left:1649px;top:462px;color:#000">Исп.</div><div class="a ct" style="left:1677px;top:461px;width:22px;height:15px;border-top:1px solid #a0a0a0;border-left:1px solid #a0a0a0;border-bottom:1px solid #fff;border-right:1px solid #fff;line-height:14px;color:#1a1a80;white-space:nowrap">12</div><div class="t lb" style="left:1535px;top:481px;color:#000">SSE</div><div class="a ct" style="left:1581px;top:479px;width:118px;height:15px;border-top:1px solid #a0a0a0;border-left:1px solid #a0a0a0;border-bottom:1px solid #fff;border-right:1px solid #fff;line-height:14px;color:#1a1a80;white-space:nowrap">4.8 sec/Gb</div><div class="a" style="left:1719px;top:415px;width:161px;height:88px;border:1px solid #dcdcdc;box-shadow:inset 1px 1px 0 #fff"></div><div class="t ct" style="left:1739px;top:408px;width:120px"><span style="background:#f0f0f0;padding:0 2px">Память</span></div><div class="t lb" style="left:1727px;top:427px;color:#000">Всего</div><div class="a ct" style="left:1804px;top:426px;width:62px;height:15px;border-top:1px solid #a0a0a0;border-left:1px solid #a0a0a0;border-bottom:1px solid #fff;border-right:1px solid #fff;line-height:14px;color:#1a1a80;white-space:nowrap">32556Mb</div><div class="t lb" style="left:1727px;top:445px;color:#000">Свободно</div><div class="a ct" style="left:1804px;top:444px;width:62px;height:15px;border-top:1px solid #a0a0a0;border-left:1px solid #a0a0a0;border-bottom:1px solid #fff;border-right:1px solid #fff;line-height:14px;color:#1a1a80;white-space:nowrap">30109Mb</div><div class="t lb" style="left:1727px;top:462px;color:#a0a0a0">Подкачка</div><div class="a ct" style="left:1804px;top:461px;width:62px;height:15px;border-top:1px solid #a0a0a0;border-left:1px solid #a0a0a0;border-bottom:1px solid #fff;border-right:1px solid #fff;line-height:14px;color:#a0a0a0;white-space:nowrap">6284Mb</div><div class="t lb" style="left:1727px;top:481px;color:#000">Используется</div><div class="a ct" style="left:1804px;top:479px;width:62px;height:15px;border-top:1px solid #a0a0a0;border-left:1px solid #a0a0a0;border-bottom:1px solid #fff;border-right:1px solid #fff;line-height:14px;color:#1a1a80;white-space:nowrap"></div><div class="a" style="left:1528px;top:517px;width:352px;height:2px;border-top:1px solid #a0a0a0;border-bottom:1px solid #fff"></div><div class="a" style="left:1528px;top:614px;width:352px;height:2px;border-top:1px solid #a0a0a0;border-bottom:1px solid #fff"></div><div class="a" style="left:1528px;top:529px;width:220px;height:73px;border:1px solid #dcdcdc;box-shadow:inset 1px 1px 0 #fff"></div><div class="t ct" style="left:1578px;top:522px;width:120px"><span style="background:#f0f0f0;padding:0 2px">Тесты</span></div><div class="a ct" style="left:1537.0px;top:541px;width:11px;height:15px;background:#c8c8c8;line-height:16px;letter-spacing:-0.5px">0</div><div class="a ct" style="left:1549.6px;top:541px;width:11px;height:15px;background:#c8c8c8;line-height:16px;letter-spacing:-0.5px">1</div><div class="a ct" style="left:1562.3px;top:541px;width:11px;height:15px;background:#c8c8c8;line-height:16px;letter-spacing:-0.5px">2</div><div class="a ct" style="left:1574.9px;top:541px;width:11px;height:15px;background:#c8c8c8;line-height:16px;letter-spacing:-0.5px">3</div><div class="a ct" style="left:1587.5px;top:541px;width:11px;height:15px;background:#c8c8c8;line-height:16px;letter-spacing:-0.5px">4</div><div class="a ct" style="left:1600.2px;top:541px;width:11px;height:15px;background:#c8c8c8;line-height:16px;letter-spacing:-0.5px">5</div><div class="a ct" style="left:1612.8px;top:541px;width:11px;height:15px;background:#c8c8c8;line-height:16px;letter-spacing:-0.5px">6</div><div class="a ct" style="left:1625.4px;top:541px;width:11px;height:15px;background:#c8c8c8;line-height:16px;letter-spacing:-0.5px">7</div><div class="a ct" style="left:1638.0px;top:541px;width:11px;height:15px;background:#c8c8c8;line-height:16px;letter-spacing:-0.5px">8</div><div class="a ct" style="left:1650.7px;top:541px;width:11px;height:15px;background:#c8c8c8;line-height:16px;letter-spacing:-0.5px">9</div><div class="a ct" style="left:1663.3px;top:541px;width:11px;height:15px;background:#c8c8c8;line-height:16px;letter-spacing:-0.5px">10</div><div class="a ct" style="left:1675.9px;top:541px;width:11px;height:15px;background:#c8c8c8;line-height:16px;letter-spacing:-0.5px">11</div><div class="a ct" style="left:1688.6px;top:541px;width:11px;height:15px;background:#c8c8c8;line-height:16px;letter-spacing:-0.5px">12</div><div class="a ct" style="left:1701.2px;top:541px;width:11px;height:15px;background:#c8c8c8;line-height:16px;letter-spacing:-0.5px">13</div><div class="a ct" style="left:1713.8px;top:541px;width:11px;height:15px;background:#c8c8c8;line-height:16px;letter-spacing:-0.5px">14</div><div class="a ct" style="left:1726.5px;top:541px;width:11px;height:15px;background:#c8c8c8;line-height:16px;letter-spacing:-0.5px">15</div><div class="a ct" style="left:1537px;top:559px;width:202px;height:15px;border-top:1px solid #a0a0a0;border-left:1px solid #a0a0a0;border-bottom:1px solid #fff;border-right:1px solid #fff;line-height:14px;color:#1a1a80;white-space:nowrap"><span style="display:block;text-align:left;padding-left:3px">…14,2,8,14,2,10,11,1,15,2,10,3</span></div><div class="a ct" style="left:1537px;top:577px;width:202px;height:15px;border-top:1px solid #a0a0a0;border-left:1px solid #a0a0a0;border-bottom:1px solid #fff;border-right:1px solid #fff;line-height:14px;color:#1a1a80;white-space:nowrap"></div><div class="a" style="left:1755px;top:529px;width:125px;height:73px;border:1px solid #dcdcdc;box-shadow:inset 1px 1px 0 #fff"></div><div class="t ct" style="left:1757px;top:522px;width:120px"><span style="background:#f0f0f0;padding:0 2px">Состояние</span></div><div class="t lb" style="left:1762px;top:541px;color:#000">Время</div><div class="a ct" style="left:1804px;top:541px;width:62px;height:15px;border-top:1px solid #a0a0a0;border-left:1px solid #a0a0a0;border-bottom:1px solid #fff;border-right:1px solid #fff;line-height:14px;color:#1a1a80;white-space:nowrap">1:41.00</div><div class="t lb" style="left:1762px;top:558px;color:#000">Цикл</div><div class="a ct" style="left:1804px;top:559px;width:62px;height:15px;border-top:1px solid #a0a0a0;border-left:1px solid #a0a0a0;border-bottom:1px solid #fff;border-right:1px solid #fff;line-height:14px;color:#1a1a80;white-space:nowrap">3</div><div class="t lb" style="left:1762px;top:576px;color:#000">Ошибки</div><div class="a ct" style="left:1804px;top:577px;width:62px;height:15px;border-top:1px solid #a0a0a0;border-left:1px solid #a0a0a0;border-bottom:1px solid #fff;border-right:1px solid #fff;line-height:14px;color:#1a1a80;white-space:nowrap"></div><div class="a" style="left:1530px;top:629px;width:218px;height:108px;background:#fff;border:1px solid #828282;padding:2px 3px;line-height:13px;white-space:nowrap">Настройка: Extreme1 @anta777<br>Начало проверки в 10:55, 2.2Gb x12<br>Проверка закончена через 1:41.00,<br>без ошибок.</div><div class="a" style="left:1755px;top:627px;width:125px;height:112px;border:1px solid #dcdcdc;box-shadow:inset 1px 1px 0 #fff"></div><div class="t ct" style="left:1756px;top:620px;width:120px"><span style="background:#f0f0f0;padding:0 2px">testmem.tz.ru</span></div><div class="a ct" style="left:1765px;top:641px;width:104px;height:21px;background:#e1e1e1;border:1px solid #adadad;line-height:19px;white-space:nowrap">Интернет</div><div class="a ct" style="left:1765px;top:664px;width:104px;height:21px;background:#e1e1e1;border:1px solid #adadad;line-height:19px;white-space:nowrap">Почта</div><div class="a ct" style="left:1765px;top:687px;width:104px;height:21px;background:#e1e1e1;border:1px solid #adadad;line-height:19px;white-space:nowrap">Настроить и выйти</div><div class="a ct" style="left:1765px;top:709px;width:104px;height:21px;background:#e1e1e1;border:1px solid #adadad;line-height:19px;white-space:nowrap">Выйти</div></body></html>
